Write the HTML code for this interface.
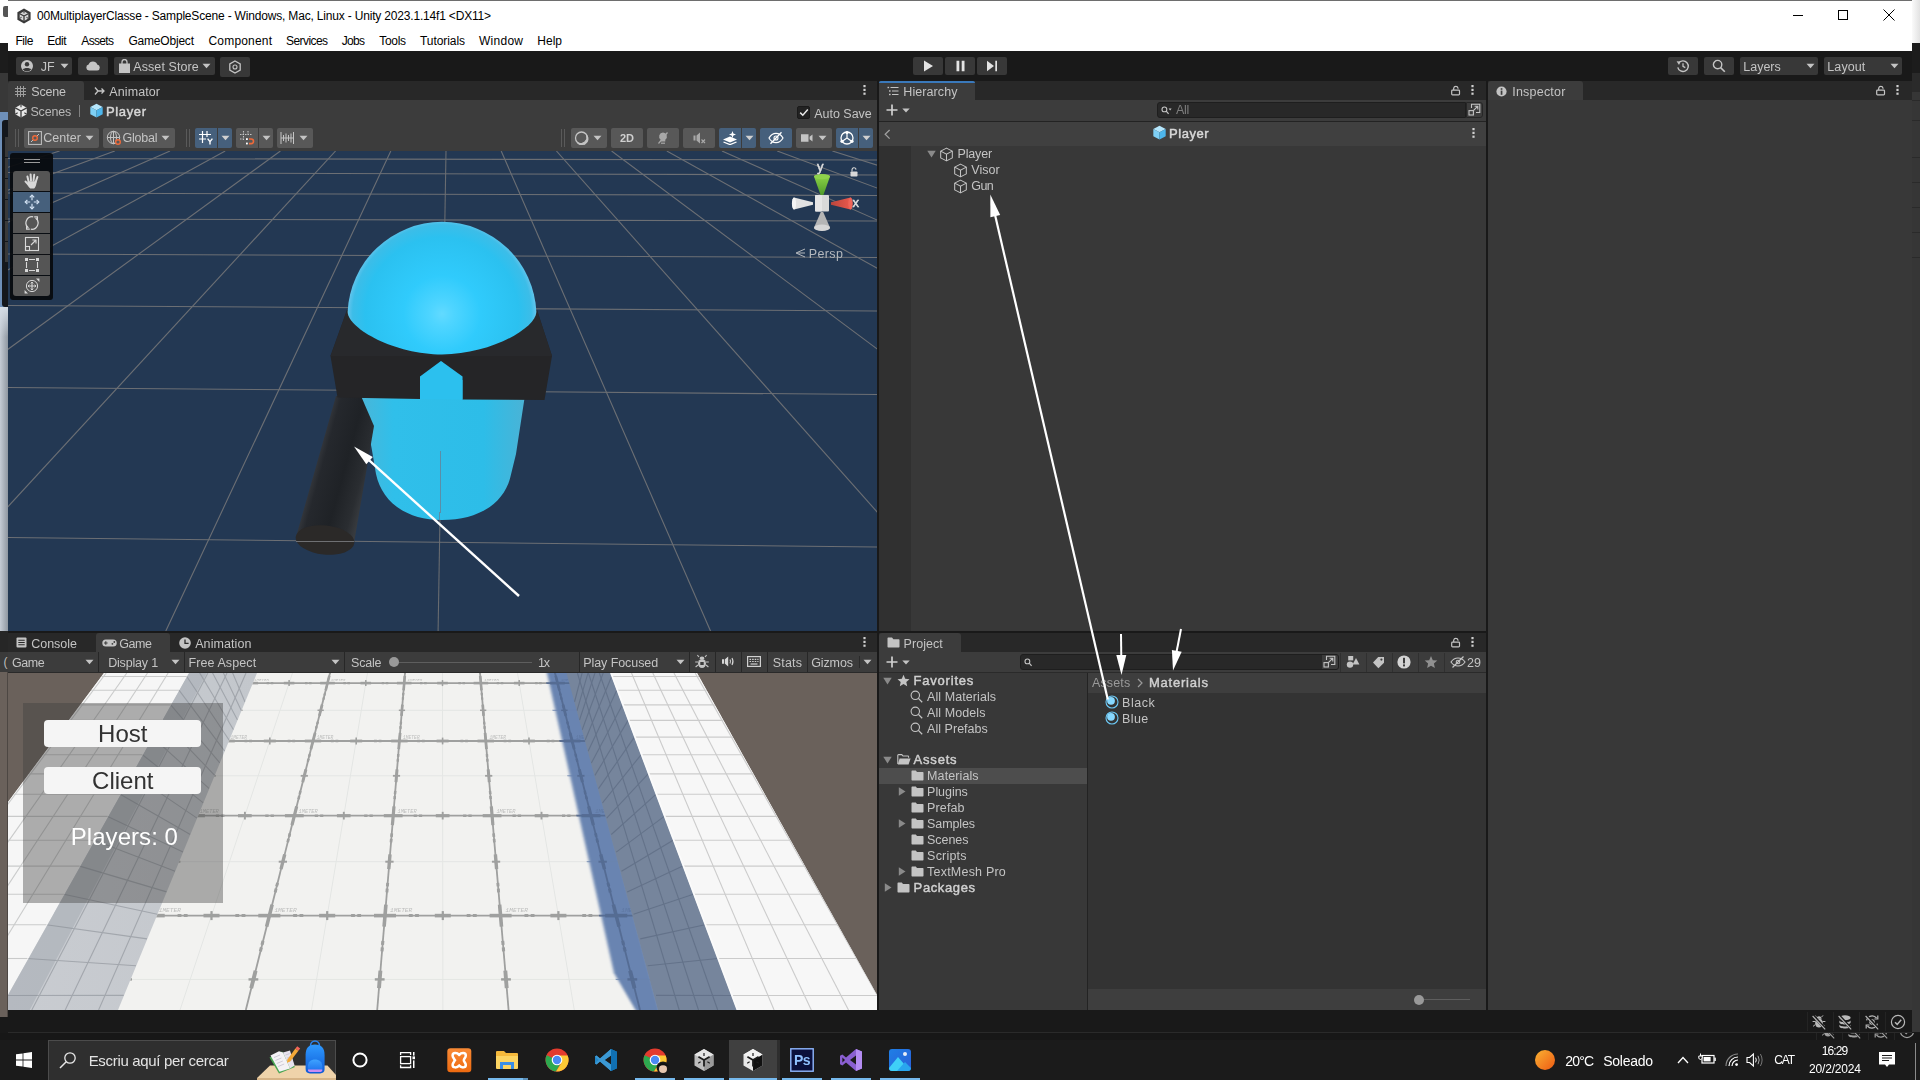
<!DOCTYPE html>
<html lang="en">
<head>
<meta charset="utf-8">
<title>Unity Editor</title>
<style>
*{margin:0;padding:0;box-sizing:border-box}
html,body{width:1920px;height:1080px;overflow:hidden;background:#191919}
body{position:relative;font-family:"Liberation Sans",sans-serif;font-size:12px;color:#c4c4c4}
div,span.t,svg.s{position:absolute}
span.t{white-space:nowrap;display:block}
.b{background:#585858;border-radius:2px}
.bb{background:#46607c;border-radius:2px}
.tb{background:#383838;border-radius:2px}
</style>
</head>
<body>
<div style="left:0px;top:0px;width:8px;height:43px;background:#fff"></div>
<div style="left:3px;top:6px;width:5px;height:11px;background:#555;border-radius:2px 0 0 2px"></div>
<div style="left:0px;top:43px;width:8px;height:30px;background:#1c1c1c"></div>
<div style="left:0px;top:73px;width:8px;height:39px;background:#383838"></div>
<div style="left:0px;top:112px;width:8px;height:200px;background:#6e8fb8"></div>
<div style="left:2px;top:120px;width:6px;height:187px;background:#14171c;border-radius:3px 0 0 3px"></div>
<div style="left:5px;top:137px;width:3px;height:20px;background:#3a3a3a"></div>
<div style="left:5px;top:158px;width:3px;height:20px;background:#3a3a3a"></div>
<div style="left:5px;top:179px;width:3px;height:20px;background:#3a3a3a"></div>
<div style="left:5px;top:200px;width:3px;height:20px;background:#3a3a3a"></div>
<div style="left:5px;top:221px;width:3px;height:20px;background:#3a3a3a"></div>
<div style="left:5px;top:242px;width:3px;height:20px;background:#3a3a3a"></div>
<div style="left:0px;top:307px;width:8px;height:324px;background:linear-gradient(90deg,#c5ccd5,#8f97a1)"></div>
<div style="left:0px;top:307px;width:8px;height:30px;background:linear-gradient(180deg,#d5dde6,rgba(200,208,218,0))"></div>
<div style="left:0px;top:631px;width:8px;height:21px;background:#262626"></div>
<div style="left:0px;top:652px;width:8px;height:20px;background:#3a3a3a"></div>
<span class="t" style="left:3.5px;top:654px;font-size:12.01px;line-height:16px;height:16px;color:#bdbdbd;">(</span>
<div style="left:0px;top:672px;width:8px;height:345px;background:#6a615b"></div>
<div style="left:7px;top:672px;width:1px;height:345px;background:#4d4743"></div>
<div style="left:0px;top:1017px;width:8px;height:23px;background:#191919"></div>
<div style="left:1912px;top:0px;width:8px;height:43px;background:linear-gradient(90deg,#fafafa,#e2e2e2)"></div>
<div style="left:1912px;top:43px;width:8px;height:30px;background:#1c1c1c"></div>
<div style="left:1912px;top:73px;width:8px;height:19px;background:#2a2a2a"></div>
<div style="left:1912px;top:92px;width:8px;height:940px;background:#363636"></div>
<div style="left:1912px;top:100px;width:8px;height:1px;background:#2a2a2a"></div>
<div style="left:1912px;top:120px;width:8px;height:1px;background:#2a2a2a"></div>
<div style="left:1912px;top:157px;width:8px;height:1px;background:#2a2a2a"></div>
<div style="left:1912px;top:182px;width:8px;height:1px;background:#2a2a2a"></div>
<div style="left:1912px;top:207px;width:8px;height:1px;background:#2a2a2a"></div>
<div style="left:1912px;top:232px;width:8px;height:1px;background:#2a2a2a"></div>
<div style="left:1912px;top:257px;width:8px;height:1px;background:#2a2a2a"></div>
<div style="left:8px;top:0px;width:1904px;height:51px;background:#fff"></div>
<div style="left:8px;top:0px;width:1904px;height:1px;background:#6e6e6e"></div>
<svg class="s" style="left:16px;top:8px;" width="16" height="16" viewBox="0 0 16 16"><path d="M8 .6 14.6 4.3V11.7L8 15.4 1.4 11.7V4.3Z" fill="#3a3a3a"/><path d="M8 3.2 12.3 5.7V10.4L8 12.9 3.7 10.4V5.7Z" fill="#d8d8d8"/><path d="M8 8V12.9M8 8 3.7 5.7M8 8 12.3 5.7" stroke="#3a3a3a" stroke-width="1.3" fill="none"/><path d="M8 3.2V5.4M3.7 10.4 5.6 9.3M12.3 10.4 10.4 9.3" stroke="#3a3a3a" stroke-width="1" fill="none"/></svg>
<span class="t" style="left:37px;top:8px;font-size:12px;line-height:16px;height:16px;color:#000;letter-spacing:-0.18px;">00MultiplayerClasse - SampleScene - Windows, Mac, Linux - Unity 2023.1.14f1 &lt;DX11&gt;</span>
<span class="t" style="left:15.5px;top:33px;font-size:12px;line-height:16px;height:16px;color:#000;letter-spacing:-0.51px;">File</span>
<span class="t" style="left:47.3px;top:33px;font-size:12px;line-height:16px;height:16px;color:#000;letter-spacing:-0.43px;">Edit</span>
<span class="t" style="left:81.3px;top:33px;font-size:12px;line-height:16px;height:16px;color:#000;letter-spacing:-0.66px;">Assets</span>
<span class="t" style="left:128.5px;top:33px;font-size:12px;line-height:16px;height:16px;color:#000;letter-spacing:-0.21px;">GameObject</span>
<span class="t" style="left:208.5px;top:33px;font-size:12px;line-height:16px;height:16px;color:#000;letter-spacing:0.18px;">Component</span>
<span class="t" style="left:286px;top:33px;font-size:12px;line-height:16px;height:16px;color:#000;letter-spacing:-0.57px;">Services</span>
<span class="t" style="left:341.7px;top:33px;font-size:12px;line-height:16px;height:16px;color:#000;letter-spacing:-0.68px;">Jobs</span>
<span class="t" style="left:379.3px;top:33px;font-size:12px;line-height:16px;height:16px;color:#000;letter-spacing:-0.33px;">Tools</span>
<span class="t" style="left:420px;top:33px;font-size:12px;line-height:16px;height:16px;color:#000;letter-spacing:-0.07px;">Tutorials</span>
<span class="t" style="left:479px;top:33px;font-size:12px;line-height:16px;height:16px;color:#000;letter-spacing:0.26px;">Window</span>
<span class="t" style="left:537.3px;top:33px;font-size:12px;line-height:16px;height:16px;color:#000;letter-spacing:0.01px;">Help</span>
<div style="left:1793px;top:15px;width:10px;height:1px;background:#000"></div>
<div style="left:1838px;top:10px;width:10px;height:10px;border:1px solid #000"></div>
<svg class="s" style="left:1883px;top:9px;" width="12" height="12" viewBox="0 0 12 12"><path d="M.5 .5 11.5 11.5M11.5 .5 .5 11.5" stroke="#000" stroke-width="1" fill="none"/></svg>
<div id="ui" style="left:0;top:0;width:1920px;height:1080px;will-change:transform">
<div style="left:8px;top:51px;width:1904px;height:30px;background:#191919"></div>
<div style="left:16px;top:57px;width:56px;height:18px;background:#383838;border-radius:2px"></div>
<svg class="s" style="left:20px;top:59px;" width="14" height="14" viewBox="0 0 14 14"><circle cx="7" cy="7" r="6" fill="#c4c4c4"/><circle cx="7" cy="5.3" r="2.2" fill="#383838"/><path d="M2.8 10.6C4 8.6 10 8.6 11.2 10.6A5.5 5.5 0 0 1 2.8 10.6Z" fill="#383838"/></svg>
<span class="t" style="left:40.7px;top:59.0px;font-size:12.5px;line-height:16px;height:16px;color:#c4c4c4;letter-spacing:0.11px;">JF</span>
<svg class="s" style="left:60px;top:63px;" width="9" height="6" viewBox="0 0 9 6"><path d="M.5 .8H8.5L4.5 5.2Z" fill="#c4c4c4"/></svg>
<div style="left:78px;top:57px;width:30px;height:18px;background:#383838;border-radius:2px"></div>
<svg class="s" style="left:85px;top:60px;" width="16" height="12" viewBox="0 0 16 12"><path d="M4 10.5A3 3 0 0 1 3.6 4.6 4.6 4.6 0 0 1 12.2 4.4 3.1 3.1 0 0 1 12.3 10.5Z" fill="#c4c4c4"/></svg>
<div style="left:114px;top:57px;width:101px;height:18px;background:#383838;border-radius:2px"></div>
<svg class="s" style="left:118px;top:59px;" width="13" height="15" viewBox="0 0 13 15"><path d="M1 4.5H12V14H1Z" fill="#c4c4c4"/><path d="M4 5V3A2.5 2.5 0 0 1 9 3V5" stroke="#c4c4c4" stroke-width="1.3" fill="none"/></svg>
<span class="t" style="left:133.3px;top:59.0px;font-size:12.5px;line-height:16px;height:16px;color:#c4c4c4;letter-spacing:0.08px;">Asset Store</span>
<svg class="s" style="left:202px;top:63px;" width="9" height="6" viewBox="0 0 9 6"><path d="M.5 .8H8.5L4.5 5.2Z" fill="#c4c4c4"/></svg>
<div style="left:220px;top:57px;width:30px;height:20px;background:#383838;border-radius:2px"></div>
<svg class="s" style="left:228px;top:60px;" width="14" height="14" viewBox="0 0 14 14"><path d="M7 1 12.2 4V10L7 13 1.8 10V4Z" stroke="#c4c4c4" stroke-width="1.3" fill="none"/><circle cx="7" cy="7" r="2" stroke="#c4c4c4" stroke-width="1.1" fill="none"/></svg>
<div style="left:913px;top:57px;width:30px;height:18px;background:#383838;border-radius:2px"></div>
<div style="left:945px;top:57px;width:30px;height:18px;background:#383838;border-radius:2px"></div>
<div style="left:977px;top:57px;width:30px;height:18px;background:#383838;border-radius:2px"></div>
<svg class="s" style="left:922px;top:60px;" width="13" height="12" viewBox="0 0 13 12"><path d="M2 .5 11 6 2 11.5Z" fill="#e4e4e4"/></svg>
<svg class="s" style="left:955px;top:60px;" width="11" height="12" viewBox="0 0 11 12"><path d="M1.5 .8H4.3V11.2H1.5ZM6.7 .8H9.5V11.2H6.7Z" fill="#e4e4e4"/></svg>
<svg class="s" style="left:986px;top:60px;" width="12" height="12" viewBox="0 0 12 12"><path d="M1 .8 8 6 1 11.2Z" fill="#e4e4e4"/><path d="M9.3 .8H11V11.2H9.3Z" fill="#e4e4e4"/></svg>
<div style="left:1668px;top:57px;width:30px;height:18px;background:#383838;border-radius:2px"></div>
<svg class="s" style="left:1676px;top:59px;" width="14" height="14" viewBox="0 0 14 14"><path d="M2.6 4.2A5.3 5.3 0 1 1 1.8 8.3" stroke="#c4c4c4" stroke-width="1.4" fill="none"/><path d="M.6 2.2 4.6 2.6 3 6Z" fill="#c4c4c4"/><path d="M7 4.2V7.4L9.3 8.6" stroke="#c4c4c4" stroke-width="1.3" fill="none"/></svg>
<div style="left:1704px;top:57px;width:30px;height:18px;background:#383838;border-radius:2px"></div>
<svg class="s" style="left:1712px;top:59px;" width="14" height="14" viewBox="0 0 14 14"><circle cx="5.6" cy="5.6" r="4.2" stroke="#c4c4c4" stroke-width="1.4" fill="none"/><path d="M8.6 8.6 12.8 12.8" stroke="#c4c4c4" stroke-width="1.6"/></svg>
<div style="left:1740px;top:57px;width:78px;height:18px;background:#383838;border-radius:2px"></div>
<span class="t" style="left:1743.3px;top:59.0px;font-size:12.5px;line-height:16px;height:16px;color:#c4c4c4;letter-spacing:-0.02px;">Layers</span>
<svg class="s" style="left:1806px;top:63px;" width="9" height="6" viewBox="0 0 9 6"><path d="M.5 .8H8.5L4.5 5.2Z" fill="#c4c4c4"/></svg>
<div style="left:1824px;top:57px;width:78px;height:18px;background:#383838;border-radius:2px"></div>
<span class="t" style="left:1827.3px;top:59.0px;font-size:12.5px;line-height:16px;height:16px;color:#c4c4c4;letter-spacing:0.09px;">Layout</span>
<svg class="s" style="left:1890px;top:63px;" width="9" height="6" viewBox="0 0 9 6"><path d="M.5 .8H8.5L4.5 5.2Z" fill="#c4c4c4"/></svg>
<div style="left:8px;top:81px;width:869px;height:19px;background:#282828"></div>
<div style="left:8px;top:81px;width:76px;height:19px;background:#3c3c3c;border-radius:3px 3px 0 0"></div>
<svg class="s" style="left:15px;top:86px;" width="11" height="11" viewBox="0 0 11 11"><path d="M2.5 0V11M5.5 0V11M8.5 0V11M0 2.5H11M0 5.5H11M0 8.5H11" stroke="#b0b0b0" stroke-width="1" opacity=".85"/></svg>
<span class="t" style="left:31.3px;top:84.0px;font-size:12.5px;line-height:16px;height:16px;color:#c4c4c4;letter-spacing:-0.19px;">Scene</span>
<svg class="s" style="left:94px;top:86px;" width="11" height="10" viewBox="0 0 11 10"><path d="M1 1.5 4 5H10M1 8.5 4 5M7.5 2.5 10 5 7.5 7.5" stroke="#c4c4c4" stroke-width="1.3" fill="none"/></svg>
<span class="t" style="left:109.3px;top:84.0px;font-size:12.5px;line-height:16px;height:16px;color:#c4c4c4;letter-spacing:0.10px;">Animator</span>
<svg class="s" style="left:863px;top:85.2px;" width="3" height="11" viewBox="0 0 3 11"><rect x=".4" y="0" width="2.2" height="2.2" fill="#d0d0d0"/><rect x=".4" y="3.8" width="2.2" height="2.2" fill="#d0d0d0"/><rect x=".4" y="7.6" width="2.2" height="2.2" fill="#d0d0d0"/></svg>
<div style="left:8px;top:100px;width:869px;height:51px;background:#3c3c3c"></div>
<svg class="s" style="left:14px;top:104px;" width="14" height="14" viewBox="0 0 16 16"><path d="M8 .6 14.6 4.4V11.6L8 15.4 1.4 11.6V4.4Z" fill="#e8e8e8"/><path d="M8 8V15.4M8 8 1.4 4.4M8 8 14.6 4.4" stroke="#3c3c3c" stroke-width="1.5" fill="none"/><path d="M8 .6V3.6M1.4 11.6 4.2 10M14.6 11.6 11.8 10" stroke="#3c3c3c" stroke-width="1.3" fill="none"/><path d="M8 3.6 4.2 5.8V10L8 12.2 11.8 10V5.8Z" fill="none" stroke="#3c3c3c" stroke-width=".01"/></svg>
<span class="t" style="left:30.4px;top:103.72px;font-size:12.5px;line-height:16px;height:16px;color:#b8b8b8;letter-spacing:-0.16px;">Scenes</span>
<div style="left:79px;top:105px;width:1px;height:12px;background:#808080"></div>
<svg class="s" style="left:89px;top:103px;" width="15" height="15" viewBox="0 0 16 16"><path d="M8 .8 14.6 4.2 8 7.6 1.4 4.2Z" fill="#b5e6fc"/><path d="M1.4 4.2 8 7.6V15.4L1.4 11.9Z" fill="#7fd0f5"/><path d="M14.6 4.2 8 7.6V15.4L14.6 11.9Z" fill="#4db6ec"/></svg>
<span class="t" style="left:106px;top:103.55px;font-size:13px;line-height:16px;height:16px;color:#d8d8d8;-webkit-text-stroke:0.45px currentColor;letter-spacing:0.63px;">Player</span>
<div style="left:797px;top:106px;width:13px;height:13px;background:#222;border-radius:2px;border:1px solid #1a1a1a"></div>
<svg class="s" style="left:799px;top:108px;" width="10" height="9" viewBox="0 0 10 9"><path d="M1.2 4.6 3.8 7.2 8.8 1.6" stroke="#e8e8e8" stroke-width="1.5" fill="none"/></svg>
<span class="t" style="left:814.3px;top:105.72px;font-size:12.5px;line-height:16px;height:16px;color:#c4c4c4;letter-spacing:-0.03px;">Auto Save</span>
<div style="left:15px;top:129px;width:1px;height:18px;background:#5a5a5a"></div>
<div style="left:18px;top:129px;width:1px;height:18px;background:#5a5a5a"></div>
<div class="b" style="left:24px;top:128px;width:75px;height:20px;"></div>
<svg class="s" style="left:28px;top:131px;" width="14" height="14" viewBox="0 0 14 14"><rect x=".6" y=".6" width="12.8" height="12.8" stroke="#c4c4c4" stroke-width="1" fill="none"/><path d="M3 11 11 3" stroke="#c4c4c4" stroke-width="1"/><circle cx="7" cy="7" r="2.3" stroke="#ef6a3a" stroke-width="1.4" fill="#585858"/></svg>
<span class="t" style="left:43.3px;top:129.72px;font-size:12.5px;line-height:16px;height:16px;color:#c4c4c4;letter-spacing:0.04px;">Center</span>
<svg class="s" style="left:85px;top:135px;" width="9" height="6" viewBox="0 0 9 6"><path d="M.5 .8H8.5L4.5 5.2Z" fill="#c4c4c4"/></svg>
<div class="b" style="left:103px;top:128px;width:72px;height:20px;"></div>
<svg class="s" style="left:106px;top:130px;" width="16" height="16" viewBox="0 0 16 16"><circle cx="7.5" cy="7.5" r="6.2" stroke="#c4c4c4" stroke-width="1" fill="none"/><ellipse cx="7.5" cy="7.5" rx="3" ry="6.2" stroke="#c4c4c4" stroke-width="1" fill="none"/><path d="M1.3 7.5H13.7M7.5 1.3V13.7" stroke="#c4c4c4" stroke-width="1"/><circle cx="12" cy="12" r="2.3" stroke="#ef6a3a" stroke-width="1.4" fill="#585858"/></svg>
<span class="t" style="left:122.4px;top:129.72px;font-size:12.5px;line-height:16px;height:16px;color:#c4c4c4;letter-spacing:-0.19px;">Global</span>
<svg class="s" style="left:161px;top:135px;" width="9" height="6" viewBox="0 0 9 6"><path d="M.5 .8H8.5L4.5 5.2Z" fill="#c4c4c4"/></svg>
<div style="left:186px;top:129px;width:1px;height:18px;background:#5a5a5a"></div>
<div style="left:189px;top:129px;width:1px;height:18px;background:#5a5a5a"></div>
<div class="bb" style="left:195px;top:128px;width:22px;height:20px;border-radius:2px 0 0 2px"></div>
<div class="bb" style="left:218px;top:128px;width:14px;height:20px;border-radius:0 2px 2px 0"></div>
<svg class="s" style="left:199px;top:131px;" width="15" height="14" viewBox="0 0 15 14"><path d="M3.5 0V12M8 0V6M0 3.5H12M0 8H7" stroke="#fff" stroke-width="1.2"/><path d="M8.6 7.6 11 10.6 13.4 7.6M11 10.6V13.6" stroke="#fff" stroke-width="1.4" fill="none"/></svg>
<svg class="s" style="left:221px;top:135px;" width="9" height="6" viewBox="0 0 9 6"><path d="M.5 .8H8.5L4.5 5.2Z" fill="#d0d0d0"/></svg>
<div class="b" style="left:236px;top:128px;width:22px;height:20px;border-radius:2px 0 0 2px"></div>
<div class="b" style="left:259px;top:128px;width:14px;height:20px;border-radius:0 2px 2px 0"></div>
<svg class="s" style="left:240px;top:131px;" width="15" height="14" viewBox="0 0 15 14"><path d="M3.5 0V9M8 0V5M0 3.5H12M0 8H5" stroke="#c4c4c4" stroke-width="1.1" stroke-dasharray="1.5 1"/><path d="M9 8H11.2A2.3 2.3 0 0 1 11.2 12.6H9" stroke="#ef6a3a" stroke-width="1.6" fill="none"/><rect x="6" y="7.2" width="1.8" height="1.8" fill="#fff"/><rect x="6" y="11.6" width="1.8" height="1.8" fill="#fff"/></svg>
<svg class="s" style="left:262px;top:135px;" width="9" height="6" viewBox="0 0 9 6"><path d="M.5 .8H8.5L4.5 5.2Z" fill="#c4c4c4"/></svg>
<div class="b" style="left:277px;top:128px;width:36px;height:20px;"></div>
<svg class="s" style="left:280px;top:131px;" width="15" height="14" viewBox="0 0 15 14"><path d="M1 1V13M13.5 1V13M3.5 4V10M6 2.5V11.5M8.5 4V10M11 2.5V11.5" stroke="#c4c4c4" stroke-width="1"/><path d="M1 7H13.5" stroke="#c4c4c4" stroke-width="1"/></svg>
<svg class="s" style="left:299px;top:135px;" width="9" height="6" viewBox="0 0 9 6"><path d="M.5 .8H8.5L4.5 5.2Z" fill="#c4c4c4"/></svg>
<div style="left:561px;top:129px;width:1px;height:18px;background:#5a5a5a"></div>
<div style="left:564px;top:129px;width:1px;height:18px;background:#5a5a5a"></div>
<div class="b" style="left:571px;top:128px;width:36px;height:20px;"></div>
<svg class="s" style="left:574px;top:131px;" width="16" height="14" viewBox="0 0 16 14"><circle cx="7.5" cy="7" r="6" stroke="#c4c4c4" stroke-width="1.3" fill="none"/><path d="M12.6 4A6 6 0 0 1 3.3 11.8 6.5 6.5 0 0 0 12.6 4Z" fill="#c4c4c4" stroke="#c4c4c4" stroke-width="1"/></svg>
<svg class="s" style="left:593px;top:135px;" width="9" height="6" viewBox="0 0 9 6"><path d="M.5 .8H8.5L4.5 5.2Z" fill="#c4c4c4"/></svg>
<div class="b" style="left:611px;top:128px;width:32px;height:20px;"></div>
<span class="t" style="left:620px;top:130px;font-size:11px;line-height:16px;height:16px;color:#d0d0d0;font-weight:bold">2D</span>
<div class="b" style="left:647px;top:128px;width:32px;height:20px;"></div>
<svg class="s" style="left:656px;top:131px;" width="14" height="14" viewBox="0 0 14 14"><path d="M7 1.5A4 4 0 0 1 9.3 8.7V10.5H4.7V8.7A4 4 0 0 1 7 1.5Z" fill="#a8a8a8"/><path d="M5 11.6H9V12.8H5Z" fill="#a8a8a8"/><path d="M2.5 12.5 11.5 1.5" stroke="#a8a8a8" stroke-width="1.2"/></svg>
<div class="b" style="left:683px;top:128px;width:32px;height:20px;"></div>
<svg class="s" style="left:692px;top:131px;" width="15" height="14" viewBox="0 0 15 14"><path d="M1.5 4.5H3.5V9.5H1.5ZM4.5 4.5 8 1.5V12.5L4.5 9.5Z" fill="#a8a8a8"/><path d="M9.5 8.5 13 12M13 8.5 9.5 12" stroke="#a8a8a8" stroke-width="1.2"/></svg>
<div class="bb" style="left:719px;top:128px;width:22px;height:20px;border-radius:2px 0 0 2px"></div>
<div class="bb" style="left:742px;top:128px;width:14px;height:20px;border-radius:0 2px 2px 0"></div>
<svg class="s" style="left:722px;top:131px;" width="16" height="14" viewBox="0 0 16 14"><path d="M1 8.5 8 11.5 15 8.5 8 5.5Z" fill="#fff"/><path d="M1.5 11 8 13.6 14.5 11" stroke="#fff" stroke-width="1.3" fill="none"/><path d="M10.5 0 11.4 2.6 14 3.5 11.4 4.4 10.5 7 9.6 4.4 7 3.5 9.6 2.6Z" fill="#fff"/></svg>
<svg class="s" style="left:745px;top:135px;" width="9" height="6" viewBox="0 0 9 6"><path d="M.5 .8H8.5L4.5 5.2Z" fill="#d0d0d0"/></svg>
<div class="bb" style="left:760px;top:128px;width:32px;height:20px;"></div>
<svg class="s" style="left:768px;top:131px;" width="16" height="14" viewBox="0 0 16 14"><path d="M1 7C3 3.5 5.5 2.3 8 2.3S13 3.5 15 7C13 10.5 10.5 11.7 8 11.7S3 10.5 1 7Z" stroke="#fff" stroke-width="1.2" fill="none"/><circle cx="8" cy="7" r="2" stroke="#fff" stroke-width="1.1" fill="none"/><path d="M2.5 12.8 13.5 1.2" stroke="#fff" stroke-width="1.3"/></svg>
<div class="b" style="left:796px;top:128px;width:36px;height:20px;"></div>
<svg class="s" style="left:800px;top:133px;" width="14" height="10" viewBox="0 0 14 10"><path d="M1 1.2H8.5V8.8H1ZM9.6 3.8 12.5 1.5V8.5L9.6 6.2Z" fill="#c4c4c4"/></svg>
<svg class="s" style="left:818px;top:135px;" width="9" height="6" viewBox="0 0 9 6"><path d="M.5 .8H8.5L4.5 5.2Z" fill="#c4c4c4"/></svg>
<div class="bb" style="left:836px;top:128px;width:22px;height:20px;border-radius:2px 0 0 2px"></div>
<div class="bb" style="left:859px;top:128px;width:14px;height:20px;border-radius:0 2px 2px 0"></div>
<svg class="s" style="left:839px;top:130px;" width="16" height="16" viewBox="0 0 16 16"><circle cx="8" cy="8" r="6" stroke="#fff" stroke-width="1.3" fill="none"/><path d="M8 2V8L3 11.5M8 8 13 11.5" stroke="#fff" stroke-width="1.2" fill="none"/><circle cx="8" cy="2.5" r="1.6" fill="#fff"/><circle cx="3" cy="11.3" r="1.6" fill="#fff"/><circle cx="13" cy="11.3" r="1.6" fill="#fff"/></svg>
<svg class="s" style="left:862px;top:135px;" width="9" height="6" viewBox="0 0 9 6"><path d="M.5 .8H8.5L4.5 5.2Z" fill="#d0d0d0"/></svg>
<svg class="s" style="left:8px;top:151px;background:#233853" width="869" height="480" viewBox="8 151 869 480"><g><path d="M-50.8 151L-2013.3 631" stroke="#6c6f74" stroke-width="1.1"/><path d="M4.4 151L-1740.9 631" stroke="#6c6f74" stroke-width="1.1"/><path d="M59.6 151L-1468.5 631" stroke="#6c6f74" stroke-width="1.1"/><path d="M114.8 151L-1196.2 631" stroke="#6c6f74" stroke-width="1.1"/><path d="M170.0 151L-923.8 631" stroke="#6c6f74" stroke-width="1.1"/><path d="M225.2 151L-651.4 631" stroke="#6c6f74" stroke-width="1.1"/><path d="M280.4 151L-379.0 631" stroke="#6c6f74" stroke-width="1.1"/><path d="M335.6 151L-106.6 631" stroke="#6c6f74" stroke-width="1.1"/><path d="M390.8 151L165.8 631" stroke="#6c6f74" stroke-width="1.1"/><path d="M446.0 151L438.1 631" stroke="#686b70" stroke-width="1.1"/><path d="M501.2 151L710.5 631" stroke="#6c6f74" stroke-width="1.1"/><path d="M556.4 151L982.9 631" stroke="#6c6f74" stroke-width="1.1"/><path d="M611.6 151L1255.3 631" stroke="#6c6f74" stroke-width="1.1"/><path d="M666.8 151L1527.7 631" stroke="#6c6f74" stroke-width="1.1"/><path d="M722.0 151L1800.0 631" stroke="#6c6f74" stroke-width="1.1"/><path d="M777.2 151L2072.4 631" stroke="#6c6f74" stroke-width="1.1"/><path d="M832.4 151L2344.8 631" stroke="#6c6f74" stroke-width="1.1"/><path d="M887.6 151L2617.2 631" stroke="#6c6f74" stroke-width="1.1"/><path d="M942.8 151L2889.6 631" stroke="#6c6f74" stroke-width="1.1"/><path d="M8 158.5L877 160" stroke="#6c6f74" stroke-width="1.1"/><path d="M8 172.5L877 175" stroke="#6c6f74" stroke-width="1.1"/><path d="M8 193L877 195.5" stroke="#6c6f74" stroke-width="1.1"/><path d="M8 219L877 221" stroke="#6c6f74" stroke-width="1.1"/><path d="M8 254L877 257.5" stroke="#6c6f74" stroke-width="1.1"/><path d="M8 305.5L877 311" stroke="#6c6f74" stroke-width="1.1"/><path d="M8 387.5L877 394.5" stroke="#6c6f74" stroke-width="1.1"/><path d="M8 537.5L877 547" stroke="#6c6f74" stroke-width="1.1"/></g><defs><radialGradient id="gs" cx="442" cy="314" r="96" gradientUnits="userSpaceOnUse"><stop offset="0" stop-color="#62daff"/><stop offset=".12" stop-color="#4fd5ff"/><stop offset=".4" stop-color="#30cbfc"/><stop offset=".8" stop-color="#2bc1f0"/><stop offset=".93" stop-color="#3cbde8"/><stop offset="1" stop-color="#72c8ee"/></radialGradient><linearGradient id="gb" x1="360" y1="0" x2="525" y2="0" gradientUnits="userSpaceOnUse"><stop offset="0" stop-color="#4ab6d8"/><stop offset=".2" stop-color="#30bfea"/><stop offset=".75" stop-color="#2dbde8"/><stop offset="1" stop-color="#4ab3d6"/></linearGradient><linearGradient id="gg" x1="310" y1="470" x2="368" y2="486" gradientUnits="userSpaceOnUse"><stop offset="0" stop-color="#3b3e43"/><stop offset=".18" stop-color="#25282d"/><stop offset=".55" stop-color="#1f2226"/><stop offset=".85" stop-color="#2a2d31"/><stop offset="1" stop-color="#383b3f"/></linearGradient></defs><path d="M358 380H527L524.4 399 516 454 510 478.5C503 504 478 520 442 520C406 520 382 502 376 474L371.6 448 366 420Z" fill="url(#gb)"/><path d="M336 396H361L374 426 354 543 296 537Z" fill="url(#gg)"/><ellipse cx="325" cy="540" rx="29.5" ry="14.5" fill="#2b2928" transform="rotate(6 325 540)"/><path d="M347 310 537 310 552 356 544.5 400 462.5 399.5V376.5L441 361 420 376.5V399L337.5 397.5 330.5 356Z" fill="#252527"/><path d="M347 310 537 310 552 356H330.5Z" fill="#28292c"/><path d="M420 399V376.5L441 361 462.5 376.5V399.5Z" fill="#2cc0ee"/><path d="M347.6 312A94.5 94.5 0 0 1 536.4 312C535.5 329 489 354.5 442 354.5C395 354.5 348.5 329 347.6 312Z" fill="url(#gs)"/><path d="M296 541.2L354 541.8" stroke="#6f7073" stroke-width="1" shape-rendering="crispEdges"/><path d="M441 451L439.9 520" stroke="#5a8ea8" stroke-width="1" shape-rendering="crispEdges"/></svg>
<div style="left:10px;top:153px;width:43px;height:147px;background:rgba(8,10,13,0.93);border-radius:3px"></div>
<div style="left:24px;top:159px;width:16px;height:1px;background:#9a9a9a"></div>
<div style="left:24px;top:162px;width:16px;height:1px;background:#9a9a9a"></div>
<div style="left:13px;top:171px;width:37px;height:20px;background:#555555;border-radius:3px 3px 0 0"></div>
<div style="left:13px;top:192px;width:37px;height:20px;background:#46607c;border-radius:0"></div>
<div style="left:13px;top:213px;width:37px;height:20px;background:#555555;border-radius:0"></div>
<div style="left:13px;top:234px;width:37px;height:20px;background:#555555;border-radius:0"></div>
<div style="left:13px;top:255px;width:37px;height:20px;background:#555555;border-radius:0"></div>
<div style="left:13px;top:276px;width:37px;height:20px;background:#555555;border-radius:0 0 3px 3px"></div>
<svg class="s" style="left:24px;top:172px;" width="16" height="18" viewBox="0 0 16 18"><path d="M4.6 9.5 3.4 4.4M7 8.6 6.6 2.4M9.5 8.6 10.2 2.8M11.8 9.6 13.4 5" stroke="#d8d8d8" stroke-width="2" stroke-linecap="round" fill="none"/><path d="M4.4 12.6 1.6 9.6" stroke="#d8d8d8" stroke-width="2.1" stroke-linecap="round" fill="none"/><path d="M3.6 9.2H12.8L12.2 12.4C11.8 14.4 10.6 16.4 9.8 16.6H6.4C5.2 16 3.6 13.6 3.2 12Z" fill="#d8d8d8"/></svg>
<svg class="s" style="left:24px;top:194px;" width="16" height="16" viewBox="0 0 16 16"><path d="M8 2V6.2M8 9.8V14M2 8H6.2M9.8 8H14" stroke="#d5e4f5" stroke-width="1.2"/><path d="M5.8 3.4 8 1.2 10.2 3.4M5.8 12.6 8 14.8 10.2 12.6M3.4 5.8 1.2 8 3.4 10.2M12.6 5.8 14.8 8 12.6 10.2" stroke="#d5e4f5" stroke-width="1.2" fill="none"/></svg>
<svg class="s" style="left:24px;top:215px;" width="16" height="16" viewBox="0 0 16 16"><path d="M9.2 1.8A6.3 6.3 0 0 0 4.4 13" stroke="#d8d8d8" stroke-width="1.2" fill="none"/><path d="M6.8 14.2A6.3 6.3 0 0 0 11.6 3" stroke="#d8d8d8" stroke-width="1.2" fill="none"/><path d="M2.6 11V14.2H5.8M13.4 5V1.8H10.2" stroke="#d8d8d8" stroke-width="1.2" fill="none"/></svg>
<svg class="s" style="left:24px;top:236px;" width="16" height="16" viewBox="0 0 16 16"><rect x="1.5" y="1.5" width="13" height="13" stroke="#d8d8d8" stroke-width="1.1" fill="none"/><rect x="1.5" y="10.5" width="4" height="4" stroke="#d8d8d8" stroke-width="1.1" fill="none"/><path d="M7 9 12 4M8.4 4H12V7.6" stroke="#d8d8d8" stroke-width="1.1" fill="none"/></svg>
<svg class="s" style="left:24px;top:257px;" width="16" height="16" viewBox="0 0 16 16"><path d="M5 2.5H11M5 13.5H11M2.5 5V11M13.5 5V11" stroke="#d8d8d8" stroke-width="1.1" fill="none"/><rect x="1" y="1" width="3" height="3" fill="#d8d8d8"/><rect x="12" y="1" width="3" height="3" fill="#d8d8d8"/><rect x="1" y="12" width="3" height="3" fill="#d8d8d8"/><rect x="12" y="12" width="3" height="3" fill="#d8d8d8"/></svg>
<svg class="s" style="left:24px;top:278px;" width="16" height="16" viewBox="0 0 16 16"><circle cx="8" cy="8" r="5.6" stroke="#d8d8d8" stroke-width="1" fill="none"/><path d="M8 4.4V11.6M4.4 8H11.6" stroke="#d8d8d8" stroke-width="1.1"/><path d="M6.8 5.4 8 4 9.2 5.4M6.8 10.6 8 12 9.2 10.6M5.4 6.8 4 8 5.4 9.2M10.6 6.8 12 8 10.6 9.2" stroke="#d8d8d8" stroke-width="1" fill="none"/><path d="M12 .6H15.4V4ZM4 15.4H.6V12Z" fill="#d8d8d8"/></svg>
<svg class="s" style="left:780px;top:161px;" width="80" height="72" viewBox="0 0 80 72"><defs><linearGradient id="gy" x1="0" y1="0" x2="0" y2="1"><stop offset="0" stop-color="#8fd648"/><stop offset="1" stop-color="#4f9a2a"/></linearGradient><linearGradient id="gx" x1="0" y1="0" x2="1" y2="0"><stop offset="0" stop-color="#b9453c"/><stop offset="1" stop-color="#ee5a4e"/></linearGradient></defs><path d="M34 15.6C34 13 50 13 50 15.6L43.4 34H40.6Z" fill="url(#gy)"/><ellipse cx="42" cy="15.6" rx="8" ry="2.6" fill="#8ed24c"/><path d="M70.5 36.6C72.8 36.6 72.8 48.6 70.5 48.6L51 43.8V41.2Z" fill="url(#gx)"/><ellipse cx="70.5" cy="42.6" rx="2.2" ry="6" fill="#ef6559"/><path d="M14 36.6C11.8 36.6 11.8 48.6 14 48.6L33 43.8V41.2Z" fill="#e2e2e2"/><ellipse cx="14" cy="42.6" rx="2.1" ry="6" fill="#f4f4f4"/><path d="M40.8 51H43.2L50 66.6C50 70.4 34 70.4 34 66.6Z" fill="#b5b5b5"/><ellipse cx="42" cy="66.8" rx="8" ry="3.2" fill="#d6d6d6"/><rect x="35" y="34" width="14" height="16.5" rx="1" fill="#d9d9d9"/><rect x="35" y="34" width="7" height="16.5" rx="1" fill="#e5e5e5"/></svg>
<span class="t" style="left:817px;top:158.5px;font-size:13px;line-height:16px;height:16px;color:#e0e0e0;-webkit-text-stroke:0.45px currentColor;">y</span>
<span class="t" style="left:852.5px;top:194.5px;font-size:13px;line-height:16px;height:16px;color:#e0e0e0;-webkit-text-stroke:0.45px currentColor;">x</span>
<svg class="s" style="left:850px;top:167px;" width="8" height="10" viewBox="0 0 8 10"><rect x=".5" y="4.5" width="7" height="5" rx=".8" fill="#d8d8d8"/><path d="M2 4.5V3A2 2 0 0 1 6 2.6" stroke="#d8d8d8" stroke-width="1.1" fill="none"/></svg>
<svg class="s" style="left:795px;top:248px;" width="11" height="10" viewBox="0 0 11 10"><path d="M10 1 1 5 10 9M2 5H10" stroke="#b4b8bd" stroke-width="1" fill="none"/></svg>
<span class="t" style="left:808.7px;top:245.9px;font-size:12.5px;line-height:16px;height:16px;color:#b4b8bd;letter-spacing:0.41px;">Persp</span>
<div style="left:877px;top:81px;width:2px;height:929px;background:#191919"></div>
<div style="left:1486px;top:81px;width:2px;height:929px;background:#191919"></div>
<div style="left:8px;top:631px;width:1480px;height:2px;background:#191919"></div>
<div style="left:879px;top:81px;width:607px;height:19px;background:#282828"></div>
<div style="left:879px;top:81px;width:96px;height:19px;background:#3c3c3c;border-radius:3px 3px 0 0"></div>
<div style="left:879px;top:81px;width:96px;height:2px;background:#3a79bb;border-radius:3px 3px 0 0"></div>
<svg class="s" style="left:887px;top:86px;" width="12" height="10" viewBox="0 0 12 10"><path d="M3.5 1.5H11.5M5 5H11.5M5 8.5H11.5" stroke="#c4c4c4" stroke-width="1.2"/><rect x=".5" y=".8" width="1.6" height="1.4" fill="#c4c4c4"/><rect x="2" y="4.3" width="1.6" height="1.4" fill="#c4c4c4"/><rect x="2" y="7.8" width="1.6" height="1.4" fill="#c4c4c4"/></svg>
<span class="t" style="left:903.3px;top:84.0px;font-size:12.5px;line-height:16px;height:16px;color:#c4c4c4;letter-spacing:0.08px;">Hierarchy</span>
<svg class="s" style="left:1451px;top:84.5px;" width="10" height="11" viewBox="0 0 10 11"><rect x=".7" y="5.2" width="7.8" height="4.6" rx=".8" stroke="#c4c4c4" stroke-width="1.2" fill="none"/><path d="M2.7 5V3.2A2.2 2.2 0 0 1 7 3.2V3.8" stroke="#c4c4c4" stroke-width="1.2" fill="none"/></svg>
<svg class="s" style="left:1471px;top:85.2px;" width="3" height="11" viewBox="0 0 3 11"><rect x=".4" y="0" width="2.2" height="2.2" fill="#d0d0d0"/><rect x=".4" y="3.8" width="2.2" height="2.2" fill="#d0d0d0"/><rect x=".4" y="7.6" width="2.2" height="2.2" fill="#d0d0d0"/></svg>
<div style="left:879px;top:100px;width:607px;height:21px;background:#3c3c3c"></div>
<div style="left:879px;top:121px;width:607px;height:1px;background:#232323"></div>
<svg class="s" style="left:886px;top:104px;" width="12" height="12" viewBox="0 0 12 12"><path d="M6 .5V11.5M.5 6H11.5" stroke="#d0d0d0" stroke-width="1.7"/></svg>
<svg class="s" style="left:902px;top:108px;" width="8" height="5" viewBox="0 0 8 5"><path d="M.3 .5H7.7L4 4.6Z" fill="#c4c4c4"/></svg>
<div style="left:1157px;top:102px;width:309px;height:16px;background:#282828;border-radius:3px 0 0 3px;border:1px solid #1e1e1e"></div>
<div style="left:1465.5px;top:102px;width:17px;height:16px;background:#3c3c3c;border-radius:0 3px 3px 0;border:1px solid #262626"></div>
<svg class="s" style="left:1161px;top:106px;" width="11" height="9" viewBox="0 0 11 9"><circle cx="3.4" cy="3.4" r="2.4" stroke="#c4c4c4" stroke-width="1.1" fill="none"/><path d="M5.2 5.2 7.6 7.8" stroke="#c4c4c4" stroke-width="1.2"/><path d="M7.6 2.6H10.6L9.1 4.4Z" fill="#c4c4c4"/></svg>
<span class="t" style="left:1176px;top:101.72px;font-size:12.5px;line-height:16px;height:16px;color:#7e7e7e;letter-spacing:-0.35px;">All</span>
<svg class="s" style="left:1467.6px;top:103.4px;" width="13" height="13" viewBox="0 0 13 13"><path d="M3.5 5V1.2H11.8V9.5H8" stroke="#c4c4c4" stroke-width="1.1" fill="none"/><rect x="1" y="7.6" width="4.4" height="4.4" stroke="#c4c4c4" stroke-width="1.1" fill="none"/><path d="M5.6 7.4 9.6 3.4M6.6 3.2H9.8V6.4" stroke="#c4c4c4" stroke-width="1.1" fill="none"/></svg>
<div style="left:879px;top:122px;width:607px;height:24px;background:#404040"></div>
<svg class="s" style="left:883.5px;top:128.5px;" width="7" height="11" viewBox="0 0 7 11"><path d="M5.6 1 1.2 5.3 5.6 9.6" stroke="#a0a0a0" stroke-width="1.3" fill="none"/></svg>
<svg class="s" style="left:1152px;top:125px;" width="15" height="15" viewBox="0 0 16 16"><path d="M8 .8 14.6 4.2 8 7.6 1.4 4.2Z" fill="#b5e6fc"/><path d="M1.4 4.2 8 7.6V15.4L1.4 11.9Z" fill="#7fd0f5"/><path d="M14.6 4.2 8 7.6V15.4L14.6 11.9Z" fill="#4db6ec"/></svg>
<span class="t" style="left:1169px;top:125.55px;font-size:13px;line-height:16px;height:16px;color:#d8d8d8;-webkit-text-stroke:0.45px currentColor;letter-spacing:0.57px;">Player</span>
<svg class="s" style="left:1472px;top:128.2px;" width="3" height="11" viewBox="0 0 3 11"><rect x=".4" y="0" width="2.2" height="2.2" fill="#d0d0d0"/><rect x=".4" y="3.8" width="2.2" height="2.2" fill="#d0d0d0"/><rect x=".4" y="7.6" width="2.2" height="2.2" fill="#d0d0d0"/></svg>
<div style="left:879px;top:146px;width:607px;height:485px;background:#383838"></div>
<div style="left:879px;top:146px;width:32px;height:485px;background:#303030"></div>
<svg class="s" style="left:927px;top:150px;" width="9" height="8" viewBox="0 0 9 8"><path d="M.3 .8H8.7L4.5 7.5Z" fill="#8a8a8a"/></svg>
<svg class="s" style="left:939px;top:146.6px;" width="15" height="15" viewBox="0 0 16 16"><path d="M8 1.2 14.2 4.4V11.6L8 14.8 1.8 11.6V4.4Z" stroke="#c4c4c4" stroke-width="1.1" fill="none" stroke-linejoin="round"/><path d="M1.8 4.4 8 7.6 14.2 4.4M8 7.6V14.8" stroke="#c4c4c4" stroke-width="1.1" fill="none"/></svg>
<span class="t" style="left:957.5px;top:145.72px;font-size:12.5px;line-height:16px;height:16px;color:#c4c4c4;letter-spacing:-0.15px;">Player</span>
<svg class="s" style="left:953px;top:162.6px;" width="15" height="15" viewBox="0 0 16 16"><path d="M8 1.2 14.2 4.4V11.6L8 14.8 1.8 11.6V4.4Z" stroke="#c4c4c4" stroke-width="1.1" fill="none" stroke-linejoin="round"/><path d="M1.8 4.4 8 7.6 14.2 4.4M8 7.6V14.8" stroke="#c4c4c4" stroke-width="1.1" fill="none"/></svg>
<span class="t" style="left:971.3px;top:161.72px;font-size:12.5px;line-height:16px;height:16px;color:#c4c4c4;letter-spacing:0.04px;">Visor</span>
<svg class="s" style="left:953px;top:178.6px;" width="15" height="15" viewBox="0 0 16 16"><path d="M8 1.2 14.2 4.4V11.6L8 14.8 1.8 11.6V4.4Z" stroke="#c4c4c4" stroke-width="1.1" fill="none" stroke-linejoin="round"/><path d="M1.8 4.4 8 7.6 14.2 4.4M8 7.6V14.8" stroke="#c4c4c4" stroke-width="1.1" fill="none"/></svg>
<span class="t" style="left:971.3px;top:177.72px;font-size:12.5px;line-height:16px;height:16px;color:#c4c4c4;letter-spacing:-0.61px;">Gun</span>
<div style="left:1488px;top:81px;width:424px;height:19px;background:#282828"></div>
<div style="left:1488px;top:81px;width:95px;height:19px;background:#3c3c3c;border-radius:3px 3px 0 0"></div>
<svg class="s" style="left:1496.4px;top:85.5px;" width="11" height="11" viewBox="0 0 11 11"><circle cx="5.5" cy="5.5" r="5.1" fill="#c4c4c4"/><rect x="4.7" y="4.6" width="1.7" height="4.2" fill="#3c3c3c"/><rect x="4.7" y="2.2" width="1.7" height="1.6" fill="#3c3c3c"/></svg>
<span class="t" style="left:1512.3px;top:84.0px;font-size:12.5px;line-height:16px;height:16px;color:#c4c4c4;letter-spacing:0.20px;">Inspector</span>
<svg class="s" style="left:1876px;top:84.5px;" width="10" height="11" viewBox="0 0 10 11"><rect x=".7" y="5.2" width="7.8" height="4.6" rx=".8" stroke="#c4c4c4" stroke-width="1.2" fill="none"/><path d="M2.7 5V3.2A2.2 2.2 0 0 1 7 3.2V3.8" stroke="#c4c4c4" stroke-width="1.2" fill="none"/></svg>
<svg class="s" style="left:1896px;top:85.2px;" width="3" height="11" viewBox="0 0 3 11"><rect x=".4" y="0" width="2.2" height="2.2" fill="#d0d0d0"/><rect x=".4" y="3.8" width="2.2" height="2.2" fill="#d0d0d0"/><rect x=".4" y="7.6" width="2.2" height="2.2" fill="#d0d0d0"/></svg>
<div style="left:1488px;top:100px;width:424px;height:910px;background:#383838"></div>
<div style="left:8px;top:633px;width:869px;height:19px;background:#282828"></div>
<div style="left:96px;top:633px;width:74px;height:19px;background:#3c3c3c;border-radius:3px 3px 0 0"></div>
<svg class="s" style="left:16px;top:637px;" width="11" height="11" viewBox="0 0 11 11"><rect x=".5" y=".5" width="10" height="10" rx="1" fill="#c4c4c4"/><path d="M2.3 3.2H8.7M2.3 5.5H8.7M2.3 7.8H8.7" stroke="#282828" stroke-width="1.1"/></svg>
<span class="t" style="left:31.2px;top:635.8px;font-size:12.5px;line-height:16px;height:16px;color:#c4c4c4;letter-spacing:-0.01px;">Console</span>
<svg class="s" style="left:102px;top:639px;" width="15" height="8" viewBox="0 0 15 8"><rect x=".3" y=".5" width="14.4" height="7" rx="3.5" fill="#c4c4c4"/><path d="M3.8 2.2V5.8M2 4H5.6" stroke="#3c3c3c" stroke-width="1.1"/><circle cx="10.4" cy="4.8" r=".9" fill="#3c3c3c"/><circle cx="12.3" cy="3" r=".9" fill="#3c3c3c"/></svg>
<span class="t" style="left:119.2px;top:635.8px;font-size:12.5px;line-height:16px;height:16px;color:#c4c4c4;letter-spacing:-0.41px;">Game</span>
<svg class="s" style="left:179px;top:637px;" width="12" height="12" viewBox="0 0 12 12"><circle cx="6" cy="6" r="5.8" fill="#c4c4c4"/><path d="M6 2.4V6.4H9.6" stroke="#282828" stroke-width="1.3" fill="none"/></svg>
<span class="t" style="left:195.2px;top:635.8px;font-size:12.5px;line-height:16px;height:16px;color:#c4c4c4;letter-spacing:0.08px;">Animation</span>
<svg class="s" style="left:863px;top:637.2px;" width="3" height="11" viewBox="0 0 3 11"><rect x=".4" y="0" width="2.2" height="2.2" fill="#d0d0d0"/><rect x=".4" y="3.8" width="2.2" height="2.2" fill="#d0d0d0"/><rect x=".4" y="7.6" width="2.2" height="2.2" fill="#d0d0d0"/></svg>
<div style="left:8px;top:652px;width:869px;height:21px;background:#3c3c3c"></div>
<div style="left:8px;top:672px;width:869px;height:1px;background:#2a2a2a"></div>
<div style="left:98px;top:652px;width:1px;height:20px;background:#272727"></div>
<div style="left:184px;top:652px;width:1px;height:20px;background:#272727"></div>
<div style="left:344px;top:652px;width:1px;height:20px;background:#272727"></div>
<div style="left:579px;top:652px;width:1px;height:20px;background:#272727"></div>
<div style="left:689px;top:652px;width:1px;height:20px;background:#272727"></div>
<div style="left:715px;top:652px;width:1px;height:20px;background:#272727"></div>
<div style="left:741px;top:652px;width:1px;height:20px;background:#272727"></div>
<div style="left:767px;top:652px;width:1px;height:20px;background:#272727"></div>
<div style="left:807px;top:652px;width:1px;height:20px;background:#272727"></div>
<div style="left:859px;top:656px;width:1px;height:12px;background:#2a2a2a"></div>
<span class="t" style="left:12.1px;top:655.1px;font-size:12.5px;line-height:16px;height:16px;color:#c4c4c4;letter-spacing:-0.48px;">Game</span>
<svg class="s" style="left:85px;top:659px;" width="9" height="6" viewBox="0 0 9 6"><path d="M.5 .8H8.5L4.5 5.2Z" fill="#c4c4c4"/></svg>
<span class="t" style="left:108.2px;top:655.1px;font-size:12.5px;line-height:16px;height:16px;color:#c4c4c4;letter-spacing:-0.19px;">Display 1</span>
<svg class="s" style="left:171px;top:659px;" width="9" height="6" viewBox="0 0 9 6"><path d="M.5 .8H8.5L4.5 5.2Z" fill="#c4c4c4"/></svg>
<span class="t" style="left:188.4px;top:655.1px;font-size:12.5px;line-height:16px;height:16px;color:#c4c4c4;letter-spacing:0.11px;">Free Aspect</span>
<svg class="s" style="left:331px;top:659px;" width="9" height="6" viewBox="0 0 9 6"><path d="M.5 .8H8.5L4.5 5.2Z" fill="#c4c4c4"/></svg>
<span class="t" style="left:351px;top:655.1px;font-size:12.5px;line-height:16px;height:16px;color:#c4c4c4;letter-spacing:-0.19px;">Scale</span>
<div style="left:394px;top:662px;width:138px;height:1px;background:#5e5e5e"></div>
<div style="left:389px;top:657px;width:10px;height:10px;background:#999;border-radius:5px"></div>
<span class="t" style="left:538px;top:655.1px;font-size:12.5px;line-height:16px;height:16px;color:#c4c4c4;letter-spacing:-1.20px;">1x</span>
<span class="t" style="left:583.2px;top:655.1px;font-size:12.5px;line-height:16px;height:16px;color:#c4c4c4;letter-spacing:-0.07px;">Play Focused</span>
<svg class="s" style="left:676px;top:659px;" width="9" height="6" viewBox="0 0 9 6"><path d="M.5 .8H8.5L4.5 5.2Z" fill="#c4c4c4"/></svg>
<svg class="s" style="left:694px;top:654px;" width="16" height="16" viewBox="0 0 16 16"><ellipse cx="8" cy="9.5" rx="4" ry="4.6" fill="#c4c4c4"/><path d="M5.6 5A2.4 2.4 0 0 1 10.4 5Z" fill="#c4c4c4"/><path d="M5 3 3.4 1.2M11 3 12.6 1.2M4 8H1.2M4 11 1.6 13M12 8H14.8M12 11 14.4 13" stroke="#c4c4c4" stroke-width="1.1"/><rect x="6.3" y="8" width="3.4" height="3" fill="#3c3c3c"/></svg>
<svg class="s" style="left:721px;top:655px;" width="14" height="13" viewBox="0 0 14 13"><path d="M1 4.2H3.2V8.8H1ZM4 4.2 7.2 1.5V11.5L4 8.8Z" fill="#d8d8d8"/><path d="M9 4.6Q10 6.5 9 8.4M11 3Q13 6.5 11 10" stroke="#d8d8d8" stroke-width="1.1" fill="none"/></svg>
<svg class="s" style="left:747px;top:656px;" width="14" height="11" viewBox="0 0 14 11"><rect x=".6" y=".6" width="12.8" height="9.8" stroke="#d0d0d0" stroke-width="1.2" fill="none"/><path d="M2.5 3.3H11.5M2.5 5.5H11.5" stroke="#d0d0d0" stroke-width="1.2" stroke-dasharray="1.6 1"/><path d="M3.5 8H10.5" stroke="#d0d0d0" stroke-width="1.2"/></svg>
<span class="t" style="left:772.7px;top:655.1px;font-size:12.5px;line-height:16px;height:16px;color:#c4c4c4;letter-spacing:0.20px;">Stats</span>
<span class="t" style="left:811.2px;top:655.1px;font-size:12.5px;line-height:16px;height:16px;color:#c4c4c4;letter-spacing:-0.11px;">Gizmos</span>
<svg class="s" style="left:863px;top:659px;" width="9" height="6" viewBox="0 0 9 6"><path d="M.5 .8H8.5L4.5 5.2Z" fill="#c4c4c4"/></svg>
<svg class="s" style="left:8px;top:673px" width="869" height="337" viewBox="8 673 869 337"><defs><linearGradient id="wl" x1="0" y1="0" x2="1" y2="0"><stop offset="0" stop-color="#c9ccd1"/><stop offset="1" stop-color="#c3c7cc"/></linearGradient><filter id="bl" filterUnits="userSpaceOnUse" x="500" y="660" width="200" height="360"><feGaussianBlur stdDeviation="1.8 0.5"/></filter><filter id="bl2" filterUnits="userSpaceOnUse" x="0" y="660" width="890" height="360"><feGaussianBlur stdDeviation="0.4"/></filter><filter id="bl3" filterUnits="userSpaceOnUse" x="0" y="660" width="890" height="360"><feGaussianBlur stdDeviation="0.45"/></filter><clipPath id="cpf"><path d="M257 673H570L660 1010H118Z"/></clipPath><clipPath id="cps"><path d="M544 673H570L660 1010H633L612 973Z"/></clipPath><clipPath id="cpl"><path d="M104 673H189L8 995V802Z"/></clipPath><clipPath id="cplw"><path d="M189 673H257L118 1010H8V995Z"/></clipPath><clipPath id="cprw"><path d="M566.5 673H610.5L737 1010H658Z"/></clipPath><clipPath id="cpr"><path d="M610.5 673H697L877 995V1010H737Z"/></clipPath></defs><rect x="8" y="673" width="869" height="337" fill="#6a615b"/><path d="M104 673H697L877 995V1010H8V802Z" fill="#f2f2f0"/><path d="M104 673H189L8 995V802Z" fill="#f6f6f6"/><path d="M189 673H257L118 1010H8V995Z" fill="url(#wl)"/><path d="M610.5 673H697L877 995V1010H737Z" fill="#f7f7f7"/><g clip-path="url(#cpf)"><g filter="url(#bl3)"><path d="M-82.5 673L-477.0 1010" stroke="#e4e6e4" stroke-width="1"/><path d="M-7.5 673L-345.6 1010" stroke="#e4e6e4" stroke-width="1"/><path d="M67.5 673L-214.2 1010" stroke="#e4e6e4" stroke-width="1"/><path d="M142.5 673L-82.8 1010" stroke="#e4e6e4" stroke-width="1"/><path d="M217.5 673L48.6 1010" stroke="#e4e6e4" stroke-width="1"/><path d="M292.5 673L180.0 1010" stroke="#e4e6e4" stroke-width="1"/><path d="M367.5 673L311.5 1010" stroke="#e4e6e4" stroke-width="1"/><path d="M442.5 673L442.9 1010" stroke="#e4e6e4" stroke-width="1"/><path d="M517.5 673L574.3 1010" stroke="#e4e6e4" stroke-width="1"/><path d="M592.5 673L705.7 1010" stroke="#e4e6e4" stroke-width="1"/><path d="M667.5 673L837.1 1010" stroke="#e4e6e4" stroke-width="1"/><path d="M742.5 673L968.5 1010" stroke="#e4e6e4" stroke-width="1"/><path d="M817.5 673L1100.0 1010" stroke="#e4e6e4" stroke-width="1"/><path d="M892.5 673L1231.4 1010" stroke="#e4e6e4" stroke-width="1"/><path d="M967.5 673L1362.8 1010" stroke="#e4e6e4" stroke-width="1"/><path d="M1042.5 673L1494.2 1010" stroke="#e4e6e4" stroke-width="1"/><path d="M1117.5 673L1625.6 1010" stroke="#e4e6e4" stroke-width="1"/><path d="M100 710.3H700" stroke="#e4e6e4" stroke-width="1"/><path d="M100 775.8H700" stroke="#e4e6e4" stroke-width="1"/><path d="M100 861.7H700" stroke="#e4e6e4" stroke-width="1"/><path d="M100 979.4H700" stroke="#e4e6e4" stroke-width="1"/><path d="M105.0 673L-148.5 1010" stroke="#9fa09f" stroke-width="1.8"/><path d="M109.2 667.4L107.4 669.8" stroke="#9fa09f" stroke-width="2.1"/><path d="M106.2 671.4L104.4 673.8" stroke="#9fa09f" stroke-width="2.1"/><path d="M102.9 675.8L91.9 690.4" stroke="#9fa09f" stroke-width="2.6"/><path d="M90.0 692.9L88.1 695.5" stroke="#9fa09f" stroke-width="2.2"/><path d="M86.8 697.1L84.9 699.7" stroke="#9fa09f" stroke-width="2.2"/><path d="M81.2 704.7L72.7 715.9" stroke="#9fa09f" stroke-width="2.7"/><path d="M73.8 710.3H80.1" stroke="#9fa09f" stroke-width="1.5"/><path d="M68.5 721.6L66.4 724.3" stroke="#9fa09f" stroke-width="2.3"/><path d="M65.1 726.1L63.0 728.8" stroke="#9fa09f" stroke-width="2.3"/><path d="M60.0 732.8L47.7 749.2" stroke="#9fa09f" stroke-width="2.8"/><path d="M44.1 754.0L41.9 756.9" stroke="#9fa09f" stroke-width="2.4"/><path d="M40.5 758.8L38.3 761.7" stroke="#9fa09f" stroke-width="2.4"/><path d="M32.5 769.4L22.9 782.2" stroke="#9fa09f" stroke-width="3.0"/><path d="M24.1 775.8H31.3" stroke="#9fa09f" stroke-width="1.8"/><path d="M16.3 790.9L13.9 794.1" stroke="#9fa09f" stroke-width="2.5"/><path d="M12.4 796.0L10.1 799.2" stroke="#9fa09f" stroke-width="2.5"/><path d="M4.8 806.3L-9.4 825.1" stroke="#9fa09f" stroke-width="3.2"/><path d="M-15.7 833.4L-18.2 836.8" stroke="#9fa09f" stroke-width="2.7"/><path d="M-19.8 838.9L-22.3 842.3" stroke="#9fa09f" stroke-width="2.7"/><path d="M-31.4 854.4L-42.5 869.1" stroke="#9fa09f" stroke-width="3.4"/><path d="M-41.1 861.7H-32.8" stroke="#9fa09f" stroke-width="2.0"/><path d="M-52.8 882.8L-55.5 886.4" stroke="#9fa09f" stroke-width="2.9"/><path d="M-57.3 888.7L-60.0 892.4" stroke="#9fa09f" stroke-width="2.9"/><path d="M-69.2 904.6L-85.8 926.6" stroke="#9fa09f" stroke-width="3.6"/><path d="M-96.5 940.9L-99.5 944.9" stroke="#9fa09f" stroke-width="3.1"/><path d="M-101.4 947.4L-104.4 951.3" stroke="#9fa09f" stroke-width="3.1"/><path d="M-118.9 970.7L-132.1 988.2" stroke="#9fa09f" stroke-width="3.9"/><path d="M-130.4 979.4H-120.6" stroke="#9fa09f" stroke-width="2.4"/><path d="M-148.7 1010.3L-152.0 1014.6" stroke="#9fa09f" stroke-width="3.4"/><path d="M-154.0 1017.4L-157.3 1021.7" stroke="#9fa09f" stroke-width="3.4"/><path d="M180.0 673L-17.1 1010" stroke="#9fa09f" stroke-width="1.8"/><path d="M183.3 667.4L181.9 669.8" stroke="#9fa09f" stroke-width="2.1"/><path d="M181.0 671.4L179.5 673.8" stroke="#9fa09f" stroke-width="2.1"/><path d="M178.4 675.8L169.8 690.4" stroke="#9fa09f" stroke-width="2.6"/><path d="M168.4 692.9L166.8 695.5" stroke="#9fa09f" stroke-width="2.2"/><path d="M165.9 697.1L164.4 699.7" stroke="#9fa09f" stroke-width="2.2"/><path d="M161.5 704.7L154.9 715.9" stroke="#9fa09f" stroke-width="2.7"/><path d="M155.0 710.3H161.3" stroke="#9fa09f" stroke-width="1.5"/><path d="M151.6 721.6L150.0 724.3" stroke="#9fa09f" stroke-width="2.3"/><path d="M149.0 726.1L147.4 728.8" stroke="#9fa09f" stroke-width="2.3"/><path d="M145.0 732.8L135.4 749.2" stroke="#9fa09f" stroke-width="2.8"/><path d="M132.6 754.0L130.9 756.9" stroke="#9fa09f" stroke-width="2.4"/><path d="M129.8 758.8L128.1 761.7" stroke="#9fa09f" stroke-width="2.4"/><path d="M123.6 769.4L116.1 782.2" stroke="#9fa09f" stroke-width="3.0"/><path d="M116.3 775.8H123.5" stroke="#9fa09f" stroke-width="1.8"/><path d="M111.0 790.9L109.2 794.1" stroke="#9fa09f" stroke-width="2.5"/><path d="M108.0 796.0L106.2 799.2" stroke="#9fa09f" stroke-width="2.5"/><path d="M102.1 806.3L91.1 825.1" stroke="#9fa09f" stroke-width="3.2"/><path d="M86.2 833.4L84.2 836.8" stroke="#9fa09f" stroke-width="2.7"/><path d="M83.0 838.9L81.0 842.3" stroke="#9fa09f" stroke-width="2.7"/><path d="M73.9 854.4L65.3 869.1" stroke="#9fa09f" stroke-width="3.4"/><path d="M65.5 861.7H73.8" stroke="#9fa09f" stroke-width="2.0"/><path d="M57.3 882.8L55.2 886.4" stroke="#9fa09f" stroke-width="2.9"/><path d="M53.8 888.7L51.7 892.4" stroke="#9fa09f" stroke-width="2.9"/><path d="M44.6 904.6L31.7 926.6" stroke="#9fa09f" stroke-width="3.6"/><path d="M23.3 940.9L21.0 944.9" stroke="#9fa09f" stroke-width="3.1"/><path d="M19.5 947.4L17.2 951.3" stroke="#9fa09f" stroke-width="3.1"/><path d="M5.9 970.7L-4.3 988.2" stroke="#9fa09f" stroke-width="3.9"/><path d="M-4.1 979.4H5.7" stroke="#9fa09f" stroke-width="2.4"/><path d="M-17.2 1010.3L-19.8 1014.6" stroke="#9fa09f" stroke-width="3.4"/><path d="M-21.4 1017.4L-23.9 1021.7" stroke="#9fa09f" stroke-width="3.4"/><path d="M255.0 673L114.3 1010" stroke="#9fa09f" stroke-width="1.8"/><path d="M257.4 667.4L256.3 669.8" stroke="#9fa09f" stroke-width="2.1"/><path d="M255.7 671.4L254.7 673.8" stroke="#9fa09f" stroke-width="2.1"/><path d="M253.8 675.8L247.7 690.4" stroke="#9fa09f" stroke-width="2.6"/><path d="M246.7 692.9L245.6 695.5" stroke="#9fa09f" stroke-width="2.2"/><path d="M244.9 697.1L243.8 699.7" stroke="#9fa09f" stroke-width="2.2"/><path d="M241.8 704.7L237.1 715.9" stroke="#9fa09f" stroke-width="2.7"/><path d="M236.3 710.3H242.6" stroke="#9fa09f" stroke-width="1.5"/><path d="M234.7 721.6L233.6 724.3" stroke="#9fa09f" stroke-width="2.3"/><path d="M232.9 726.1L231.7 728.8" stroke="#9fa09f" stroke-width="2.3"/><path d="M230.1 732.8L223.2 749.2" stroke="#9fa09f" stroke-width="2.8"/><path d="M221.2 754.0L220.0 756.9" stroke="#9fa09f" stroke-width="2.4"/><path d="M219.2 758.8L218.0 761.7" stroke="#9fa09f" stroke-width="2.4"/><path d="M214.8 769.4L209.4 782.2" stroke="#9fa09f" stroke-width="3.0"/><path d="M208.5 775.8H215.7" stroke="#9fa09f" stroke-width="1.8"/><path d="M205.8 790.9L204.5 794.1" stroke="#9fa09f" stroke-width="2.5"/><path d="M203.6 796.0L202.3 799.2" stroke="#9fa09f" stroke-width="2.5"/><path d="M199.4 806.3L191.5 825.1" stroke="#9fa09f" stroke-width="3.2"/><path d="M188.0 833.4L186.6 836.8" stroke="#9fa09f" stroke-width="2.7"/><path d="M185.7 838.9L184.3 842.3" stroke="#9fa09f" stroke-width="2.7"/><path d="M179.3 854.4L173.1 869.1" stroke="#9fa09f" stroke-width="3.4"/><path d="M172.1 861.7H180.4" stroke="#9fa09f" stroke-width="2.0"/><path d="M167.4 882.8L165.9 886.4" stroke="#9fa09f" stroke-width="2.9"/><path d="M165.0 888.7L163.4 892.4" stroke="#9fa09f" stroke-width="2.9"/><path d="M158.3 904.6L149.1 926.6" stroke="#9fa09f" stroke-width="3.6"/><path d="M143.2 940.9L141.5 944.9" stroke="#9fa09f" stroke-width="3.1"/><path d="M140.5 947.4L138.8 951.3" stroke="#9fa09f" stroke-width="3.1"/><path d="M130.7 970.7L123.4 988.2" stroke="#9fa09f" stroke-width="3.9"/><path d="M122.2 979.4H132.0" stroke="#9fa09f" stroke-width="2.4"/><path d="M114.2 1010.3L112.4 1014.6" stroke="#9fa09f" stroke-width="3.4"/><path d="M111.3 1017.4L109.4 1021.7" stroke="#9fa09f" stroke-width="3.4"/><path d="M330.0 673L245.8 1010" stroke="#9fa09f" stroke-width="1.8"/><path d="M331.4 667.4L330.8 669.8" stroke="#9fa09f" stroke-width="2.1"/><path d="M330.4 671.4L329.8 673.8" stroke="#9fa09f" stroke-width="2.1"/><path d="M329.3 675.8L325.7 690.4" stroke="#9fa09f" stroke-width="2.6"/><path d="M325.0 692.9L324.4 695.5" stroke="#9fa09f" stroke-width="2.2"/><path d="M324.0 697.1L323.3 699.7" stroke="#9fa09f" stroke-width="2.2"/><path d="M322.1 704.7L319.3 715.9" stroke="#9fa09f" stroke-width="2.7"/><path d="M317.5 710.3H323.8" stroke="#9fa09f" stroke-width="1.5"/><path d="M317.9 721.6L317.2 724.3" stroke="#9fa09f" stroke-width="2.3"/><path d="M316.7 726.1L316.0 728.8" stroke="#9fa09f" stroke-width="2.3"/><path d="M315.1 732.8L310.9 749.2" stroke="#9fa09f" stroke-width="2.8"/><path d="M309.8 754.0L309.0 756.9" stroke="#9fa09f" stroke-width="2.4"/><path d="M308.6 758.8L307.8 761.7" stroke="#9fa09f" stroke-width="2.4"/><path d="M305.9 769.4L302.7 782.2" stroke="#9fa09f" stroke-width="3.0"/><path d="M300.7 775.8H307.9" stroke="#9fa09f" stroke-width="1.8"/><path d="M300.5 790.9L299.7 794.1" stroke="#9fa09f" stroke-width="2.5"/><path d="M299.2 796.0L298.5 799.2" stroke="#9fa09f" stroke-width="2.5"/><path d="M296.7 806.3L292.0 825.1" stroke="#9fa09f" stroke-width="3.2"/><path d="M289.9 833.4L289.1 836.8" stroke="#9fa09f" stroke-width="2.7"/><path d="M288.5 838.9L287.7 842.3" stroke="#9fa09f" stroke-width="2.7"/><path d="M284.7 854.4L281.0 869.1" stroke="#9fa09f" stroke-width="3.4"/><path d="M278.7 861.7H287.0" stroke="#9fa09f" stroke-width="2.0"/><path d="M277.6 882.8L276.6 886.4" stroke="#9fa09f" stroke-width="2.9"/><path d="M276.1 888.7L275.2 892.4" stroke="#9fa09f" stroke-width="2.9"/><path d="M272.1 904.6L266.6 926.6" stroke="#9fa09f" stroke-width="3.6"/><path d="M263.0 940.9L262.0 944.9" stroke="#9fa09f" stroke-width="3.1"/><path d="M261.4 947.4L260.4 951.3" stroke="#9fa09f" stroke-width="3.1"/><path d="M255.6 970.7L251.2 988.2" stroke="#9fa09f" stroke-width="3.9"/><path d="M248.5 979.4H258.3" stroke="#9fa09f" stroke-width="2.4"/><path d="M245.7 1010.3L244.6 1014.6" stroke="#9fa09f" stroke-width="3.4"/><path d="M243.9 1017.4L242.8 1021.7" stroke="#9fa09f" stroke-width="3.4"/><path d="M405.0 673L377.2 1010" stroke="#9fa09f" stroke-width="1.8"/><path d="M405.5 667.4L405.3 669.8" stroke="#9fa09f" stroke-width="2.1"/><path d="M405.1 671.4L404.9 673.8" stroke="#9fa09f" stroke-width="2.1"/><path d="M404.8 675.8L403.6 690.4" stroke="#9fa09f" stroke-width="2.6"/><path d="M403.4 692.9L403.1 695.5" stroke="#9fa09f" stroke-width="2.2"/><path d="M403.0 697.1L402.8 699.7" stroke="#9fa09f" stroke-width="2.2"/><path d="M402.4 704.7L401.5 715.9" stroke="#9fa09f" stroke-width="2.7"/><path d="M398.8 710.3H405.1" stroke="#9fa09f" stroke-width="1.5"/><path d="M401.0 721.6L400.8 724.3" stroke="#9fa09f" stroke-width="2.3"/><path d="M400.6 726.1L400.4 728.8" stroke="#9fa09f" stroke-width="2.3"/><path d="M400.1 732.8L398.7 749.2" stroke="#9fa09f" stroke-width="2.8"/><path d="M398.3 754.0L398.1 756.9" stroke="#9fa09f" stroke-width="2.4"/><path d="M397.9 758.8L397.7 761.7" stroke="#9fa09f" stroke-width="2.4"/><path d="M397.0 769.4L396.0 782.2" stroke="#9fa09f" stroke-width="3.0"/><path d="M392.9 775.8H400.1" stroke="#9fa09f" stroke-width="1.8"/><path d="M395.3 790.9L395.0 794.1" stroke="#9fa09f" stroke-width="2.5"/><path d="M394.8 796.0L394.6 799.2" stroke="#9fa09f" stroke-width="2.5"/><path d="M394.0 806.3L392.4 825.1" stroke="#9fa09f" stroke-width="3.2"/><path d="M391.8 833.4L391.5 836.8" stroke="#9fa09f" stroke-width="2.7"/><path d="M391.3 838.9L391.0 842.3" stroke="#9fa09f" stroke-width="2.7"/><path d="M390.0 854.4L388.8 869.1" stroke="#9fa09f" stroke-width="3.4"/><path d="M385.3 861.7H393.6" stroke="#9fa09f" stroke-width="2.0"/><path d="M387.7 882.8L387.4 886.4" stroke="#9fa09f" stroke-width="2.9"/><path d="M387.2 888.7L386.9 892.4" stroke="#9fa09f" stroke-width="2.9"/><path d="M385.9 904.6L384.1 926.6" stroke="#9fa09f" stroke-width="3.6"/><path d="M382.9 940.9L382.5 944.9" stroke="#9fa09f" stroke-width="3.1"/><path d="M382.3 947.4L382.0 951.3" stroke="#9fa09f" stroke-width="3.1"/><path d="M380.4 970.7L379.0 988.2" stroke="#9fa09f" stroke-width="3.9"/><path d="M374.8 979.4H384.6" stroke="#9fa09f" stroke-width="2.4"/><path d="M377.1 1010.3L376.8 1014.6" stroke="#9fa09f" stroke-width="3.4"/><path d="M376.6 1017.4L376.2 1021.7" stroke="#9fa09f" stroke-width="3.4"/><path d="M480.0 673L508.6 1010" stroke="#9fa09f" stroke-width="1.8"/><path d="M479.5 667.4L479.7 669.8" stroke="#9fa09f" stroke-width="2.1"/><path d="M479.9 671.4L480.1 673.8" stroke="#9fa09f" stroke-width="2.1"/><path d="M480.2 675.8L481.5 690.4" stroke="#9fa09f" stroke-width="2.6"/><path d="M481.7 692.9L481.9 695.5" stroke="#9fa09f" stroke-width="2.2"/><path d="M482.0 697.1L482.3 699.7" stroke="#9fa09f" stroke-width="2.2"/><path d="M482.7 704.7L483.6 715.9" stroke="#9fa09f" stroke-width="2.7"/><path d="M480.0 710.3H486.3" stroke="#9fa09f" stroke-width="1.5"/><path d="M484.1 721.6L484.4 724.3" stroke="#9fa09f" stroke-width="2.3"/><path d="M484.5 726.1L484.7 728.8" stroke="#9fa09f" stroke-width="2.3"/><path d="M485.1 732.8L486.5 749.2" stroke="#9fa09f" stroke-width="2.8"/><path d="M486.9 754.0L487.1 756.9" stroke="#9fa09f" stroke-width="2.4"/><path d="M487.3 758.8L487.5 761.7" stroke="#9fa09f" stroke-width="2.4"/><path d="M488.2 769.4L489.3 782.2" stroke="#9fa09f" stroke-width="3.0"/><path d="M485.1 775.8H492.3" stroke="#9fa09f" stroke-width="1.8"/><path d="M490.0 790.9L490.3 794.1" stroke="#9fa09f" stroke-width="2.5"/><path d="M490.4 796.0L490.7 799.2" stroke="#9fa09f" stroke-width="2.5"/><path d="M491.3 806.3L492.9 825.1" stroke="#9fa09f" stroke-width="3.2"/><path d="M493.6 833.4L493.9 836.8" stroke="#9fa09f" stroke-width="2.7"/><path d="M494.1 838.9L494.4 842.3" stroke="#9fa09f" stroke-width="2.7"/><path d="M495.4 854.4L496.6 869.1" stroke="#9fa09f" stroke-width="3.4"/><path d="M491.9 861.7H500.2" stroke="#9fa09f" stroke-width="2.0"/><path d="M497.8 882.8L498.1 886.4" stroke="#9fa09f" stroke-width="2.9"/><path d="M498.3 888.7L498.6 892.4" stroke="#9fa09f" stroke-width="2.9"/><path d="M499.6 904.6L501.5 926.6" stroke="#9fa09f" stroke-width="3.6"/><path d="M502.7 940.9L503.1 944.9" stroke="#9fa09f" stroke-width="3.1"/><path d="M503.3 947.4L503.6 951.3" stroke="#9fa09f" stroke-width="3.1"/><path d="M505.3 970.7L506.7 988.2" stroke="#9fa09f" stroke-width="3.9"/><path d="M501.1 979.4H510.9" stroke="#9fa09f" stroke-width="2.4"/><path d="M508.6 1010.3L509.0 1014.6" stroke="#9fa09f" stroke-width="3.4"/><path d="M509.2 1017.4L509.6 1021.7" stroke="#9fa09f" stroke-width="3.4"/><path d="M555.0 673L640.0 1010" stroke="#9fa09f" stroke-width="1.8"/><path d="M553.6 667.4L554.2 669.8" stroke="#9fa09f" stroke-width="2.1"/><path d="M554.6 671.4L555.2 673.8" stroke="#9fa09f" stroke-width="2.1"/><path d="M555.7 675.8L559.4 690.4" stroke="#9fa09f" stroke-width="2.6"/><path d="M560.0 692.9L560.7 695.5" stroke="#9fa09f" stroke-width="2.2"/><path d="M561.1 697.1L561.7 699.7" stroke="#9fa09f" stroke-width="2.2"/><path d="M563.0 704.7L565.8 715.9" stroke="#9fa09f" stroke-width="2.7"/><path d="M561.2 710.3H567.6" stroke="#9fa09f" stroke-width="1.5"/><path d="M567.2 721.6L567.9 724.3" stroke="#9fa09f" stroke-width="2.3"/><path d="M568.4 726.1L569.1 728.8" stroke="#9fa09f" stroke-width="2.3"/><path d="M570.1 732.8L574.2 749.2" stroke="#9fa09f" stroke-width="2.8"/><path d="M575.4 754.0L576.2 756.9" stroke="#9fa09f" stroke-width="2.4"/><path d="M576.6 758.8L577.4 761.7" stroke="#9fa09f" stroke-width="2.4"/><path d="M579.3 769.4L582.5 782.2" stroke="#9fa09f" stroke-width="3.0"/><path d="M577.3 775.8H584.5" stroke="#9fa09f" stroke-width="1.8"/><path d="M584.7 790.9L585.5 794.1" stroke="#9fa09f" stroke-width="2.5"/><path d="M586.0 796.0L586.8 799.2" stroke="#9fa09f" stroke-width="2.5"/><path d="M588.6 806.3L593.4 825.1" stroke="#9fa09f" stroke-width="3.2"/><path d="M595.5 833.4L596.3 836.8" stroke="#9fa09f" stroke-width="2.7"/><path d="M596.8 838.9L597.7 842.3" stroke="#9fa09f" stroke-width="2.7"/><path d="M600.7 854.4L604.5 869.1" stroke="#9fa09f" stroke-width="3.4"/><path d="M598.5 861.7H606.8" stroke="#9fa09f" stroke-width="2.0"/><path d="M607.9 882.8L608.8 886.4" stroke="#9fa09f" stroke-width="2.9"/><path d="M609.4 888.7L610.3 892.4" stroke="#9fa09f" stroke-width="2.9"/><path d="M613.4 904.6L619.0 926.6" stroke="#9fa09f" stroke-width="3.6"/><path d="M622.6 940.9L623.6 944.9" stroke="#9fa09f" stroke-width="3.1"/><path d="M624.2 947.4L625.2 951.3" stroke="#9fa09f" stroke-width="3.1"/><path d="M630.1 970.7L634.5 988.2" stroke="#9fa09f" stroke-width="3.9"/><path d="M627.4 979.4H637.2" stroke="#9fa09f" stroke-width="2.4"/><path d="M640.1 1010.3L641.2 1014.6" stroke="#9fa09f" stroke-width="3.4"/><path d="M641.9 1017.4L643.0 1021.7" stroke="#9fa09f" stroke-width="3.4"/><path d="M630.0 673L771.4 1010" stroke="#9fa09f" stroke-width="1.8"/><path d="M627.6 667.4L628.7 669.8" stroke="#9fa09f" stroke-width="2.1"/><path d="M629.3 671.4L630.3 673.8" stroke="#9fa09f" stroke-width="2.1"/><path d="M631.2 675.8L637.3 690.4" stroke="#9fa09f" stroke-width="2.6"/><path d="M638.3 692.9L639.4 695.5" stroke="#9fa09f" stroke-width="2.2"/><path d="M640.1 697.1L641.2 699.7" stroke="#9fa09f" stroke-width="2.2"/><path d="M643.3 704.7L648.0 715.9" stroke="#9fa09f" stroke-width="2.7"/><path d="M642.5 710.3H648.8" stroke="#9fa09f" stroke-width="1.5"/><path d="M650.4 721.6L651.5 724.3" stroke="#9fa09f" stroke-width="2.3"/><path d="M652.3 726.1L653.4 728.8" stroke="#9fa09f" stroke-width="2.3"/><path d="M655.1 732.8L662.0 749.2" stroke="#9fa09f" stroke-width="2.8"/><path d="M664.0 754.0L665.2 756.9" stroke="#9fa09f" stroke-width="2.4"/><path d="M666.0 758.8L667.2 761.7" stroke="#9fa09f" stroke-width="2.4"/><path d="M670.5 769.4L675.8 782.2" stroke="#9fa09f" stroke-width="3.0"/><path d="M669.6 775.8H676.7" stroke="#9fa09f" stroke-width="1.8"/><path d="M679.5 790.9L680.8 794.1" stroke="#9fa09f" stroke-width="2.5"/><path d="M681.6 796.0L682.9 799.2" stroke="#9fa09f" stroke-width="2.5"/><path d="M685.9 806.3L693.8 825.1" stroke="#9fa09f" stroke-width="3.2"/><path d="M697.3 833.4L698.7 836.8" stroke="#9fa09f" stroke-width="2.7"/><path d="M699.6 838.9L701.0 842.3" stroke="#9fa09f" stroke-width="2.7"/><path d="M706.1 854.4L712.3 869.1" stroke="#9fa09f" stroke-width="3.4"/><path d="M705.1 861.7H713.4" stroke="#9fa09f" stroke-width="2.0"/><path d="M718.0 882.8L719.6 886.4" stroke="#9fa09f" stroke-width="2.9"/><path d="M720.5 888.7L722.1 892.4" stroke="#9fa09f" stroke-width="2.9"/><path d="M727.2 904.6L736.4 926.6" stroke="#9fa09f" stroke-width="3.6"/><path d="M742.4 940.9L744.1 944.9" stroke="#9fa09f" stroke-width="3.1"/><path d="M745.1 947.4L746.8 951.3" stroke="#9fa09f" stroke-width="3.1"/><path d="M754.9 970.7L762.3 988.2" stroke="#9fa09f" stroke-width="3.9"/><path d="M753.7 979.4H763.5" stroke="#9fa09f" stroke-width="2.4"/><path d="M771.5 1010.3L773.4 1014.6" stroke="#9fa09f" stroke-width="3.4"/><path d="M774.5 1017.4L776.3 1021.7" stroke="#9fa09f" stroke-width="3.4"/><path d="M705.0 673L902.8 1010" stroke="#9fa09f" stroke-width="1.8"/><path d="M701.7 667.4L703.1 669.8" stroke="#9fa09f" stroke-width="2.1"/><path d="M704.0 671.4L705.5 673.8" stroke="#9fa09f" stroke-width="2.1"/><path d="M706.6 675.8L715.2 690.4" stroke="#9fa09f" stroke-width="2.6"/><path d="M716.7 692.9L718.2 695.5" stroke="#9fa09f" stroke-width="2.2"/><path d="M719.2 697.1L720.7 699.7" stroke="#9fa09f" stroke-width="2.2"/><path d="M723.6 704.7L730.2 715.9" stroke="#9fa09f" stroke-width="2.7"/><path d="M723.7 710.3H730.1" stroke="#9fa09f" stroke-width="1.5"/><path d="M733.5 721.6L735.1 724.3" stroke="#9fa09f" stroke-width="2.3"/><path d="M736.1 726.1L737.8 728.8" stroke="#9fa09f" stroke-width="2.3"/><path d="M740.1 732.8L749.7 749.2" stroke="#9fa09f" stroke-width="2.8"/><path d="M752.5 754.0L754.3 756.9" stroke="#9fa09f" stroke-width="2.4"/><path d="M755.3 758.8L757.1 761.7" stroke="#9fa09f" stroke-width="2.4"/><path d="M761.6 769.4L769.1 782.2" stroke="#9fa09f" stroke-width="3.0"/><path d="M761.8 775.8H768.9" stroke="#9fa09f" stroke-width="1.8"/><path d="M774.2 790.9L776.1 794.1" stroke="#9fa09f" stroke-width="2.5"/><path d="M777.2 796.0L779.1 799.2" stroke="#9fa09f" stroke-width="2.5"/><path d="M783.2 806.3L794.3 825.1" stroke="#9fa09f" stroke-width="3.2"/><path d="M799.2 833.4L801.1 836.8" stroke="#9fa09f" stroke-width="2.7"/><path d="M802.4 838.9L804.4 842.3" stroke="#9fa09f" stroke-width="2.7"/><path d="M811.5 854.4L820.1 869.1" stroke="#9fa09f" stroke-width="3.4"/><path d="M811.6 861.7H820.0" stroke="#9fa09f" stroke-width="2.0"/><path d="M828.2 882.8L830.3 886.4" stroke="#9fa09f" stroke-width="2.9"/><path d="M831.6 888.7L833.8 892.4" stroke="#9fa09f" stroke-width="2.9"/><path d="M841.0 904.6L853.9 926.6" stroke="#9fa09f" stroke-width="3.6"/><path d="M862.3 940.9L864.6 944.9" stroke="#9fa09f" stroke-width="3.1"/><path d="M866.1 947.4L868.4 951.3" stroke="#9fa09f" stroke-width="3.1"/><path d="M879.8 970.7L890.0 988.2" stroke="#9fa09f" stroke-width="3.9"/><path d="M880.0 979.4H889.8" stroke="#9fa09f" stroke-width="2.4"/><path d="M903.0 1010.3L905.5 1014.6" stroke="#9fa09f" stroke-width="3.4"/><path d="M907.2 1017.4L909.7 1021.7" stroke="#9fa09f" stroke-width="3.4"/><path d="M100 683.1H700" stroke="#9fa09f" stroke-width="1.8"/><path d="M90.1 683.1H104.7" stroke="#9fa09f" stroke-width="2.6"/><text x="100.7" y="681.0" font-family="Liberation Mono,monospace" font-size="4.1" fill="#bdbebd" font-style="italic">1METER</text><path d="M113.3 683.1H115.8M117.4 683.1H119.9" stroke="#9fa09f" stroke-width="2.1"/><path d="M130.4 683.1H141.1" stroke="#9fa09f" stroke-width="2.6"/><path d="M135.8 680.1V686.1" stroke="#9fa09f" stroke-width="1.5"/><path d="M151.6 683.1H154.1M155.7 683.1H158.2" stroke="#9fa09f" stroke-width="2.1"/><path d="M166.8 683.1H181.4" stroke="#9fa09f" stroke-width="2.6"/><text x="177.4" y="681.0" font-family="Liberation Mono,monospace" font-size="4.1" fill="#bdbebd" font-style="italic">1METER</text><path d="M190.0 683.1H192.5M194.1 683.1H196.6" stroke="#9fa09f" stroke-width="2.1"/><path d="M207.1 683.1H217.8" stroke="#9fa09f" stroke-width="2.6"/><path d="M212.4 680.1V686.1" stroke="#9fa09f" stroke-width="1.5"/><path d="M228.3 683.1H230.8M232.4 683.1H234.9" stroke="#9fa09f" stroke-width="2.1"/><path d="M243.5 683.1H258.1" stroke="#9fa09f" stroke-width="2.6"/><text x="254.1" y="681.0" font-family="Liberation Mono,monospace" font-size="4.1" fill="#bdbebd" font-style="italic">1METER</text><path d="M266.6 683.1H269.2M270.8 683.1H273.3" stroke="#9fa09f" stroke-width="2.1"/><path d="M283.8 683.1H294.4" stroke="#9fa09f" stroke-width="2.6"/><path d="M289.1 680.1V686.1" stroke="#9fa09f" stroke-width="1.5"/><path d="M305.0 683.1H307.5M309.1 683.1H311.6" stroke="#9fa09f" stroke-width="2.1"/><path d="M320.2 683.1H334.8" stroke="#9fa09f" stroke-width="2.6"/><text x="330.8" y="681.0" font-family="Liberation Mono,monospace" font-size="4.1" fill="#bdbebd" font-style="italic">1METER</text><path d="M343.3 683.1H345.9M347.4 683.1H350.0" stroke="#9fa09f" stroke-width="2.1"/><path d="M360.5 683.1H371.1" stroke="#9fa09f" stroke-width="2.6"/><path d="M365.8 680.1V686.1" stroke="#9fa09f" stroke-width="1.5"/><path d="M381.7 683.1H384.2M385.8 683.1H388.3" stroke="#9fa09f" stroke-width="2.1"/><path d="M396.9 683.1H411.5" stroke="#9fa09f" stroke-width="2.6"/><text x="407.5" y="681.0" font-family="Liberation Mono,monospace" font-size="4.1" fill="#bdbebd" font-style="italic">1METER</text><path d="M420.0 683.1H422.5M424.1 683.1H426.7" stroke="#9fa09f" stroke-width="2.1"/><path d="M437.2 683.1H447.8" stroke="#9fa09f" stroke-width="2.6"/><path d="M442.5 680.1V686.1" stroke="#9fa09f" stroke-width="1.5"/><path d="M458.4 683.1H460.9M462.5 683.1H465.0" stroke="#9fa09f" stroke-width="2.1"/><path d="M473.6 683.1H488.2" stroke="#9fa09f" stroke-width="2.6"/><text x="484.2" y="681.0" font-family="Liberation Mono,monospace" font-size="4.1" fill="#bdbebd" font-style="italic">1METER</text><path d="M496.7 683.1H499.2M500.8 683.1H503.3" stroke="#9fa09f" stroke-width="2.1"/><path d="M513.9 683.1H524.5" stroke="#9fa09f" stroke-width="2.6"/><path d="M519.2 680.1V686.1" stroke="#9fa09f" stroke-width="1.5"/><path d="M535.1 683.1H537.6M539.2 683.1H541.7" stroke="#9fa09f" stroke-width="2.1"/><path d="M550.2 683.1H564.8" stroke="#9fa09f" stroke-width="2.6"/><text x="560.9" y="681.0" font-family="Liberation Mono,monospace" font-size="4.1" fill="#bdbebd" font-style="italic">1METER</text><path d="M573.4 683.1H575.9M577.5 683.1H580.0" stroke="#9fa09f" stroke-width="2.1"/><path d="M590.6 683.1H601.2" stroke="#9fa09f" stroke-width="2.6"/><path d="M595.9 680.1V686.1" stroke="#9fa09f" stroke-width="1.5"/><path d="M611.7 683.1H614.3M615.9 683.1H618.4" stroke="#9fa09f" stroke-width="2.1"/><path d="M626.9 683.1H641.5" stroke="#9fa09f" stroke-width="2.6"/><text x="637.6" y="681.0" font-family="Liberation Mono,monospace" font-size="4.1" fill="#bdbebd" font-style="italic">1METER</text><path d="M650.1 683.1H652.6M654.2 683.1H656.7" stroke="#9fa09f" stroke-width="2.1"/><path d="M667.3 683.1H677.9" stroke="#9fa09f" stroke-width="2.6"/><path d="M672.6 680.1V686.1" stroke="#9fa09f" stroke-width="1.5"/><path d="M688.4 683.1H691.0M692.5 683.1H695.1" stroke="#9fa09f" stroke-width="2.1"/><path d="M100 741.0H700" stroke="#9fa09f" stroke-width="1.8"/><path d="M91.1 741.0H103.0" stroke="#9fa09f" stroke-width="2.8"/><path d="M97.0 737.6V744.4" stroke="#9fa09f" stroke-width="1.6"/><path d="M114.9 741.0H117.7M119.5 741.0H122.4" stroke="#9fa09f" stroke-width="2.3"/><path d="M132.0 741.0H148.5" stroke="#9fa09f" stroke-width="2.8"/><text x="144.0" y="738.6" font-family="Liberation Mono,monospace" font-size="4.6" fill="#bdbebd" font-style="italic">1METER</text><path d="M158.1 741.0H160.9M162.7 741.0H165.6" stroke="#9fa09f" stroke-width="2.3"/><path d="M177.4 741.0H189.4" stroke="#9fa09f" stroke-width="2.8"/><path d="M183.4 737.6V744.4" stroke="#9fa09f" stroke-width="1.6"/><path d="M201.3 741.0H204.1M205.9 741.0H208.8" stroke="#9fa09f" stroke-width="2.3"/><path d="M218.4 741.0H234.8" stroke="#9fa09f" stroke-width="2.8"/><text x="230.4" y="738.6" font-family="Liberation Mono,monospace" font-size="4.6" fill="#bdbebd" font-style="italic">1METER</text><path d="M244.5 741.0H247.3M249.1 741.0H252.0" stroke="#9fa09f" stroke-width="2.3"/><path d="M263.8 741.0H275.8" stroke="#9fa09f" stroke-width="2.8"/><path d="M269.8 737.6V744.4" stroke="#9fa09f" stroke-width="1.6"/><path d="M287.7 741.0H290.5M292.3 741.0H295.1" stroke="#9fa09f" stroke-width="2.3"/><path d="M304.8 741.0H321.2" stroke="#9fa09f" stroke-width="2.8"/><text x="316.7" y="738.6" font-family="Liberation Mono,monospace" font-size="4.6" fill="#bdbebd" font-style="italic">1METER</text><path d="M330.9 741.0H333.7M335.5 741.0H338.3" stroke="#9fa09f" stroke-width="2.3"/><path d="M350.2 741.0H362.2" stroke="#9fa09f" stroke-width="2.8"/><path d="M356.2 737.6V744.4" stroke="#9fa09f" stroke-width="1.6"/><path d="M374.0 741.0H376.9M378.7 741.0H381.5" stroke="#9fa09f" stroke-width="2.3"/><path d="M391.2 741.0H407.6" stroke="#9fa09f" stroke-width="2.8"/><text x="403.1" y="738.6" font-family="Liberation Mono,monospace" font-size="4.6" fill="#bdbebd" font-style="italic">1METER</text><path d="M417.2 741.0H420.1M421.9 741.0H424.7" stroke="#9fa09f" stroke-width="2.3"/><path d="M436.6 741.0H448.6" stroke="#9fa09f" stroke-width="2.8"/><path d="M442.6 737.6V744.4" stroke="#9fa09f" stroke-width="1.6"/><path d="M460.4 741.0H463.3M465.1 741.0H467.9" stroke="#9fa09f" stroke-width="2.3"/><path d="M477.5 741.0H494.0" stroke="#9fa09f" stroke-width="2.8"/><text x="489.5" y="738.6" font-family="Liberation Mono,monospace" font-size="4.6" fill="#bdbebd" font-style="italic">1METER</text><path d="M503.6 741.0H506.5M508.3 741.0H511.1" stroke="#9fa09f" stroke-width="2.3"/><path d="M523.0 741.0H534.9" stroke="#9fa09f" stroke-width="2.8"/><path d="M529.0 737.6V744.4" stroke="#9fa09f" stroke-width="1.6"/><path d="M546.8 741.0H549.7M551.5 741.0H554.3" stroke="#9fa09f" stroke-width="2.3"/><path d="M563.9 741.0H580.4" stroke="#9fa09f" stroke-width="2.8"/><text x="575.9" y="738.6" font-family="Liberation Mono,monospace" font-size="4.6" fill="#bdbebd" font-style="italic">1METER</text><path d="M590.0 741.0H592.8M594.6 741.0H597.5" stroke="#9fa09f" stroke-width="2.3"/><path d="M609.4 741.0H621.3" stroke="#9fa09f" stroke-width="2.8"/><path d="M615.3 737.6V744.4" stroke="#9fa09f" stroke-width="1.6"/><path d="M633.2 741.0H636.0M637.8 741.0H640.7" stroke="#9fa09f" stroke-width="2.3"/><path d="M650.3 741.0H666.8" stroke="#9fa09f" stroke-width="2.8"/><text x="662.3" y="738.6" font-family="Liberation Mono,monospace" font-size="4.6" fill="#bdbebd" font-style="italic">1METER</text><path d="M676.4 741.0H679.2M681.0 741.0H683.9" stroke="#9fa09f" stroke-width="2.3"/><path d="M100 815.7H700" stroke="#9fa09f" stroke-width="1.8"/><path d="M87.1 815.7H106.0" stroke="#9fa09f" stroke-width="3.2"/><text x="100.8" y="812.9" font-family="Liberation Mono,monospace" font-size="5.3" fill="#bdbebd" font-style="italic">1METER</text><path d="M117.0 815.7H120.3M122.3 815.7H125.6" stroke="#9fa09f" stroke-width="2.6"/><path d="M139.2 815.7H152.9" stroke="#9fa09f" stroke-width="3.2"/><path d="M146.0 811.8V819.5" stroke="#9fa09f" stroke-width="1.9"/><path d="M166.4 815.7H169.7M171.8 815.7H175.0" stroke="#9fa09f" stroke-width="2.6"/><path d="M186.0 815.7H204.9" stroke="#9fa09f" stroke-width="3.2"/><text x="199.7" y="812.9" font-family="Liberation Mono,monospace" font-size="5.3" fill="#bdbebd" font-style="italic">1METER</text><path d="M215.9 815.7H219.1M221.2 815.7H224.5" stroke="#9fa09f" stroke-width="2.6"/><path d="M238.0 815.7H251.7" stroke="#9fa09f" stroke-width="3.2"/><path d="M244.9 811.8V819.5" stroke="#9fa09f" stroke-width="1.9"/><path d="M265.3 815.7H268.6M270.6 815.7H273.9" stroke="#9fa09f" stroke-width="2.6"/><path d="M284.9 815.7H303.7" stroke="#9fa09f" stroke-width="3.2"/><text x="298.6" y="812.9" font-family="Liberation Mono,monospace" font-size="5.3" fill="#bdbebd" font-style="italic">1METER</text><path d="M314.8 815.7H318.0M320.1 815.7H323.3" stroke="#9fa09f" stroke-width="2.6"/><path d="M336.9 815.7H350.6" stroke="#9fa09f" stroke-width="3.2"/><path d="M343.8 811.8V819.5" stroke="#9fa09f" stroke-width="1.9"/><path d="M364.2 815.7H367.5M369.5 815.7H372.8" stroke="#9fa09f" stroke-width="2.6"/><path d="M383.8 815.7H402.6" stroke="#9fa09f" stroke-width="3.2"/><text x="397.5" y="812.9" font-family="Liberation Mono,monospace" font-size="5.3" fill="#bdbebd" font-style="italic">1METER</text><path d="M413.7 815.7H416.9M419.0 815.7H422.2" stroke="#9fa09f" stroke-width="2.6"/><path d="M435.8 815.7H449.5" stroke="#9fa09f" stroke-width="3.2"/><path d="M442.7 811.8V819.5" stroke="#9fa09f" stroke-width="1.9"/><path d="M463.1 815.7H466.4M468.4 815.7H471.7" stroke="#9fa09f" stroke-width="2.6"/><path d="M482.7 815.7H501.5" stroke="#9fa09f" stroke-width="3.2"/><text x="496.4" y="812.9" font-family="Liberation Mono,monospace" font-size="5.3" fill="#bdbebd" font-style="italic">1METER</text><path d="M512.5 815.7H515.8M517.8 815.7H521.1" stroke="#9fa09f" stroke-width="2.6"/><path d="M534.7 815.7H548.4" stroke="#9fa09f" stroke-width="3.2"/><path d="M541.5 811.8V819.5" stroke="#9fa09f" stroke-width="1.9"/><path d="M562.0 815.7H565.2M567.3 815.7H570.5" stroke="#9fa09f" stroke-width="2.6"/><path d="M581.6 815.7H600.4" stroke="#9fa09f" stroke-width="3.2"/><text x="595.3" y="812.9" font-family="Liberation Mono,monospace" font-size="5.3" fill="#bdbebd" font-style="italic">1METER</text><path d="M611.4 815.7H614.7M616.7 815.7H620.0" stroke="#9fa09f" stroke-width="2.6"/><path d="M633.6 815.7H647.3" stroke="#9fa09f" stroke-width="3.2"/><path d="M640.4 811.8V819.5" stroke="#9fa09f" stroke-width="1.9"/><path d="M660.9 815.7H664.1M666.2 815.7H669.4" stroke="#9fa09f" stroke-width="2.6"/><path d="M680.5 815.7H699.3" stroke="#9fa09f" stroke-width="3.2"/><text x="694.1" y="812.9" font-family="Liberation Mono,monospace" font-size="5.3" fill="#bdbebd" font-style="italic">1METER</text><path d="M100 915.6H700" stroke="#9fa09f" stroke-width="1.8"/><path d="M87.9 915.6H103.9" stroke="#9fa09f" stroke-width="3.6"/><path d="M95.9 911.1V920.1" stroke="#9fa09f" stroke-width="2.2"/><path d="M119.8 915.6H123.6M126.0 915.6H129.8" stroke="#9fa09f" stroke-width="3.0"/><path d="M142.7 915.6H164.7" stroke="#9fa09f" stroke-width="3.6"/><text x="158.7" y="912.4" font-family="Liberation Mono,monospace" font-size="6.2" fill="#bdbebd" font-style="italic">1METER</text><path d="M177.6 915.6H181.4M183.8 915.6H187.6" stroke="#9fa09f" stroke-width="3.0"/><path d="M203.5 915.6H219.5" stroke="#9fa09f" stroke-width="3.6"/><path d="M211.5 911.1V920.1" stroke="#9fa09f" stroke-width="2.2"/><path d="M235.4 915.6H239.2M241.6 915.6H245.4" stroke="#9fa09f" stroke-width="3.0"/><path d="M258.3 915.6H280.4" stroke="#9fa09f" stroke-width="3.6"/><text x="274.4" y="912.4" font-family="Liberation Mono,monospace" font-size="6.2" fill="#bdbebd" font-style="italic">1METER</text><path d="M293.2 915.6H297.1M299.5 915.6H303.3" stroke="#9fa09f" stroke-width="3.0"/><path d="M319.1 915.6H335.2" stroke="#9fa09f" stroke-width="3.6"/><path d="M327.2 911.1V920.1" stroke="#9fa09f" stroke-width="2.2"/><path d="M351.1 915.6H354.9M357.3 915.6H361.1" stroke="#9fa09f" stroke-width="3.0"/><path d="M374.0 915.6H396.0" stroke="#9fa09f" stroke-width="3.6"/><text x="390.0" y="912.4" font-family="Liberation Mono,monospace" font-size="6.2" fill="#bdbebd" font-style="italic">1METER</text><path d="M408.9 915.6H412.7M415.1 915.6H418.9" stroke="#9fa09f" stroke-width="3.0"/><path d="M434.8 915.6H450.8" stroke="#9fa09f" stroke-width="3.6"/><path d="M442.8 911.1V920.1" stroke="#9fa09f" stroke-width="2.2"/><path d="M466.7 915.6H470.5M472.9 915.6H476.7" stroke="#9fa09f" stroke-width="3.0"/><path d="M489.6 915.6H511.6" stroke="#9fa09f" stroke-width="3.6"/><text x="505.6" y="912.4" font-family="Liberation Mono,monospace" font-size="6.2" fill="#bdbebd" font-style="italic">1METER</text><path d="M524.5 915.6H528.3M530.7 915.6H534.5" stroke="#9fa09f" stroke-width="3.0"/><path d="M550.4 915.6H566.4" stroke="#9fa09f" stroke-width="3.6"/><path d="M558.4 911.1V920.1" stroke="#9fa09f" stroke-width="2.2"/><path d="M582.3 915.6H586.1M588.5 915.6H592.3" stroke="#9fa09f" stroke-width="3.0"/><path d="M605.2 915.6H627.2" stroke="#9fa09f" stroke-width="3.6"/><text x="621.2" y="912.4" font-family="Liberation Mono,monospace" font-size="6.2" fill="#bdbebd" font-style="italic">1METER</text><path d="M640.1 915.6H643.9M646.3 915.6H650.1" stroke="#9fa09f" stroke-width="3.0"/><path d="M666.0 915.6H682.0" stroke="#9fa09f" stroke-width="3.6"/><path d="M674.0 911.1V920.1" stroke="#9fa09f" stroke-width="2.2"/></g></g><path d="M547 673H570L660 1010H635.5L614 973Z" fill="#6984b1" filter="url(#bl)"/><g clip-path="url(#cps)" opacity=".85"><g filter="url(#bl3)"><path d="M-82.5 673L-477.0 1010" stroke="#6a84af" stroke-width="1"/><path d="M-7.5 673L-345.6 1010" stroke="#6a84af" stroke-width="1"/><path d="M67.5 673L-214.2 1010" stroke="#6a84af" stroke-width="1"/><path d="M142.5 673L-82.8 1010" stroke="#6a84af" stroke-width="1"/><path d="M217.5 673L48.6 1010" stroke="#6a84af" stroke-width="1"/><path d="M292.5 673L180.0 1010" stroke="#6a84af" stroke-width="1"/><path d="M367.5 673L311.5 1010" stroke="#6a84af" stroke-width="1"/><path d="M442.5 673L442.9 1010" stroke="#6a84af" stroke-width="1"/><path d="M517.5 673L574.3 1010" stroke="#6a84af" stroke-width="1"/><path d="M592.5 673L705.7 1010" stroke="#6a84af" stroke-width="1"/><path d="M667.5 673L837.1 1010" stroke="#6a84af" stroke-width="1"/><path d="M742.5 673L968.5 1010" stroke="#6a84af" stroke-width="1"/><path d="M817.5 673L1100.0 1010" stroke="#6a84af" stroke-width="1"/><path d="M892.5 673L1231.4 1010" stroke="#6a84af" stroke-width="1"/><path d="M967.5 673L1362.8 1010" stroke="#6a84af" stroke-width="1"/><path d="M1042.5 673L1494.2 1010" stroke="#6a84af" stroke-width="1"/><path d="M1117.5 673L1625.6 1010" stroke="#6a84af" stroke-width="1"/><path d="M100 710.3H700" stroke="#6a84af" stroke-width="1"/><path d="M100 775.8H700" stroke="#6a84af" stroke-width="1"/><path d="M100 861.7H700" stroke="#6a84af" stroke-width="1"/><path d="M100 979.4H700" stroke="#6a84af" stroke-width="1"/><path d="M105.0 673L-148.5 1010" stroke="#52688f" stroke-width="1.8"/><path d="M109.2 667.4L107.4 669.8" stroke="#52688f" stroke-width="2.1"/><path d="M106.2 671.4L104.4 673.8" stroke="#52688f" stroke-width="2.1"/><path d="M102.9 675.8L91.9 690.4" stroke="#52688f" stroke-width="2.6"/><path d="M90.0 692.9L88.1 695.5" stroke="#52688f" stroke-width="2.2"/><path d="M86.8 697.1L84.9 699.7" stroke="#52688f" stroke-width="2.2"/><path d="M81.2 704.7L72.7 715.9" stroke="#52688f" stroke-width="2.7"/><path d="M73.8 710.3H80.1" stroke="#52688f" stroke-width="1.5"/><path d="M68.5 721.6L66.4 724.3" stroke="#52688f" stroke-width="2.3"/><path d="M65.1 726.1L63.0 728.8" stroke="#52688f" stroke-width="2.3"/><path d="M60.0 732.8L47.7 749.2" stroke="#52688f" stroke-width="2.8"/><path d="M44.1 754.0L41.9 756.9" stroke="#52688f" stroke-width="2.4"/><path d="M40.5 758.8L38.3 761.7" stroke="#52688f" stroke-width="2.4"/><path d="M32.5 769.4L22.9 782.2" stroke="#52688f" stroke-width="3.0"/><path d="M24.1 775.8H31.3" stroke="#52688f" stroke-width="1.8"/><path d="M16.3 790.9L13.9 794.1" stroke="#52688f" stroke-width="2.5"/><path d="M12.4 796.0L10.1 799.2" stroke="#52688f" stroke-width="2.5"/><path d="M4.8 806.3L-9.4 825.1" stroke="#52688f" stroke-width="3.2"/><path d="M-15.7 833.4L-18.2 836.8" stroke="#52688f" stroke-width="2.7"/><path d="M-19.8 838.9L-22.3 842.3" stroke="#52688f" stroke-width="2.7"/><path d="M-31.4 854.4L-42.5 869.1" stroke="#52688f" stroke-width="3.4"/><path d="M-41.1 861.7H-32.8" stroke="#52688f" stroke-width="2.0"/><path d="M-52.8 882.8L-55.5 886.4" stroke="#52688f" stroke-width="2.9"/><path d="M-57.3 888.7L-60.0 892.4" stroke="#52688f" stroke-width="2.9"/><path d="M-69.2 904.6L-85.8 926.6" stroke="#52688f" stroke-width="3.6"/><path d="M-96.5 940.9L-99.5 944.9" stroke="#52688f" stroke-width="3.1"/><path d="M-101.4 947.4L-104.4 951.3" stroke="#52688f" stroke-width="3.1"/><path d="M-118.9 970.7L-132.1 988.2" stroke="#52688f" stroke-width="3.9"/><path d="M-130.4 979.4H-120.6" stroke="#52688f" stroke-width="2.4"/><path d="M-148.7 1010.3L-152.0 1014.6" stroke="#52688f" stroke-width="3.4"/><path d="M-154.0 1017.4L-157.3 1021.7" stroke="#52688f" stroke-width="3.4"/><path d="M180.0 673L-17.1 1010" stroke="#52688f" stroke-width="1.8"/><path d="M183.3 667.4L181.9 669.8" stroke="#52688f" stroke-width="2.1"/><path d="M181.0 671.4L179.5 673.8" stroke="#52688f" stroke-width="2.1"/><path d="M178.4 675.8L169.8 690.4" stroke="#52688f" stroke-width="2.6"/><path d="M168.4 692.9L166.8 695.5" stroke="#52688f" stroke-width="2.2"/><path d="M165.9 697.1L164.4 699.7" stroke="#52688f" stroke-width="2.2"/><path d="M161.5 704.7L154.9 715.9" stroke="#52688f" stroke-width="2.7"/><path d="M155.0 710.3H161.3" stroke="#52688f" stroke-width="1.5"/><path d="M151.6 721.6L150.0 724.3" stroke="#52688f" stroke-width="2.3"/><path d="M149.0 726.1L147.4 728.8" stroke="#52688f" stroke-width="2.3"/><path d="M145.0 732.8L135.4 749.2" stroke="#52688f" stroke-width="2.8"/><path d="M132.6 754.0L130.9 756.9" stroke="#52688f" stroke-width="2.4"/><path d="M129.8 758.8L128.1 761.7" stroke="#52688f" stroke-width="2.4"/><path d="M123.6 769.4L116.1 782.2" stroke="#52688f" stroke-width="3.0"/><path d="M116.3 775.8H123.5" stroke="#52688f" stroke-width="1.8"/><path d="M111.0 790.9L109.2 794.1" stroke="#52688f" stroke-width="2.5"/><path d="M108.0 796.0L106.2 799.2" stroke="#52688f" stroke-width="2.5"/><path d="M102.1 806.3L91.1 825.1" stroke="#52688f" stroke-width="3.2"/><path d="M86.2 833.4L84.2 836.8" stroke="#52688f" stroke-width="2.7"/><path d="M83.0 838.9L81.0 842.3" stroke="#52688f" stroke-width="2.7"/><path d="M73.9 854.4L65.3 869.1" stroke="#52688f" stroke-width="3.4"/><path d="M65.5 861.7H73.8" stroke="#52688f" stroke-width="2.0"/><path d="M57.3 882.8L55.2 886.4" stroke="#52688f" stroke-width="2.9"/><path d="M53.8 888.7L51.7 892.4" stroke="#52688f" stroke-width="2.9"/><path d="M44.6 904.6L31.7 926.6" stroke="#52688f" stroke-width="3.6"/><path d="M23.3 940.9L21.0 944.9" stroke="#52688f" stroke-width="3.1"/><path d="M19.5 947.4L17.2 951.3" stroke="#52688f" stroke-width="3.1"/><path d="M5.9 970.7L-4.3 988.2" stroke="#52688f" stroke-width="3.9"/><path d="M-4.1 979.4H5.7" stroke="#52688f" stroke-width="2.4"/><path d="M-17.2 1010.3L-19.8 1014.6" stroke="#52688f" stroke-width="3.4"/><path d="M-21.4 1017.4L-23.9 1021.7" stroke="#52688f" stroke-width="3.4"/><path d="M255.0 673L114.3 1010" stroke="#52688f" stroke-width="1.8"/><path d="M257.4 667.4L256.3 669.8" stroke="#52688f" stroke-width="2.1"/><path d="M255.7 671.4L254.7 673.8" stroke="#52688f" stroke-width="2.1"/><path d="M253.8 675.8L247.7 690.4" stroke="#52688f" stroke-width="2.6"/><path d="M246.7 692.9L245.6 695.5" stroke="#52688f" stroke-width="2.2"/><path d="M244.9 697.1L243.8 699.7" stroke="#52688f" stroke-width="2.2"/><path d="M241.8 704.7L237.1 715.9" stroke="#52688f" stroke-width="2.7"/><path d="M236.3 710.3H242.6" stroke="#52688f" stroke-width="1.5"/><path d="M234.7 721.6L233.6 724.3" stroke="#52688f" stroke-width="2.3"/><path d="M232.9 726.1L231.7 728.8" stroke="#52688f" stroke-width="2.3"/><path d="M230.1 732.8L223.2 749.2" stroke="#52688f" stroke-width="2.8"/><path d="M221.2 754.0L220.0 756.9" stroke="#52688f" stroke-width="2.4"/><path d="M219.2 758.8L218.0 761.7" stroke="#52688f" stroke-width="2.4"/><path d="M214.8 769.4L209.4 782.2" stroke="#52688f" stroke-width="3.0"/><path d="M208.5 775.8H215.7" stroke="#52688f" stroke-width="1.8"/><path d="M205.8 790.9L204.5 794.1" stroke="#52688f" stroke-width="2.5"/><path d="M203.6 796.0L202.3 799.2" stroke="#52688f" stroke-width="2.5"/><path d="M199.4 806.3L191.5 825.1" stroke="#52688f" stroke-width="3.2"/><path d="M188.0 833.4L186.6 836.8" stroke="#52688f" stroke-width="2.7"/><path d="M185.7 838.9L184.3 842.3" stroke="#52688f" stroke-width="2.7"/><path d="M179.3 854.4L173.1 869.1" stroke="#52688f" stroke-width="3.4"/><path d="M172.1 861.7H180.4" stroke="#52688f" stroke-width="2.0"/><path d="M167.4 882.8L165.9 886.4" stroke="#52688f" stroke-width="2.9"/><path d="M165.0 888.7L163.4 892.4" stroke="#52688f" stroke-width="2.9"/><path d="M158.3 904.6L149.1 926.6" stroke="#52688f" stroke-width="3.6"/><path d="M143.2 940.9L141.5 944.9" stroke="#52688f" stroke-width="3.1"/><path d="M140.5 947.4L138.8 951.3" stroke="#52688f" stroke-width="3.1"/><path d="M130.7 970.7L123.4 988.2" stroke="#52688f" stroke-width="3.9"/><path d="M122.2 979.4H132.0" stroke="#52688f" stroke-width="2.4"/><path d="M114.2 1010.3L112.4 1014.6" stroke="#52688f" stroke-width="3.4"/><path d="M111.3 1017.4L109.4 1021.7" stroke="#52688f" stroke-width="3.4"/><path d="M330.0 673L245.8 1010" stroke="#52688f" stroke-width="1.8"/><path d="M331.4 667.4L330.8 669.8" stroke="#52688f" stroke-width="2.1"/><path d="M330.4 671.4L329.8 673.8" stroke="#52688f" stroke-width="2.1"/><path d="M329.3 675.8L325.7 690.4" stroke="#52688f" stroke-width="2.6"/><path d="M325.0 692.9L324.4 695.5" stroke="#52688f" stroke-width="2.2"/><path d="M324.0 697.1L323.3 699.7" stroke="#52688f" stroke-width="2.2"/><path d="M322.1 704.7L319.3 715.9" stroke="#52688f" stroke-width="2.7"/><path d="M317.5 710.3H323.8" stroke="#52688f" stroke-width="1.5"/><path d="M317.9 721.6L317.2 724.3" stroke="#52688f" stroke-width="2.3"/><path d="M316.7 726.1L316.0 728.8" stroke="#52688f" stroke-width="2.3"/><path d="M315.1 732.8L310.9 749.2" stroke="#52688f" stroke-width="2.8"/><path d="M309.8 754.0L309.0 756.9" stroke="#52688f" stroke-width="2.4"/><path d="M308.6 758.8L307.8 761.7" stroke="#52688f" stroke-width="2.4"/><path d="M305.9 769.4L302.7 782.2" stroke="#52688f" stroke-width="3.0"/><path d="M300.7 775.8H307.9" stroke="#52688f" stroke-width="1.8"/><path d="M300.5 790.9L299.7 794.1" stroke="#52688f" stroke-width="2.5"/><path d="M299.2 796.0L298.5 799.2" stroke="#52688f" stroke-width="2.5"/><path d="M296.7 806.3L292.0 825.1" stroke="#52688f" stroke-width="3.2"/><path d="M289.9 833.4L289.1 836.8" stroke="#52688f" stroke-width="2.7"/><path d="M288.5 838.9L287.7 842.3" stroke="#52688f" stroke-width="2.7"/><path d="M284.7 854.4L281.0 869.1" stroke="#52688f" stroke-width="3.4"/><path d="M278.7 861.7H287.0" stroke="#52688f" stroke-width="2.0"/><path d="M277.6 882.8L276.6 886.4" stroke="#52688f" stroke-width="2.9"/><path d="M276.1 888.7L275.2 892.4" stroke="#52688f" stroke-width="2.9"/><path d="M272.1 904.6L266.6 926.6" stroke="#52688f" stroke-width="3.6"/><path d="M263.0 940.9L262.0 944.9" stroke="#52688f" stroke-width="3.1"/><path d="M261.4 947.4L260.4 951.3" stroke="#52688f" stroke-width="3.1"/><path d="M255.6 970.7L251.2 988.2" stroke="#52688f" stroke-width="3.9"/><path d="M248.5 979.4H258.3" stroke="#52688f" stroke-width="2.4"/><path d="M245.7 1010.3L244.6 1014.6" stroke="#52688f" stroke-width="3.4"/><path d="M243.9 1017.4L242.8 1021.7" stroke="#52688f" stroke-width="3.4"/><path d="M405.0 673L377.2 1010" stroke="#52688f" stroke-width="1.8"/><path d="M405.5 667.4L405.3 669.8" stroke="#52688f" stroke-width="2.1"/><path d="M405.1 671.4L404.9 673.8" stroke="#52688f" stroke-width="2.1"/><path d="M404.8 675.8L403.6 690.4" stroke="#52688f" stroke-width="2.6"/><path d="M403.4 692.9L403.1 695.5" stroke="#52688f" stroke-width="2.2"/><path d="M403.0 697.1L402.8 699.7" stroke="#52688f" stroke-width="2.2"/><path d="M402.4 704.7L401.5 715.9" stroke="#52688f" stroke-width="2.7"/><path d="M398.8 710.3H405.1" stroke="#52688f" stroke-width="1.5"/><path d="M401.0 721.6L400.8 724.3" stroke="#52688f" stroke-width="2.3"/><path d="M400.6 726.1L400.4 728.8" stroke="#52688f" stroke-width="2.3"/><path d="M400.1 732.8L398.7 749.2" stroke="#52688f" stroke-width="2.8"/><path d="M398.3 754.0L398.1 756.9" stroke="#52688f" stroke-width="2.4"/><path d="M397.9 758.8L397.7 761.7" stroke="#52688f" stroke-width="2.4"/><path d="M397.0 769.4L396.0 782.2" stroke="#52688f" stroke-width="3.0"/><path d="M392.9 775.8H400.1" stroke="#52688f" stroke-width="1.8"/><path d="M395.3 790.9L395.0 794.1" stroke="#52688f" stroke-width="2.5"/><path d="M394.8 796.0L394.6 799.2" stroke="#52688f" stroke-width="2.5"/><path d="M394.0 806.3L392.4 825.1" stroke="#52688f" stroke-width="3.2"/><path d="M391.8 833.4L391.5 836.8" stroke="#52688f" stroke-width="2.7"/><path d="M391.3 838.9L391.0 842.3" stroke="#52688f" stroke-width="2.7"/><path d="M390.0 854.4L388.8 869.1" stroke="#52688f" stroke-width="3.4"/><path d="M385.3 861.7H393.6" stroke="#52688f" stroke-width="2.0"/><path d="M387.7 882.8L387.4 886.4" stroke="#52688f" stroke-width="2.9"/><path d="M387.2 888.7L386.9 892.4" stroke="#52688f" stroke-width="2.9"/><path d="M385.9 904.6L384.1 926.6" stroke="#52688f" stroke-width="3.6"/><path d="M382.9 940.9L382.5 944.9" stroke="#52688f" stroke-width="3.1"/><path d="M382.3 947.4L382.0 951.3" stroke="#52688f" stroke-width="3.1"/><path d="M380.4 970.7L379.0 988.2" stroke="#52688f" stroke-width="3.9"/><path d="M374.8 979.4H384.6" stroke="#52688f" stroke-width="2.4"/><path d="M377.1 1010.3L376.8 1014.6" stroke="#52688f" stroke-width="3.4"/><path d="M376.6 1017.4L376.2 1021.7" stroke="#52688f" stroke-width="3.4"/><path d="M480.0 673L508.6 1010" stroke="#52688f" stroke-width="1.8"/><path d="M479.5 667.4L479.7 669.8" stroke="#52688f" stroke-width="2.1"/><path d="M479.9 671.4L480.1 673.8" stroke="#52688f" stroke-width="2.1"/><path d="M480.2 675.8L481.5 690.4" stroke="#52688f" stroke-width="2.6"/><path d="M481.7 692.9L481.9 695.5" stroke="#52688f" stroke-width="2.2"/><path d="M482.0 697.1L482.3 699.7" stroke="#52688f" stroke-width="2.2"/><path d="M482.7 704.7L483.6 715.9" stroke="#52688f" stroke-width="2.7"/><path d="M480.0 710.3H486.3" stroke="#52688f" stroke-width="1.5"/><path d="M484.1 721.6L484.4 724.3" stroke="#52688f" stroke-width="2.3"/><path d="M484.5 726.1L484.7 728.8" stroke="#52688f" stroke-width="2.3"/><path d="M485.1 732.8L486.5 749.2" stroke="#52688f" stroke-width="2.8"/><path d="M486.9 754.0L487.1 756.9" stroke="#52688f" stroke-width="2.4"/><path d="M487.3 758.8L487.5 761.7" stroke="#52688f" stroke-width="2.4"/><path d="M488.2 769.4L489.3 782.2" stroke="#52688f" stroke-width="3.0"/><path d="M485.1 775.8H492.3" stroke="#52688f" stroke-width="1.8"/><path d="M490.0 790.9L490.3 794.1" stroke="#52688f" stroke-width="2.5"/><path d="M490.4 796.0L490.7 799.2" stroke="#52688f" stroke-width="2.5"/><path d="M491.3 806.3L492.9 825.1" stroke="#52688f" stroke-width="3.2"/><path d="M493.6 833.4L493.9 836.8" stroke="#52688f" stroke-width="2.7"/><path d="M494.1 838.9L494.4 842.3" stroke="#52688f" stroke-width="2.7"/><path d="M495.4 854.4L496.6 869.1" stroke="#52688f" stroke-width="3.4"/><path d="M491.9 861.7H500.2" stroke="#52688f" stroke-width="2.0"/><path d="M497.8 882.8L498.1 886.4" stroke="#52688f" stroke-width="2.9"/><path d="M498.3 888.7L498.6 892.4" stroke="#52688f" stroke-width="2.9"/><path d="M499.6 904.6L501.5 926.6" stroke="#52688f" stroke-width="3.6"/><path d="M502.7 940.9L503.1 944.9" stroke="#52688f" stroke-width="3.1"/><path d="M503.3 947.4L503.6 951.3" stroke="#52688f" stroke-width="3.1"/><path d="M505.3 970.7L506.7 988.2" stroke="#52688f" stroke-width="3.9"/><path d="M501.1 979.4H510.9" stroke="#52688f" stroke-width="2.4"/><path d="M508.6 1010.3L509.0 1014.6" stroke="#52688f" stroke-width="3.4"/><path d="M509.2 1017.4L509.6 1021.7" stroke="#52688f" stroke-width="3.4"/><path d="M555.0 673L640.0 1010" stroke="#52688f" stroke-width="1.8"/><path d="M553.6 667.4L554.2 669.8" stroke="#52688f" stroke-width="2.1"/><path d="M554.6 671.4L555.2 673.8" stroke="#52688f" stroke-width="2.1"/><path d="M555.7 675.8L559.4 690.4" stroke="#52688f" stroke-width="2.6"/><path d="M560.0 692.9L560.7 695.5" stroke="#52688f" stroke-width="2.2"/><path d="M561.1 697.1L561.7 699.7" stroke="#52688f" stroke-width="2.2"/><path d="M563.0 704.7L565.8 715.9" stroke="#52688f" stroke-width="2.7"/><path d="M561.2 710.3H567.6" stroke="#52688f" stroke-width="1.5"/><path d="M567.2 721.6L567.9 724.3" stroke="#52688f" stroke-width="2.3"/><path d="M568.4 726.1L569.1 728.8" stroke="#52688f" stroke-width="2.3"/><path d="M570.1 732.8L574.2 749.2" stroke="#52688f" stroke-width="2.8"/><path d="M575.4 754.0L576.2 756.9" stroke="#52688f" stroke-width="2.4"/><path d="M576.6 758.8L577.4 761.7" stroke="#52688f" stroke-width="2.4"/><path d="M579.3 769.4L582.5 782.2" stroke="#52688f" stroke-width="3.0"/><path d="M577.3 775.8H584.5" stroke="#52688f" stroke-width="1.8"/><path d="M584.7 790.9L585.5 794.1" stroke="#52688f" stroke-width="2.5"/><path d="M586.0 796.0L586.8 799.2" stroke="#52688f" stroke-width="2.5"/><path d="M588.6 806.3L593.4 825.1" stroke="#52688f" stroke-width="3.2"/><path d="M595.5 833.4L596.3 836.8" stroke="#52688f" stroke-width="2.7"/><path d="M596.8 838.9L597.7 842.3" stroke="#52688f" stroke-width="2.7"/><path d="M600.7 854.4L604.5 869.1" stroke="#52688f" stroke-width="3.4"/><path d="M598.5 861.7H606.8" stroke="#52688f" stroke-width="2.0"/><path d="M607.9 882.8L608.8 886.4" stroke="#52688f" stroke-width="2.9"/><path d="M609.4 888.7L610.3 892.4" stroke="#52688f" stroke-width="2.9"/><path d="M613.4 904.6L619.0 926.6" stroke="#52688f" stroke-width="3.6"/><path d="M622.6 940.9L623.6 944.9" stroke="#52688f" stroke-width="3.1"/><path d="M624.2 947.4L625.2 951.3" stroke="#52688f" stroke-width="3.1"/><path d="M630.1 970.7L634.5 988.2" stroke="#52688f" stroke-width="3.9"/><path d="M627.4 979.4H637.2" stroke="#52688f" stroke-width="2.4"/><path d="M640.1 1010.3L641.2 1014.6" stroke="#52688f" stroke-width="3.4"/><path d="M641.9 1017.4L643.0 1021.7" stroke="#52688f" stroke-width="3.4"/><path d="M630.0 673L771.4 1010" stroke="#52688f" stroke-width="1.8"/><path d="M627.6 667.4L628.7 669.8" stroke="#52688f" stroke-width="2.1"/><path d="M629.3 671.4L630.3 673.8" stroke="#52688f" stroke-width="2.1"/><path d="M631.2 675.8L637.3 690.4" stroke="#52688f" stroke-width="2.6"/><path d="M638.3 692.9L639.4 695.5" stroke="#52688f" stroke-width="2.2"/><path d="M640.1 697.1L641.2 699.7" stroke="#52688f" stroke-width="2.2"/><path d="M643.3 704.7L648.0 715.9" stroke="#52688f" stroke-width="2.7"/><path d="M642.5 710.3H648.8" stroke="#52688f" stroke-width="1.5"/><path d="M650.4 721.6L651.5 724.3" stroke="#52688f" stroke-width="2.3"/><path d="M652.3 726.1L653.4 728.8" stroke="#52688f" stroke-width="2.3"/><path d="M655.1 732.8L662.0 749.2" stroke="#52688f" stroke-width="2.8"/><path d="M664.0 754.0L665.2 756.9" stroke="#52688f" stroke-width="2.4"/><path d="M666.0 758.8L667.2 761.7" stroke="#52688f" stroke-width="2.4"/><path d="M670.5 769.4L675.8 782.2" stroke="#52688f" stroke-width="3.0"/><path d="M669.6 775.8H676.7" stroke="#52688f" stroke-width="1.8"/><path d="M679.5 790.9L680.8 794.1" stroke="#52688f" stroke-width="2.5"/><path d="M681.6 796.0L682.9 799.2" stroke="#52688f" stroke-width="2.5"/><path d="M685.9 806.3L693.8 825.1" stroke="#52688f" stroke-width="3.2"/><path d="M697.3 833.4L698.7 836.8" stroke="#52688f" stroke-width="2.7"/><path d="M699.6 838.9L701.0 842.3" stroke="#52688f" stroke-width="2.7"/><path d="M706.1 854.4L712.3 869.1" stroke="#52688f" stroke-width="3.4"/><path d="M705.1 861.7H713.4" stroke="#52688f" stroke-width="2.0"/><path d="M718.0 882.8L719.6 886.4" stroke="#52688f" stroke-width="2.9"/><path d="M720.5 888.7L722.1 892.4" stroke="#52688f" stroke-width="2.9"/><path d="M727.2 904.6L736.4 926.6" stroke="#52688f" stroke-width="3.6"/><path d="M742.4 940.9L744.1 944.9" stroke="#52688f" stroke-width="3.1"/><path d="M745.1 947.4L746.8 951.3" stroke="#52688f" stroke-width="3.1"/><path d="M754.9 970.7L762.3 988.2" stroke="#52688f" stroke-width="3.9"/><path d="M753.7 979.4H763.5" stroke="#52688f" stroke-width="2.4"/><path d="M771.5 1010.3L773.4 1014.6" stroke="#52688f" stroke-width="3.4"/><path d="M774.5 1017.4L776.3 1021.7" stroke="#52688f" stroke-width="3.4"/><path d="M705.0 673L902.8 1010" stroke="#52688f" stroke-width="1.8"/><path d="M701.7 667.4L703.1 669.8" stroke="#52688f" stroke-width="2.1"/><path d="M704.0 671.4L705.5 673.8" stroke="#52688f" stroke-width="2.1"/><path d="M706.6 675.8L715.2 690.4" stroke="#52688f" stroke-width="2.6"/><path d="M716.7 692.9L718.2 695.5" stroke="#52688f" stroke-width="2.2"/><path d="M719.2 697.1L720.7 699.7" stroke="#52688f" stroke-width="2.2"/><path d="M723.6 704.7L730.2 715.9" stroke="#52688f" stroke-width="2.7"/><path d="M723.7 710.3H730.1" stroke="#52688f" stroke-width="1.5"/><path d="M733.5 721.6L735.1 724.3" stroke="#52688f" stroke-width="2.3"/><path d="M736.1 726.1L737.8 728.8" stroke="#52688f" stroke-width="2.3"/><path d="M740.1 732.8L749.7 749.2" stroke="#52688f" stroke-width="2.8"/><path d="M752.5 754.0L754.3 756.9" stroke="#52688f" stroke-width="2.4"/><path d="M755.3 758.8L757.1 761.7" stroke="#52688f" stroke-width="2.4"/><path d="M761.6 769.4L769.1 782.2" stroke="#52688f" stroke-width="3.0"/><path d="M761.8 775.8H768.9" stroke="#52688f" stroke-width="1.8"/><path d="M774.2 790.9L776.1 794.1" stroke="#52688f" stroke-width="2.5"/><path d="M777.2 796.0L779.1 799.2" stroke="#52688f" stroke-width="2.5"/><path d="M783.2 806.3L794.3 825.1" stroke="#52688f" stroke-width="3.2"/><path d="M799.2 833.4L801.1 836.8" stroke="#52688f" stroke-width="2.7"/><path d="M802.4 838.9L804.4 842.3" stroke="#52688f" stroke-width="2.7"/><path d="M811.5 854.4L820.1 869.1" stroke="#52688f" stroke-width="3.4"/><path d="M811.6 861.7H820.0" stroke="#52688f" stroke-width="2.0"/><path d="M828.2 882.8L830.3 886.4" stroke="#52688f" stroke-width="2.9"/><path d="M831.6 888.7L833.8 892.4" stroke="#52688f" stroke-width="2.9"/><path d="M841.0 904.6L853.9 926.6" stroke="#52688f" stroke-width="3.6"/><path d="M862.3 940.9L864.6 944.9" stroke="#52688f" stroke-width="3.1"/><path d="M866.1 947.4L868.4 951.3" stroke="#52688f" stroke-width="3.1"/><path d="M879.8 970.7L890.0 988.2" stroke="#52688f" stroke-width="3.9"/><path d="M880.0 979.4H889.8" stroke="#52688f" stroke-width="2.4"/><path d="M903.0 1010.3L905.5 1014.6" stroke="#52688f" stroke-width="3.4"/><path d="M907.2 1017.4L909.7 1021.7" stroke="#52688f" stroke-width="3.4"/><path d="M100 683.1H700" stroke="#52688f" stroke-width="1.8"/><path d="M90.1 683.1H104.7" stroke="#52688f" stroke-width="2.6"/><text x="100.7" y="681.0" font-family="Liberation Mono,monospace" font-size="4.1" fill="#5d769f" font-style="italic">1METER</text><path d="M113.3 683.1H115.8M117.4 683.1H119.9" stroke="#52688f" stroke-width="2.1"/><path d="M130.4 683.1H141.1" stroke="#52688f" stroke-width="2.6"/><path d="M135.8 680.1V686.1" stroke="#52688f" stroke-width="1.5"/><path d="M151.6 683.1H154.1M155.7 683.1H158.2" stroke="#52688f" stroke-width="2.1"/><path d="M166.8 683.1H181.4" stroke="#52688f" stroke-width="2.6"/><text x="177.4" y="681.0" font-family="Liberation Mono,monospace" font-size="4.1" fill="#5d769f" font-style="italic">1METER</text><path d="M190.0 683.1H192.5M194.1 683.1H196.6" stroke="#52688f" stroke-width="2.1"/><path d="M207.1 683.1H217.8" stroke="#52688f" stroke-width="2.6"/><path d="M212.4 680.1V686.1" stroke="#52688f" stroke-width="1.5"/><path d="M228.3 683.1H230.8M232.4 683.1H234.9" stroke="#52688f" stroke-width="2.1"/><path d="M243.5 683.1H258.1" stroke="#52688f" stroke-width="2.6"/><text x="254.1" y="681.0" font-family="Liberation Mono,monospace" font-size="4.1" fill="#5d769f" font-style="italic">1METER</text><path d="M266.6 683.1H269.2M270.8 683.1H273.3" stroke="#52688f" stroke-width="2.1"/><path d="M283.8 683.1H294.4" stroke="#52688f" stroke-width="2.6"/><path d="M289.1 680.1V686.1" stroke="#52688f" stroke-width="1.5"/><path d="M305.0 683.1H307.5M309.1 683.1H311.6" stroke="#52688f" stroke-width="2.1"/><path d="M320.2 683.1H334.8" stroke="#52688f" stroke-width="2.6"/><text x="330.8" y="681.0" font-family="Liberation Mono,monospace" font-size="4.1" fill="#5d769f" font-style="italic">1METER</text><path d="M343.3 683.1H345.9M347.4 683.1H350.0" stroke="#52688f" stroke-width="2.1"/><path d="M360.5 683.1H371.1" stroke="#52688f" stroke-width="2.6"/><path d="M365.8 680.1V686.1" stroke="#52688f" stroke-width="1.5"/><path d="M381.7 683.1H384.2M385.8 683.1H388.3" stroke="#52688f" stroke-width="2.1"/><path d="M396.9 683.1H411.5" stroke="#52688f" stroke-width="2.6"/><text x="407.5" y="681.0" font-family="Liberation Mono,monospace" font-size="4.1" fill="#5d769f" font-style="italic">1METER</text><path d="M420.0 683.1H422.5M424.1 683.1H426.7" stroke="#52688f" stroke-width="2.1"/><path d="M437.2 683.1H447.8" stroke="#52688f" stroke-width="2.6"/><path d="M442.5 680.1V686.1" stroke="#52688f" stroke-width="1.5"/><path d="M458.4 683.1H460.9M462.5 683.1H465.0" stroke="#52688f" stroke-width="2.1"/><path d="M473.6 683.1H488.2" stroke="#52688f" stroke-width="2.6"/><text x="484.2" y="681.0" font-family="Liberation Mono,monospace" font-size="4.1" fill="#5d769f" font-style="italic">1METER</text><path d="M496.7 683.1H499.2M500.8 683.1H503.3" stroke="#52688f" stroke-width="2.1"/><path d="M513.9 683.1H524.5" stroke="#52688f" stroke-width="2.6"/><path d="M519.2 680.1V686.1" stroke="#52688f" stroke-width="1.5"/><path d="M535.1 683.1H537.6M539.2 683.1H541.7" stroke="#52688f" stroke-width="2.1"/><path d="M550.2 683.1H564.8" stroke="#52688f" stroke-width="2.6"/><text x="560.9" y="681.0" font-family="Liberation Mono,monospace" font-size="4.1" fill="#5d769f" font-style="italic">1METER</text><path d="M573.4 683.1H575.9M577.5 683.1H580.0" stroke="#52688f" stroke-width="2.1"/><path d="M590.6 683.1H601.2" stroke="#52688f" stroke-width="2.6"/><path d="M595.9 680.1V686.1" stroke="#52688f" stroke-width="1.5"/><path d="M611.7 683.1H614.3M615.9 683.1H618.4" stroke="#52688f" stroke-width="2.1"/><path d="M626.9 683.1H641.5" stroke="#52688f" stroke-width="2.6"/><text x="637.6" y="681.0" font-family="Liberation Mono,monospace" font-size="4.1" fill="#5d769f" font-style="italic">1METER</text><path d="M650.1 683.1H652.6M654.2 683.1H656.7" stroke="#52688f" stroke-width="2.1"/><path d="M667.3 683.1H677.9" stroke="#52688f" stroke-width="2.6"/><path d="M672.6 680.1V686.1" stroke="#52688f" stroke-width="1.5"/><path d="M688.4 683.1H691.0M692.5 683.1H695.1" stroke="#52688f" stroke-width="2.1"/><path d="M100 741.0H700" stroke="#52688f" stroke-width="1.8"/><path d="M91.1 741.0H103.0" stroke="#52688f" stroke-width="2.8"/><path d="M97.0 737.6V744.4" stroke="#52688f" stroke-width="1.6"/><path d="M114.9 741.0H117.7M119.5 741.0H122.4" stroke="#52688f" stroke-width="2.3"/><path d="M132.0 741.0H148.5" stroke="#52688f" stroke-width="2.8"/><text x="144.0" y="738.6" font-family="Liberation Mono,monospace" font-size="4.6" fill="#5d769f" font-style="italic">1METER</text><path d="M158.1 741.0H160.9M162.7 741.0H165.6" stroke="#52688f" stroke-width="2.3"/><path d="M177.4 741.0H189.4" stroke="#52688f" stroke-width="2.8"/><path d="M183.4 737.6V744.4" stroke="#52688f" stroke-width="1.6"/><path d="M201.3 741.0H204.1M205.9 741.0H208.8" stroke="#52688f" stroke-width="2.3"/><path d="M218.4 741.0H234.8" stroke="#52688f" stroke-width="2.8"/><text x="230.4" y="738.6" font-family="Liberation Mono,monospace" font-size="4.6" fill="#5d769f" font-style="italic">1METER</text><path d="M244.5 741.0H247.3M249.1 741.0H252.0" stroke="#52688f" stroke-width="2.3"/><path d="M263.8 741.0H275.8" stroke="#52688f" stroke-width="2.8"/><path d="M269.8 737.6V744.4" stroke="#52688f" stroke-width="1.6"/><path d="M287.7 741.0H290.5M292.3 741.0H295.1" stroke="#52688f" stroke-width="2.3"/><path d="M304.8 741.0H321.2" stroke="#52688f" stroke-width="2.8"/><text x="316.7" y="738.6" font-family="Liberation Mono,monospace" font-size="4.6" fill="#5d769f" font-style="italic">1METER</text><path d="M330.9 741.0H333.7M335.5 741.0H338.3" stroke="#52688f" stroke-width="2.3"/><path d="M350.2 741.0H362.2" stroke="#52688f" stroke-width="2.8"/><path d="M356.2 737.6V744.4" stroke="#52688f" stroke-width="1.6"/><path d="M374.0 741.0H376.9M378.7 741.0H381.5" stroke="#52688f" stroke-width="2.3"/><path d="M391.2 741.0H407.6" stroke="#52688f" stroke-width="2.8"/><text x="403.1" y="738.6" font-family="Liberation Mono,monospace" font-size="4.6" fill="#5d769f" font-style="italic">1METER</text><path d="M417.2 741.0H420.1M421.9 741.0H424.7" stroke="#52688f" stroke-width="2.3"/><path d="M436.6 741.0H448.6" stroke="#52688f" stroke-width="2.8"/><path d="M442.6 737.6V744.4" stroke="#52688f" stroke-width="1.6"/><path d="M460.4 741.0H463.3M465.1 741.0H467.9" stroke="#52688f" stroke-width="2.3"/><path d="M477.5 741.0H494.0" stroke="#52688f" stroke-width="2.8"/><text x="489.5" y="738.6" font-family="Liberation Mono,monospace" font-size="4.6" fill="#5d769f" font-style="italic">1METER</text><path d="M503.6 741.0H506.5M508.3 741.0H511.1" stroke="#52688f" stroke-width="2.3"/><path d="M523.0 741.0H534.9" stroke="#52688f" stroke-width="2.8"/><path d="M529.0 737.6V744.4" stroke="#52688f" stroke-width="1.6"/><path d="M546.8 741.0H549.7M551.5 741.0H554.3" stroke="#52688f" stroke-width="2.3"/><path d="M563.9 741.0H580.4" stroke="#52688f" stroke-width="2.8"/><text x="575.9" y="738.6" font-family="Liberation Mono,monospace" font-size="4.6" fill="#5d769f" font-style="italic">1METER</text><path d="M590.0 741.0H592.8M594.6 741.0H597.5" stroke="#52688f" stroke-width="2.3"/><path d="M609.4 741.0H621.3" stroke="#52688f" stroke-width="2.8"/><path d="M615.3 737.6V744.4" stroke="#52688f" stroke-width="1.6"/><path d="M633.2 741.0H636.0M637.8 741.0H640.7" stroke="#52688f" stroke-width="2.3"/><path d="M650.3 741.0H666.8" stroke="#52688f" stroke-width="2.8"/><text x="662.3" y="738.6" font-family="Liberation Mono,monospace" font-size="4.6" fill="#5d769f" font-style="italic">1METER</text><path d="M676.4 741.0H679.2M681.0 741.0H683.9" stroke="#52688f" stroke-width="2.3"/><path d="M100 815.7H700" stroke="#52688f" stroke-width="1.8"/><path d="M87.1 815.7H106.0" stroke="#52688f" stroke-width="3.2"/><text x="100.8" y="812.9" font-family="Liberation Mono,monospace" font-size="5.3" fill="#5d769f" font-style="italic">1METER</text><path d="M117.0 815.7H120.3M122.3 815.7H125.6" stroke="#52688f" stroke-width="2.6"/><path d="M139.2 815.7H152.9" stroke="#52688f" stroke-width="3.2"/><path d="M146.0 811.8V819.5" stroke="#52688f" stroke-width="1.9"/><path d="M166.4 815.7H169.7M171.8 815.7H175.0" stroke="#52688f" stroke-width="2.6"/><path d="M186.0 815.7H204.9" stroke="#52688f" stroke-width="3.2"/><text x="199.7" y="812.9" font-family="Liberation Mono,monospace" font-size="5.3" fill="#5d769f" font-style="italic">1METER</text><path d="M215.9 815.7H219.1M221.2 815.7H224.5" stroke="#52688f" stroke-width="2.6"/><path d="M238.0 815.7H251.7" stroke="#52688f" stroke-width="3.2"/><path d="M244.9 811.8V819.5" stroke="#52688f" stroke-width="1.9"/><path d="M265.3 815.7H268.6M270.6 815.7H273.9" stroke="#52688f" stroke-width="2.6"/><path d="M284.9 815.7H303.7" stroke="#52688f" stroke-width="3.2"/><text x="298.6" y="812.9" font-family="Liberation Mono,monospace" font-size="5.3" fill="#5d769f" font-style="italic">1METER</text><path d="M314.8 815.7H318.0M320.1 815.7H323.3" stroke="#52688f" stroke-width="2.6"/><path d="M336.9 815.7H350.6" stroke="#52688f" stroke-width="3.2"/><path d="M343.8 811.8V819.5" stroke="#52688f" stroke-width="1.9"/><path d="M364.2 815.7H367.5M369.5 815.7H372.8" stroke="#52688f" stroke-width="2.6"/><path d="M383.8 815.7H402.6" stroke="#52688f" stroke-width="3.2"/><text x="397.5" y="812.9" font-family="Liberation Mono,monospace" font-size="5.3" fill="#5d769f" font-style="italic">1METER</text><path d="M413.7 815.7H416.9M419.0 815.7H422.2" stroke="#52688f" stroke-width="2.6"/><path d="M435.8 815.7H449.5" stroke="#52688f" stroke-width="3.2"/><path d="M442.7 811.8V819.5" stroke="#52688f" stroke-width="1.9"/><path d="M463.1 815.7H466.4M468.4 815.7H471.7" stroke="#52688f" stroke-width="2.6"/><path d="M482.7 815.7H501.5" stroke="#52688f" stroke-width="3.2"/><text x="496.4" y="812.9" font-family="Liberation Mono,monospace" font-size="5.3" fill="#5d769f" font-style="italic">1METER</text><path d="M512.5 815.7H515.8M517.8 815.7H521.1" stroke="#52688f" stroke-width="2.6"/><path d="M534.7 815.7H548.4" stroke="#52688f" stroke-width="3.2"/><path d="M541.5 811.8V819.5" stroke="#52688f" stroke-width="1.9"/><path d="M562.0 815.7H565.2M567.3 815.7H570.5" stroke="#52688f" stroke-width="2.6"/><path d="M581.6 815.7H600.4" stroke="#52688f" stroke-width="3.2"/><text x="595.3" y="812.9" font-family="Liberation Mono,monospace" font-size="5.3" fill="#5d769f" font-style="italic">1METER</text><path d="M611.4 815.7H614.7M616.7 815.7H620.0" stroke="#52688f" stroke-width="2.6"/><path d="M633.6 815.7H647.3" stroke="#52688f" stroke-width="3.2"/><path d="M640.4 811.8V819.5" stroke="#52688f" stroke-width="1.9"/><path d="M660.9 815.7H664.1M666.2 815.7H669.4" stroke="#52688f" stroke-width="2.6"/><path d="M680.5 815.7H699.3" stroke="#52688f" stroke-width="3.2"/><text x="694.1" y="812.9" font-family="Liberation Mono,monospace" font-size="5.3" fill="#5d769f" font-style="italic">1METER</text><path d="M100 915.6H700" stroke="#52688f" stroke-width="1.8"/><path d="M87.9 915.6H103.9" stroke="#52688f" stroke-width="3.6"/><path d="M95.9 911.1V920.1" stroke="#52688f" stroke-width="2.2"/><path d="M119.8 915.6H123.6M126.0 915.6H129.8" stroke="#52688f" stroke-width="3.0"/><path d="M142.7 915.6H164.7" stroke="#52688f" stroke-width="3.6"/><text x="158.7" y="912.4" font-family="Liberation Mono,monospace" font-size="6.2" fill="#5d769f" font-style="italic">1METER</text><path d="M177.6 915.6H181.4M183.8 915.6H187.6" stroke="#52688f" stroke-width="3.0"/><path d="M203.5 915.6H219.5" stroke="#52688f" stroke-width="3.6"/><path d="M211.5 911.1V920.1" stroke="#52688f" stroke-width="2.2"/><path d="M235.4 915.6H239.2M241.6 915.6H245.4" stroke="#52688f" stroke-width="3.0"/><path d="M258.3 915.6H280.4" stroke="#52688f" stroke-width="3.6"/><text x="274.4" y="912.4" font-family="Liberation Mono,monospace" font-size="6.2" fill="#5d769f" font-style="italic">1METER</text><path d="M293.2 915.6H297.1M299.5 915.6H303.3" stroke="#52688f" stroke-width="3.0"/><path d="M319.1 915.6H335.2" stroke="#52688f" stroke-width="3.6"/><path d="M327.2 911.1V920.1" stroke="#52688f" stroke-width="2.2"/><path d="M351.1 915.6H354.9M357.3 915.6H361.1" stroke="#52688f" stroke-width="3.0"/><path d="M374.0 915.6H396.0" stroke="#52688f" stroke-width="3.6"/><text x="390.0" y="912.4" font-family="Liberation Mono,monospace" font-size="6.2" fill="#5d769f" font-style="italic">1METER</text><path d="M408.9 915.6H412.7M415.1 915.6H418.9" stroke="#52688f" stroke-width="3.0"/><path d="M434.8 915.6H450.8" stroke="#52688f" stroke-width="3.6"/><path d="M442.8 911.1V920.1" stroke="#52688f" stroke-width="2.2"/><path d="M466.7 915.6H470.5M472.9 915.6H476.7" stroke="#52688f" stroke-width="3.0"/><path d="M489.6 915.6H511.6" stroke="#52688f" stroke-width="3.6"/><text x="505.6" y="912.4" font-family="Liberation Mono,monospace" font-size="6.2" fill="#5d769f" font-style="italic">1METER</text><path d="M524.5 915.6H528.3M530.7 915.6H534.5" stroke="#52688f" stroke-width="3.0"/><path d="M550.4 915.6H566.4" stroke="#52688f" stroke-width="3.6"/><path d="M558.4 911.1V920.1" stroke="#52688f" stroke-width="2.2"/><path d="M582.3 915.6H586.1M588.5 915.6H592.3" stroke="#52688f" stroke-width="3.0"/><path d="M605.2 915.6H627.2" stroke="#52688f" stroke-width="3.6"/><text x="621.2" y="912.4" font-family="Liberation Mono,monospace" font-size="6.2" fill="#5d769f" font-style="italic">1METER</text><path d="M640.1 915.6H643.9M646.3 915.6H650.1" stroke="#52688f" stroke-width="3.0"/><path d="M666.0 915.6H682.0" stroke="#52688f" stroke-width="3.6"/><path d="M674.0 911.1V920.1" stroke="#52688f" stroke-width="2.2"/></g></g><path d="M566.5 673H610.5L737 1010H658Z" fill="#76859c"/><path d="M188.8 673H206.7L29.7 1010H-1.7Z" fill="#aeb3ba" opacity=".75" clip-path="url(#cplw)"/><g clip-path="url(#cpl)" stroke="#9a9c9c" stroke-width="1.1" fill="none" opacity=".48" filter="url(#bl2)"><path d="M0 1036.4H-16.6"/><path d="M0 995.5H6.5"/><path d="M0 958.5H27.4"/><path d="M0 924.8H46.4"/><path d="M0 894.2H63.8"/><path d="M0 866.1H79.7"/><path d="M0 840.2H94.3"/><path d="M0 816.4H107.7"/><path d="M0 794.3H120.2"/><path d="M0 773.9H131.8"/><path d="M0 754.8H142.5"/><path d="M0 737.1H152.6"/><path d="M0 720.4H162.0"/><path d="M0 704.9H170.8"/><path d="M0 690.2H179.0"/><path d="M0 676.5H186.8"/><path d="M0 663.5H194.1"/><path d="M0 651.3H201.1"/><path d="M0 639.7H207.6"/><path d="M0 628.7H213.8"/><path d="M168.1 673L-37.9 1010"/><path d="M147.5 673L-74.1 1010"/><path d="M126.8 673L-110.2 1010"/><path d="M106.2 673L-146.4 1010"/><path d="M85.5 673L-182.6 1010"/><path d="M64.9 673L-218.8 1010"/><path d="M44.3 673L-254.9 1010"/><path d="M23.6 673L-291.1 1010"/></g><g clip-path="url(#cplw)" stroke="#7f848b" stroke-width="1.1" fill="none" opacity=".5" filter="url(#bl2)"><path d="M-16.6 1036.4L110.3 1028.1"/><path d="M6.5 995.5L123.8 995.4"/><path d="M27.4 958.5L136.0 965.8"/><path d="M46.4 924.8L147.1 938.9"/><path d="M63.8 894.2L157.3 914.3"/><path d="M79.7 866.1L166.6 891.9"/><path d="M94.3 840.2L175.1 871.2"/><path d="M107.7 816.4L183.0 852.1"/><path d="M120.2 794.3L190.3 834.5"/><path d="M131.8 773.9L197.0 818.1"/><path d="M142.5 754.8L203.3 802.9"/><path d="M152.6 737.1L209.2 788.6"/><path d="M162.0 720.4L214.7 775.4"/><path d="M170.8 704.9L219.8 762.9"/><path d="M179.0 690.2L224.7 751.2"/><path d="M186.8 676.5L229.2 740.2"/><path d="M194.1 663.5L233.5 729.8"/><path d="M201.1 651.3L237.5 720.0"/><path d="M207.6 639.7L241.4 710.8"/><path d="M213.8 628.7L245.0 702.0"/><path d="M207.9 673L31.8 1010"/><path d="M227.0 673L65.2 1010"/><path d="M246.0 673L98.6 1010"/></g><g clip-path="url(#cprw)" stroke="#526078" stroke-width="1.1" fill="none" opacity=".5" filter="url(#bl2)"><path d="M665.1 1028.1L746.8 1036.4"/><path d="M656.0 995.4L731.4 995.5"/><path d="M647.7 965.8L717.5 958.5"/><path d="M640.3 938.9L704.9 924.8"/><path d="M633.5 914.3L693.4 894.2"/><path d="M627.2 891.9L682.8 866.1"/><path d="M621.5 871.2L673.1 840.2"/><path d="M616.2 852.1L664.2 816.4"/><path d="M611.3 834.5L655.9 794.3"/><path d="M606.7 818.1L648.2 773.9"/><path d="M602.5 802.9L641.0 754.8"/><path d="M598.5 788.6L634.4 737.1"/><path d="M594.9 775.4L628.1 720.4"/><path d="M591.4 762.9L622.3 704.9"/><path d="M588.1 751.2L616.8 690.2"/><path d="M585.1 740.2L611.6 676.5"/><path d="M582.2 729.8L606.7 663.5"/><path d="M579.5 720.0L602.1 651.3"/><path d="M576.9 710.8L597.8 639.7"/><path d="M574.5 702.0L593.7 628.7"/><path d="M577.4 673L679.2 1010"/><path d="M588.4 673L698.5 1010"/><path d="M599.3 673L717.7 1010"/></g><g clip-path="url(#cpr)" stroke="#9c9c9c" stroke-width="1.1" fill="none" opacity=".48" filter="url(#bl2)"><path d="M746.8 1036.4H880"/><path d="M731.4 995.5H880"/><path d="M717.5 958.5H880"/><path d="M704.9 924.8H880"/><path d="M693.4 894.2H880"/><path d="M682.8 866.1H880"/><path d="M673.1 840.2H880"/><path d="M664.2 816.4H880"/><path d="M655.9 794.3H880"/><path d="M648.2 773.9H880"/><path d="M641.0 754.8H880"/><path d="M634.4 737.1H880"/><path d="M628.1 720.4H880"/><path d="M622.3 704.9H880"/><path d="M616.8 690.2H880"/><path d="M611.6 676.5H880"/><path d="M606.7 663.5H880"/><path d="M602.1 651.3H880"/><path d="M597.8 639.7H880"/><path d="M593.7 628.7H880"/><path d="M631.5 673L774.1 1010"/><path d="M652.8 673L811.3 1010"/><path d="M674.0 673L848.5 1010"/><path d="M695.2 673L885.7 1010"/></g><path d="M611 673L737.5 1010" stroke="#fbfbfb" stroke-width="1.8" fill="none"/></svg>
<div style="left:23px;top:703px;width:200px;height:200px;background:rgba(62,62,62,0.40)"></div>
<div style="left:44.2px;top:719.6px;width:157.2px;height:27px;background:#f5f5f5;border-radius:4px;color:#323232;font-size:24px;line-height:27px;text-align:center">Host</div>
<div style="left:44.2px;top:766.6px;width:157.2px;height:27px;background:#f5f5f5;border-radius:4px;color:#323232;font-size:24px;line-height:27px;text-align:center">Client</div>
<div style="left:24.4px;top:822px;width:200px;height:30px;color:#fff;font-size:24px;line-height:30px;text-align:center;letter-spacing:0.05px">Players: 0</div>
<div style="left:879px;top:633px;width:607px;height:19px;background:#282828"></div>
<div style="left:879px;top:633px;width:82px;height:19px;background:#3c3c3c;border-radius:3px 3px 0 0"></div>
<svg class="s" style="left:887px;top:637px;" width="13" height="11" viewBox="0 0 13 11"><path d="M.5 1.2Q.5 .5 1.2 .5H5L6.4 2.2H11.8Q12.5 2.2 12.5 2.9V9.8Q12.5 10.5 11.8 10.5H1.2Q.5 10.5 .5 9.8Z" fill="#c4c4c4"/></svg>
<span class="t" style="left:903.5px;top:636.0px;font-size:12.5px;line-height:16px;height:16px;color:#c4c4c4;letter-spacing:0.07px;">Project</span>
<svg class="s" style="left:1451px;top:636.5px;" width="10" height="11" viewBox="0 0 10 11"><rect x=".7" y="5.2" width="7.8" height="4.6" rx=".8" stroke="#c4c4c4" stroke-width="1.2" fill="none"/><path d="M2.7 5V3.2A2.2 2.2 0 0 1 7 3.2V3.8" stroke="#c4c4c4" stroke-width="1.2" fill="none"/></svg>
<svg class="s" style="left:1471px;top:637.2px;" width="3" height="11" viewBox="0 0 3 11"><rect x=".4" y="0" width="2.2" height="2.2" fill="#d0d0d0"/><rect x=".4" y="3.8" width="2.2" height="2.2" fill="#d0d0d0"/><rect x=".4" y="7.6" width="2.2" height="2.2" fill="#d0d0d0"/></svg>
<div style="left:879px;top:652px;width:607px;height:21px;background:#3c3c3c"></div>
<div style="left:879px;top:672px;width:607px;height:1px;background:#2a2a2a"></div>
<svg class="s" style="left:886px;top:656px;" width="12" height="12" viewBox="0 0 12 12"><path d="M6 .5V11.5M.5 6H11.5" stroke="#d0d0d0" stroke-width="1.7"/></svg>
<svg class="s" style="left:902px;top:660px;" width="8" height="5" viewBox="0 0 8 5"><path d="M.3 .5H7.7L4 4.6Z" fill="#c4c4c4"/></svg>
<div style="left:1020px;top:654px;width:319px;height:16px;background:#282828;border-radius:3px;border:1px solid #1e1e1e"></div>
<svg class="s" style="left:1024px;top:658px;" width="9" height="9" viewBox="0 0 9 9"><circle cx="3.4" cy="3.4" r="2.4" stroke="#c4c4c4" stroke-width="1.1" fill="none"/><path d="M5.2 5.2 7.6 7.8" stroke="#c4c4c4" stroke-width="1.2"/></svg>
<div style="left:1322px;top:655px;width:16px;height:14px;background:#3c3c3c;border-radius:0 2px 2px 0"></div>
<svg class="s" style="left:1323px;top:655px;" width="13" height="13" viewBox="0 0 13 13"><path d="M3.5 5V1.2H11.8V9.5H8" stroke="#c4c4c4" stroke-width="1.1" fill="none"/><rect x="1" y="7.6" width="4.4" height="4.4" stroke="#c4c4c4" stroke-width="1.1" fill="none"/><path d="M5.6 7.4 9.6 3.4M6.6 3.2H9.8V6.4" stroke="#c4c4c4" stroke-width="1.1" fill="none"/></svg>
<div style="left:1340px;top:653px;width:1px;height:19px;background:#303030"></div>
<div style="left:1366px;top:653px;width:1px;height:19px;background:#303030"></div>
<div style="left:1392px;top:653px;width:1px;height:19px;background:#303030"></div>
<div style="left:1418px;top:653px;width:1px;height:19px;background:#303030"></div>
<div style="left:1444px;top:653px;width:1px;height:19px;background:#303030"></div>
<svg class="s" style="left:1346px;top:655px;" width="14" height="14" viewBox="0 0 14 14"><circle cx="4" cy="9.6" r="3.2" fill="#c4c4c4"/><rect x="2.2" y="1" width="5" height="4.4" fill="#c4c4c4"/><path d="M10 3 13.4 9.6H6.6Z" fill="#c4c4c4"/></svg>
<svg class="s" style="left:1372px;top:656px;" width="13" height="13" viewBox="0 0 13 13"><path d="M6.2 1H12V6.8L6.4 12.2 1 6.4Z" fill="#c4c4c4"/><circle cx="9.4" cy="3.6" r="1.1" fill="#3c3c3c"/></svg>
<svg class="s" style="left:1397px;top:655px;" width="14" height="14" viewBox="0 0 14 14"><circle cx="7" cy="7" r="6.6" fill="#d4d4d4"/><rect x="6" y="2.8" width="2" height="5.6" fill="#3c3c3c"/><rect x="6" y="9.4" width="2" height="2" fill="#3c3c3c"/></svg>
<svg class="s" style="left:1424px;top:655px;" width="14" height="14" viewBox="0 0 14 14"><path d="M7 1 8.8 5.2 13.3 5.6 9.9 8.6 10.9 13 7 10.7 3.1 13 4.1 8.6 .7 5.6 5.2 5.2Z" fill="#909090"/></svg>
<svg class="s" style="left:1450px;top:656px;" width="16" height="12" viewBox="0 0 16 12"><path d="M1 6C3 3 5.4 2 8 2S13 3 15 6C13 9 10.6 10 8 10S3 9 1 6Z" stroke="#c4c4c4" stroke-width="1.2" fill="none"/><circle cx="8" cy="6" r="1.8" stroke="#c4c4c4" stroke-width="1.1" fill="none"/><path d="M2.5 11.5 13.5 .5" stroke="#c4c4c4" stroke-width="1.3"/></svg>
<span class="t" style="left:1467px;top:655.0px;font-size:12.5px;line-height:16px;height:16px;color:#c4c4c4;letter-spacing:0.10px;">29</span>
<div style="left:879px;top:673px;width:208px;height:337px;background:#383838"></div>
<div style="left:1087px;top:673px;width:1px;height:337px;background:#232323"></div>
<div style="left:1088px;top:673px;width:398px;height:337px;background:#333333"></div>
<div style="left:1088px;top:673px;width:398px;height:20px;background:#3e3e3e"></div>
<div style="left:1088px;top:989px;width:398px;height:21px;background:#3e3e3e"></div>
<div style="left:1418px;top:999px;width:52px;height:1px;background:#5e5e5e"></div>
<div style="left:1414px;top:995px;width:10px;height:10px;background:#999;border-radius:5px"></div>
<div style="left:879px;top:768px;width:208px;height:16px;background:#4d4d4d"></div>
<svg class="s" style="left:883px;top:677px;" width="9" height="8" viewBox="0 0 9 8"><path d="M.3 .8H8.7L4.5 7.5Z" fill="#8a8a8a"/></svg>
<svg class="s" style="left:897px;top:674px;" width="13" height="13" viewBox="0 0 13 13"><path d="M6.5 .8 8.2 4.8 12.5 5.2 9.3 8 10.2 12.2 6.5 10 2.8 12.2 3.7 8 .5 5.2 4.8 4.8Z" fill="#c4c4c4"/></svg>
<span class="t" style="left:913.6px;top:672.55px;font-size:13px;line-height:16px;height:16px;color:#d0d0d0;-webkit-text-stroke:0.45px currentColor;letter-spacing:0.78px;">Favorites</span>
<svg class="s" style="left:910px;top:690px;" width="13" height="13" viewBox="0 0 13 13"><circle cx="5.3" cy="5.3" r="4.2" stroke="#c4c4c4" stroke-width="1.1" fill="none"/><path d="M8.4 8.4 12.2 12.2" stroke="#c4c4c4" stroke-width="1.3"/></svg>
<span class="t" style="left:927.1px;top:688.72px;font-size:12.5px;line-height:16px;height:16px;color:#c4c4c4;letter-spacing:0.07px;">All Materials</span>
<svg class="s" style="left:910px;top:706px;" width="13" height="13" viewBox="0 0 13 13"><circle cx="5.3" cy="5.3" r="4.2" stroke="#c4c4c4" stroke-width="1.1" fill="none"/><path d="M8.4 8.4 12.2 12.2" stroke="#c4c4c4" stroke-width="1.3"/></svg>
<span class="t" style="left:927.1px;top:704.72px;font-size:12.5px;line-height:16px;height:16px;color:#c4c4c4;letter-spacing:0.08px;">All Models</span>
<svg class="s" style="left:910px;top:722px;" width="13" height="13" viewBox="0 0 13 13"><circle cx="5.3" cy="5.3" r="4.2" stroke="#c4c4c4" stroke-width="1.1" fill="none"/><path d="M8.4 8.4 12.2 12.2" stroke="#c4c4c4" stroke-width="1.3"/></svg>
<span class="t" style="left:927.1px;top:720.72px;font-size:12.5px;line-height:16px;height:16px;color:#c4c4c4;letter-spacing:0.03px;">All Prefabs</span>
<svg class="s" style="left:883px;top:756px;" width="9" height="8" viewBox="0 0 9 8"><path d="M.3 .8H8.7L4.5 7.5Z" fill="#8a8a8a"/></svg>
<svg class="s" style="left:897px;top:754px;" width="14" height="11" viewBox="0 0 14 11"><path d="M.8 10V1.3Q.8 .6 1.5 .6H4.8L6 2H11Q11.6 2 11.6 2.7V3.8" stroke="#c4c4c4" stroke-width="1.1" fill="none"/><path d="M2.6 4.4H13.6L11.6 10.4H.8Z" fill="#c4c4c4"/></svg>
<span class="t" style="left:913.6px;top:751.55px;font-size:13px;line-height:16px;height:16px;color:#d0d0d0;-webkit-text-stroke:0.45px currentColor;letter-spacing:0.80px;">Assets</span>
<svg class="s" style="left:911px;top:770px;" width="13" height="11" viewBox="0 0 13 11"><path d="M.5 1.2Q.5 .5 1.2 .5H4.8L6 2H11.8Q12.5 2 12.5 2.7V9.8Q12.5 10.5 11.8 10.5H1.2Q.5 10.5 .5 9.8Z" fill="#c4c4c4"/></svg>
<span class="t" style="left:927.1px;top:767.72px;font-size:12.5px;line-height:16px;height:16px;color:#c4c4c4;letter-spacing:0.10px;">Materials</span>
<svg class="s" style="left:898px;top:787px;" width="8" height="9" viewBox="0 0 8 9"><path d="M.8 .3V8.7L7.5 4.5Z" fill="#8a8a8a"/></svg>
<svg class="s" style="left:911px;top:786px;" width="13" height="11" viewBox="0 0 13 11"><path d="M.5 1.2Q.5 .5 1.2 .5H4.8L6 2H11.8Q12.5 2 12.5 2.7V9.8Q12.5 10.5 11.8 10.5H1.2Q.5 10.5 .5 9.8Z" fill="#c4c4c4"/></svg>
<span class="t" style="left:927.1px;top:783.72px;font-size:12.5px;line-height:16px;height:16px;color:#c4c4c4;letter-spacing:-0.05px;">Plugins</span>
<svg class="s" style="left:911px;top:802px;" width="13" height="11" viewBox="0 0 13 11"><path d="M.5 1.2Q.5 .5 1.2 .5H4.8L6 2H11.8Q12.5 2 12.5 2.7V9.8Q12.5 10.5 11.8 10.5H1.2Q.5 10.5 .5 9.8Z" fill="#c4c4c4"/></svg>
<span class="t" style="left:927.1px;top:799.72px;font-size:12.5px;line-height:16px;height:16px;color:#c4c4c4;letter-spacing:0.11px;">Prefab</span>
<svg class="s" style="left:898px;top:819px;" width="8" height="9" viewBox="0 0 8 9"><path d="M.8 .3V8.7L7.5 4.5Z" fill="#8a8a8a"/></svg>
<svg class="s" style="left:911px;top:818px;" width="13" height="11" viewBox="0 0 13 11"><path d="M.5 1.2Q.5 .5 1.2 .5H4.8L6 2H11.8Q12.5 2 12.5 2.7V9.8Q12.5 10.5 11.8 10.5H1.2Q.5 10.5 .5 9.8Z" fill="#c4c4c4"/></svg>
<span class="t" style="left:927.1px;top:815.72px;font-size:12.5px;line-height:16px;height:16px;color:#c4c4c4;letter-spacing:-0.12px;">Samples</span>
<svg class="s" style="left:911px;top:834px;" width="13" height="11" viewBox="0 0 13 11"><path d="M.5 1.2Q.5 .5 1.2 .5H4.8L6 2H11.8Q12.5 2 12.5 2.7V9.8Q12.5 10.5 11.8 10.5H1.2Q.5 10.5 .5 9.8Z" fill="#c4c4c4"/></svg>
<span class="t" style="left:927.1px;top:831.72px;font-size:12.5px;line-height:16px;height:16px;color:#c4c4c4;letter-spacing:-0.08px;">Scenes</span>
<svg class="s" style="left:911px;top:850px;" width="13" height="11" viewBox="0 0 13 11"><path d="M.5 1.2Q.5 .5 1.2 .5H4.8L6 2H11.8Q12.5 2 12.5 2.7V9.8Q12.5 10.5 11.8 10.5H1.2Q.5 10.5 .5 9.8Z" fill="#c4c4c4"/></svg>
<span class="t" style="left:927.1px;top:847.72px;font-size:12.5px;line-height:16px;height:16px;color:#c4c4c4;letter-spacing:0.20px;">Scripts</span>
<svg class="s" style="left:898px;top:867px;" width="8" height="9" viewBox="0 0 8 9"><path d="M.8 .3V8.7L7.5 4.5Z" fill="#8a8a8a"/></svg>
<svg class="s" style="left:911px;top:866px;" width="13" height="11" viewBox="0 0 13 11"><path d="M.5 1.2Q.5 .5 1.2 .5H4.8L6 2H11.8Q12.5 2 12.5 2.7V9.8Q12.5 10.5 11.8 10.5H1.2Q.5 10.5 .5 9.8Z" fill="#c4c4c4"/></svg>
<span class="t" style="left:927.1px;top:863.72px;font-size:12.5px;line-height:16px;height:16px;color:#c4c4c4;letter-spacing:0.21px;">TextMesh Pro</span>
<svg class="s" style="left:884px;top:883px;" width="8" height="9" viewBox="0 0 8 9"><path d="M.8 .3V8.7L7.5 4.5Z" fill="#8a8a8a"/></svg>
<svg class="s" style="left:897px;top:882px;" width="13" height="11" viewBox="0 0 13 11"><path d="M.5 1.2Q.5 .5 1.2 .5H4.8L6 2H11.8Q12.5 2 12.5 2.7V9.8Q12.5 10.5 11.8 10.5H1.2Q.5 10.5 .5 9.8Z" fill="#c4c4c4"/></svg>
<span class="t" style="left:913.6px;top:879.55px;font-size:13px;line-height:16px;height:16px;color:#d0d0d0;-webkit-text-stroke:0.45px currentColor;letter-spacing:0.62px;">Packages</span>
<span class="t" style="left:1092px;top:674.72px;font-size:12.5px;line-height:16px;height:16px;color:#9a9a9a;letter-spacing:0.14px;">Assets</span>
<svg class="s" style="left:1137px;top:678px;" width="6" height="10" viewBox="0 0 6 10"><path d="M1 1 5 5 1 9" stroke="#9a9a9a" stroke-width="1.2" fill="none"/></svg>
<span class="t" style="left:1148.9px;top:674.55px;font-size:13px;line-height:16px;height:16px;color:#d0d0d0;-webkit-text-stroke:0.45px currentColor;letter-spacing:0.80px;">Materials</span>
<svg class="s" style="left:1104.6px;top:694.7px;" width="14" height="14" viewBox="0 0 14 14"><circle cx="7" cy="7" r="6" stroke="#6cc8f5" stroke-width="1.1" fill="none"/><circle cx="6" cy="5.8" r="3.9" fill="#86d8ff"/></svg>
<span class="t" style="left:1122px;top:694.72px;font-size:12.5px;line-height:16px;height:16px;color:#c4c4c4;letter-spacing:0.56px;">Black</span>
<svg class="s" style="left:1104.6px;top:710.7px;" width="14" height="14" viewBox="0 0 14 14"><circle cx="7" cy="7" r="6" stroke="#6cc8f5" stroke-width="1.1" fill="none"/><circle cx="6" cy="5.8" r="3.9" fill="#86d8ff"/></svg>
<span class="t" style="left:1122px;top:710.72px;font-size:12.5px;line-height:16px;height:16px;color:#c4c4c4;letter-spacing:0.39px;">Blue</span>
<div style="left:8px;top:1010px;width:1904px;height:22px;background:#191919"></div>
<div style="left:8px;top:1032px;width:1904px;height:1px;background:#2a2a2a"></div>
<div style="left:0px;top:1033px;width:1920px;height:7px;background:#171717"></div>
<div style="left:1807px;top:1012px;width:1px;height:19px;background:#242424"></div>
<div style="left:1833px;top:1012px;width:1px;height:19px;background:#242424"></div>
<div style="left:1859px;top:1012px;width:1px;height:19px;background:#242424"></div>
<div style="left:1885px;top:1012px;width:1px;height:19px;background:#242424"></div>
<svg class="s" style="left:1811px;top:1014px;" width="16" height="16" viewBox="0 0 16 16"><ellipse cx="8" cy="9" rx="3.9" ry="4.6" fill="#b8b8b8"/><path d="M5.4 4.8A2.6 2.6 0 0 1 10.6 4.8Z" fill="#b8b8b8"/><path d="M4.4 7.5H1.6M4.4 10.5 2 12.4M11.6 7.5H14.4M11.6 10.5 14 12.4M5.4 3 4 1.4M10.6 3 12 1.4" stroke="#b8b8b8" stroke-width="1"/><path d="M2 1.5 14.5 15" stroke="#191919" stroke-width="2.6"/><path d="M1.6 2 14.2 15.4" stroke="#b8b8b8" stroke-width="1.1"/></svg><svg class="s" style="left:1837px;top:1014px;" width="16" height="16" viewBox="0 0 16 16"><ellipse cx="8" cy="3.8" rx="5.6" ry="2.5" fill="#b8b8b8"/><path d="M2.4 6.2C2.4 8.8 13.6 8.8 13.6 6.2V8.6C13.6 11.2 2.4 11.2 2.4 8.6Z" fill="#b8b8b8"/><path d="M2.4 10.6C2.4 13.2 13.6 13.2 13.6 10.6V12.6C13.6 15.2 2.4 15.2 2.4 12.6Z" fill="#b8b8b8"/><path d="M2 1.5 14.5 15" stroke="#191919" stroke-width="2.6"/><path d="M1.6 2 14.2 15.4" stroke="#b8b8b8" stroke-width="1.1"/></svg><svg class="s" style="left:1864px;top:1014px;" width="16" height="16" viewBox="0 0 16 16"><path d="M2.6 6.4A5.6 5.6 0 0 1 12.6 4.2M13.4 9.6A5.6 5.6 0 0 1 3.4 11.8" stroke="#b8b8b8" stroke-width="1.2" fill="none"/><path d="M13.8 1.6V5H10.4M2.2 14.4V11H5.6" stroke="#b8b8b8" stroke-width="1.2" fill="none"/><circle cx="8" cy="8" r="2.2" stroke="#b8b8b8" stroke-width="1.1" fill="none"/><path d="M2 1.5 14.5 15" stroke="#191919" stroke-width="2.6"/><path d="M1.6 2 14.2 15.4" stroke="#b8b8b8" stroke-width="1.1"/></svg><svg class="s" style="left:1890px;top:1014px;" width="16" height="16" viewBox="0 0 16 16"><circle cx="8" cy="8" r="6.6" stroke="#b8b8b8" stroke-width="1.2" fill="none"/><path d="M5 8.2 7.2 10.4 11.2 5.8" stroke="#b8b8b8" stroke-width="1.5" fill="none"/></svg>
<div style="left:0px;top:1033px;width:1920px;height:7px;overflow:hidden"><div style="left:0;top:-1033px;width:1920px;height:1080px"><svg class="s" style="left:1820px;top:1022.5px;" width="16" height="16" viewBox="0 0 16 16"><ellipse cx="8" cy="9" rx="3.9" ry="4.6" fill="#a0a0a0"/><path d="M5.4 4.8A2.6 2.6 0 0 1 10.6 4.8Z" fill="#a0a0a0"/><path d="M4.4 7.5H1.6M4.4 10.5 2 12.4M11.6 7.5H14.4M11.6 10.5 14 12.4M5.4 3 4 1.4M10.6 3 12 1.4" stroke="#a0a0a0" stroke-width="1"/><path d="M2 1.5 14.5 15" stroke="#191919" stroke-width="2.6"/><path d="M1.6 2 14.2 15.4" stroke="#a0a0a0" stroke-width="1.1"/></svg><svg class="s" style="left:1846px;top:1022.5px;" width="16" height="16" viewBox="0 0 16 16"><ellipse cx="8" cy="3.8" rx="5.6" ry="2.5" fill="#a0a0a0"/><path d="M2.4 6.2C2.4 8.8 13.6 8.8 13.6 6.2V8.6C13.6 11.2 2.4 11.2 2.4 8.6Z" fill="#a0a0a0"/><path d="M2.4 10.6C2.4 13.2 13.6 13.2 13.6 10.6V12.6C13.6 15.2 2.4 15.2 2.4 12.6Z" fill="#a0a0a0"/><path d="M2 1.5 14.5 15" stroke="#191919" stroke-width="2.6"/><path d="M1.6 2 14.2 15.4" stroke="#a0a0a0" stroke-width="1.1"/></svg><svg class="s" style="left:1873px;top:1022.5px;" width="16" height="16" viewBox="0 0 16 16"><path d="M2.6 6.4A5.6 5.6 0 0 1 12.6 4.2M13.4 9.6A5.6 5.6 0 0 1 3.4 11.8" stroke="#a0a0a0" stroke-width="1.2" fill="none"/><path d="M13.8 1.6V5H10.4M2.2 14.4V11H5.6" stroke="#a0a0a0" stroke-width="1.2" fill="none"/><circle cx="8" cy="8" r="2.2" stroke="#a0a0a0" stroke-width="1.1" fill="none"/><path d="M2 1.5 14.5 15" stroke="#191919" stroke-width="2.6"/><path d="M1.6 2 14.2 15.4" stroke="#a0a0a0" stroke-width="1.1"/></svg><svg class="s" style="left:1899px;top:1022.5px;" width="16" height="16" viewBox="0 0 16 16"><circle cx="8" cy="8" r="6.6" stroke="#a0a0a0" stroke-width="1.2" fill="none"/><path d="M5 8.2 7.2 10.4 11.2 5.8" stroke="#a0a0a0" stroke-width="1.5" fill="none"/></svg></div></div>
<div style="left:1816px;top:1033px;width:1px;height:7px;background:#242424"></div>
<div style="left:1842px;top:1033px;width:1px;height:7px;background:#242424"></div>
<div style="left:1868px;top:1033px;width:1px;height:7px;background:#242424"></div>
<div style="left:1894px;top:1033px;width:1px;height:7px;background:#242424"></div>
<div style="left:0px;top:1040px;width:1920px;height:40px;background:#1b1b1b"></div>
<svg class="s" style="left:16px;top:1052px;" width="16" height="16" viewBox="0 0 16 16"><path d="M0 2.3 6.6 1.4V7.6H0ZM7.4 1.3 16 0V7.6H7.4ZM0 8.4H6.6V14.6L0 13.7ZM7.4 8.4H16V16L7.4 14.7Z" fill="#fff"/></svg>
<div style="left:48px;top:1040px;width:288px;height:40px;background:#2f2f2f;border:1px solid #4c4c4c;border-bottom:0"></div>
<svg class="s" style="left:59px;top:1051px;" width="18" height="18" viewBox="0 0 18 18"><circle cx="11" cy="7" r="5.2" stroke="#e8e8e8" stroke-width="1.3" fill="none"/><path d="M7.2 10.8 1 17" stroke="#e8e8e8" stroke-width="1.5"/></svg>
<span class="t" style="left:88.7px;top:1050.5px;font-size:15px;line-height:20px;height:20px;color:#e4e4e4;letter-spacing:-0.32px;">Escriu aquí per cercar</span>
<svg class="s" style="left:257px;top:1040px;" width="79" height="40" viewBox="0 0 79 40"><defs><linearGradient id="bp" x1="0" y1="0" x2="0" y2="1"><stop offset="0" stop-color="#2f9aff"/><stop offset="1" stop-color="#0e5ad6"/></linearGradient><linearGradient id="bp2" x1="0" y1="0" x2="0" y2="1"><stop offset="0" stop-color="#3ea2ff"/><stop offset="1" stop-color="#1f74ee"/></linearGradient></defs><path d="M0 38 13 25.4H70.5L79 35V40H0Z" fill="#efd3aa"/><path d="M0 38H79V40H0Z" fill="#d6b487"/><path d="M12.5 17.5 25 11.5 38 27 22 33.5Z" fill="#4aa552"/><path d="M13.5 15.5 22 11.2 26 12.6 33 28.5 22.5 31.8Z" fill="#f4f2f6"/><path d="M26 12.6 33 10.6 37.6 25.4 33 28.5Z" fill="#e7e3ee"/><path d="M17 17.5 23 15M18.4 20.5 24.4 18M19.8 23.5 25.8 21M21.2 26.5 27.2 24M28.6 15 32.6 13.6M29.8 18.2 33.8 16.8M31 21.4 35 20" stroke="#c9c5d2" stroke-width=".9"/><path d="M30.4 19.4 38.4 8.6 41.4 10.8 33.2 21.6 30 22.8Z" fill="#f2a838"/><path d="M38.4 8.6 40.2 6.2 43.2 8.4 41.4 10.8Z" fill="#f4655a"/><path d="M53.6 6.4V5.4A4.4 4.4 0 0 1 62.4 5.4V6.4" stroke="#2a86f2" stroke-width="1.6" fill="none"/><path d="M48.6 15C48.6 8 52 4.6 58 4.6S67.6 8 67.6 15V29Q67.6 33.4 63 33.4H53Q48.6 33.4 48.6 29Z" fill="url(#bp)"/><path d="M50.8 27C50.8 22 54 19.6 58 19.6S65.4 22 65.4 27V30.6H50.8Z" fill="url(#bp2)"/><path d="M51 29.4H65.2V30.2Q65.2 32 63.4 32H52.8Q51 32 51 30.2Z" fill="#c98cf2"/></svg>
<svg class="s" style="left:351px;top:1051px;" width="18" height="18" viewBox="0 0 18 18"><circle cx="9" cy="9" r="6.6" stroke="#fff" stroke-width="2" fill="none"/></svg>
<svg class="s" style="left:399px;top:1051px;" width="18" height="18" viewBox="0 0 18 18"><rect x="1.6" y="5.6" width="10" height="7" stroke="#fff" stroke-width="1.3" fill="none"/><path d="M1.6 4V1.7H11.6V4M1.6 14.2V16.5H11.6V14.2" stroke="#fff" stroke-width="1.3" fill="none"/><rect x="14" y="1" width="1.5" height="3.6" fill="#fff"/><rect x="14" y="9.4" width="1.5" height="7.6" fill="#fff"/><rect x="13.5" y="5.4" width="2.5" height="2.8" fill="#fff"/></svg>
<div style="left:729px;top:1040px;width:48px;height:40px;background:#404040"></div>
<div style="left:777px;top:1040px;width:3px;height:40px;background:#2e2e2e"></div>
<svg class="s" style="left:447px;top:1048px;" width="25" height="25" viewBox="0 0 25 25"><defs><linearGradient id="xa" x1="0" y1="0" x2="0" y2="1"><stop offset="0" stop-color="#f98a35"/><stop offset="1" stop-color="#ee6a10"/></linearGradient></defs><rect x=".3" y=".3" width="24" height="24" rx="3.2" fill="url(#xa)"/><path d="M5.6 7.4C5.6 4.2 10.2 4.4 12.2 7 14.2 4.4 18.8 4.2 18.8 7.4 18.8 9.6 16.8 10.6 16.8 12.2S18.8 14.8 18.8 17C18.8 20.2 14.2 20 12.2 17.4 10.2 20 5.6 20.2 5.6 17 5.6 14.8 7.6 13.8 7.6 12.2S5.6 9.6 5.6 7.4Z" fill="none" stroke="#fff" stroke-width="2.5" stroke-linejoin="round"/><circle cx="8.4" cy="12.2" r="1" fill="#fff"/></svg>
<svg class="s" style="left:495px;top:1049px;" width="24" height="22" viewBox="0 0 24 22"><path d="M1 3Q1 2 2 2H9L11 4H22Q23 4 23 5V18H1Z" fill="#f5b93c"/><path d="M1 7H23V19Q23 20 22 20H2Q1 20 1 19Z" fill="#fcd462"/><path d="M5 13H19V20H5Z" fill="#3a8ee6"/><path d="M8 16H16V20H8Z" fill="#fcd462"/></svg>
<svg class="s" style="left:545px;top:1048px;" width="24" height="24" viewBox="0 0 24 24"><circle cx="12" cy="12" r="11.5" fill="#e33b2e"/><path d="M12 12 1.6 7.2A11.5 11.5 0 0 0 11 23.4L16 14.6Z" fill="#2da94f"/><path d="M12 12 16.5 14.8 11 23.5A11.5 11.5 0 0 0 22.6 7.4H12Z" fill="#fcc934"/><circle cx="12" cy="12" r="5.3" fill="#fff"/><circle cx="12" cy="12" r="4.2" fill="#4a8af4"/></svg>
<svg class="s" style="left:594px;top:1048px;" width="24" height="24" viewBox="0 0 24 24"><path d="M17 1 23 3.8V20.2L17 23 6 13.6 2.4 16.4 1 15.4V8.6L2.4 7.6 6 10.4Z" fill="#2489ca"/><path d="M17 1 23 3.8V20.2L17 23Z" fill="#1070b3"/><path d="M17 7.4 10.6 12 17 16.6Z" fill="#1b1b1b"/><path d="M17 1 6 10.4 2.4 7.6 1 8.6 4.8 12 1 15.4 2.4 16.4 6 13.6 17 23V16.6L10.6 12 17 7.4Z" fill="#3c99d4"/></svg>
<svg class="s" style="left:643px;top:1048px;" width="24" height="24" viewBox="0 0 24 24"><circle cx="12" cy="12" r="11.5" fill="#e33b2e"/><path d="M12 12 1.6 7.2A11.5 11.5 0 0 0 11 23.4L16 14.6Z" fill="#2da94f"/><path d="M12 12 16.5 14.8 11 23.5A11.5 11.5 0 0 0 22.6 7.4H12Z" fill="#fcc934"/><circle cx="12" cy="12" r="5.3" fill="#fff"/><circle cx="12" cy="12" r="4.2" fill="#4a8af4"/></svg>
<svg class="s" style="left:656px;top:1061px;" width="14" height="13" viewBox="0 0 14 13"><ellipse cx="7" cy="6.5" rx="6.5" ry="6" fill="#1a1a1a"/><ellipse cx="7" cy="8" rx="4" ry="4" fill="#e8c7b0"/><path d="M1 6C2 1 12 1 13 6 10 3.5 4 3.5 1 6Z" fill="#111"/></svg>
<svg class="s" style="left:692px;top:1048px;" width="24" height="24" viewBox="0 0 24 24"><path d="M12 1 21.5 6.5V17.5L12 23 2.5 17.5V6.5Z" fill="#bdbdbd"/><path d="M12 12 21.5 6.5V17.5L12 23Z" fill="#9a9a9a"/><path d="M12 12 2.5 6.5 12 1 21.5 6.5Z" fill="#e6e6e6"/><path d="M12 12V18.6M12 12 6.4 8.8M12 12 17.6 8.8" stroke="#1d1d1d" stroke-width="1.8" fill="none"/><path d="M12 5V8M6.2 15.2 8.6 13.8M17.8 15.2 15.4 13.8" stroke="#1d1d1d" stroke-width="1.2"/></svg>
<svg class="s" style="left:741px;top:1048px;" width="24" height="24" viewBox="0 0 24 24"><path d="M12 1 21.5 6.5V17.5L12 23 2.5 17.5V6.5Z" fill="#e8e8e8"/><path d="M12 12 21.5 6.5V17.5L12 23Z" fill="#111"/><path d="M12 12 2.5 6.5 12 1 21.5 6.5Z" fill="#f4f4f4"/><path d="M12 12V18.6M12 12 6.4 8.8M12 12 17.6 8.8" stroke="#1d1d1d" stroke-width="1.8" fill="none"/><path d="M12 5V8M6.2 15.2 8.6 13.8M17.8 15.2 15.4 13.8" stroke="#1d1d1d" stroke-width="1.2"/></svg>
<svg class="s" style="left:790px;top:1048px;" width="24" height="24" viewBox="0 0 24 24"><rect x=".8" y=".8" width="22.4" height="22.4" fill="#0a0f3c" stroke="#8fb8ff" stroke-width="1.4"/></svg>
<span class="t" style="left:794px;top:1051px;font-size:14px;line-height:18px;height:18px;color:#8fc0ff;font-weight:bold;letter-spacing:-0.5px">Ps</span>
<svg class="s" style="left:839px;top:1048px;" width="24" height="24" viewBox="0 0 24 24"><path d="M17 1 23 3.6V20.4L17 23 7 14.6 3.4 17.4 1 16.2V7.8L3.4 6.6 7 9.4Z" fill="#8a5fd1"/><path d="M17 1 23 3.6V20.4L17 23Z" fill="#b48cf2"/><path d="M17 7.6 11 12 17 16.4Z" fill="#1b1b1b"/><path d="M3.4 9.6 6 12 3.4 14.4Z" fill="#1b1b1b"/></svg>
<svg class="s" style="left:888px;top:1048px;" width="24" height="24" viewBox="0 0 24 24"><defs><linearGradient id="ph" x1="0" y1="0" x2="1" y2="1"><stop offset="0" stop-color="#1f7fe6"/><stop offset="1" stop-color="#2a5fd8"/></linearGradient></defs><rect x="1" y="1" width="22" height="22" rx="3" fill="url(#ph)"/><path d="M1 20 10 9 16 16 13 23H4Q1 23 1 20Z" fill="#3fd0f7"/><path d="M9 23 17 14 23 20Q23 23 20 23Z" fill="#29a6ee"/><circle cx="17" cy="6" r="2" fill="#e8eef8"/></svg>
<div style="left:488px;top:1078px;width:35px;height:2px;background:#76b9ed"></div>
<div style="left:635px;top:1078px;width:40px;height:2px;background:#76b9ed"></div>
<div style="left:684px;top:1078px;width:40px;height:2px;background:#76b9ed"></div>
<div style="left:729px;top:1078px;width:48px;height:2px;background:#76b9ed"></div>
<div style="left:782px;top:1078px;width:40px;height:2px;background:#76b9ed"></div>
<div style="left:831px;top:1078px;width:40px;height:2px;background:#76b9ed"></div>
<div style="left:880px;top:1078px;width:40px;height:2px;background:#76b9ed"></div>
<div style="left:523px;top:1078px;width:5px;height:2px;background:#5a8fb8"></div>
<svg class="s" style="left:1535px;top:1050px;" width="20" height="20" viewBox="0 0 20 20"><defs><linearGradient id="su" x1="0" y1="0" x2="1" y2="1"><stop offset="0" stop-color="#f9b233"/><stop offset="1" stop-color="#ee5a13"/></linearGradient></defs><circle cx="10" cy="10" r="10" fill="url(#su)"/></svg>
<span class="t" style="left:1565.3px;top:1052px;font-size:14px;line-height:18px;height:18px;color:#fff;letter-spacing:-0.86px;">20°C</span>
<span class="t" style="left:1603.3px;top:1052px;font-size:14px;line-height:18px;height:18px;color:#fff;letter-spacing:-0.28px;">Soleado</span>
<svg class="s" style="left:1677px;top:1056px;" width="12" height="8" viewBox="0 0 12 8"><path d="M1 7 6 1.5 11 7" stroke="#fff" stroke-width="1.3" fill="none"/></svg>
<svg class="s" style="left:1698px;top:1053px;" width="18" height="12" viewBox="0 0 18 12"><rect x="4" y="2.5" width="12" height="7.5" stroke="#fff" stroke-width="1.2" fill="none"/><rect x="16.4" y="4.6" width="1.4" height="3.4" fill="#fff"/><rect x="5.6" y="4" width="7" height="4.4" fill="#fff"/><path d="M2.5 .5V3M.8 3H4.2V5.5Q2.5 7.5 .8 5.5Z" stroke="#fff" stroke-width="1" fill="#1b1b1b"/></svg>
<svg class="s" style="left:1725px;top:1053px;" width="15" height="14" viewBox="0 0 15 14"><path d="M1 13A12 12 0 0 1 13 1" stroke="#888" stroke-width="1.2" fill="none"/><path d="M4 13A9 9 0 0 1 13 4" stroke="#fff" stroke-width="1.2" fill="none"/><path d="M7 13A6 6 0 0 1 13 7" stroke="#fff" stroke-width="1.2" fill="none"/><circle cx="11.6" cy="11.6" r="1.4" fill="#fff"/></svg>
<svg class="s" style="left:1746px;top:1052px;" width="18" height="16" viewBox="0 0 18 16"><path d="M1 5.5H3.6L7.4 2V14L3.6 10.5H1Z" stroke="#fff" stroke-width="1.1" fill="none"/><path d="M9.6 5.6Q11 8 9.6 10.4" stroke="#fff" stroke-width="1" fill="none"/><path d="M12 3.8Q14.4 8 12 12.2" stroke="#aaa" stroke-width="1" fill="none"/><path d="M14.4 2Q17.8 8 14.4 14" stroke="#777" stroke-width="1" fill="none"/></svg>
<span class="t" style="left:1774.3px;top:1052px;font-size:12.01px;line-height:16px;height:16px;color:#fff;letter-spacing:-1.21px;">CAT</span>
<span class="t" style="left:1821.7px;top:1044px;font-size:12.01px;line-height:15px;height:15px;color:#fff;letter-spacing:-0.86px;">16:29</span>
<span class="t" style="left:1809px;top:1062px;font-size:12.01px;line-height:15px;height:15px;color:#fff;letter-spacing:-0.18px;">20/2/2024</span>
<svg class="s" style="left:1878px;top:1051px;" width="18" height="18" viewBox="0 0 18 18"><path d="M1 1H17V13.5H11L9 16 7 13.5H1Z" fill="#fff"/><path d="M4 4.5H14M4 7H14M4 9.5H11" stroke="#1b1b1b" stroke-width="1"/></svg>
<div style="left:1915px;top:1043px;width:1px;height:37px;background:#8a8a8a"></div>
</div>
<svg class="s" style="left:0;top:0" width="1920" height="1080" viewBox="0 0 1920 1080"><path d="M519 596L367.3 458.7" stroke="#fff" stroke-width="2.4" fill="none"/><path d="M354 446.6L372.8 457.1L366.3 464.3Z" fill="#fff"/><path d="M1107.8 699.5L994.6 213.1" stroke="#fff" stroke-width="2.2" fill="none"/><path d="M990.3 194.6L1000.2 214.9L990.4 217.2Z" fill="#fff"/><path d="M1121 634L1121.3 658.0" stroke="#fff" stroke-width="2.0" fill="none"/><path d="M1121.5 675L1116.3 655.1L1126.3 654.9Z" fill="#fff"/><path d="M1181 629L1176.2 653.8" stroke="#fff" stroke-width="2.0" fill="none"/><path d="M1173 670.5L1171.9 649.9L1181.7 651.8Z" fill="#fff"/></svg>
</body>
</html>
